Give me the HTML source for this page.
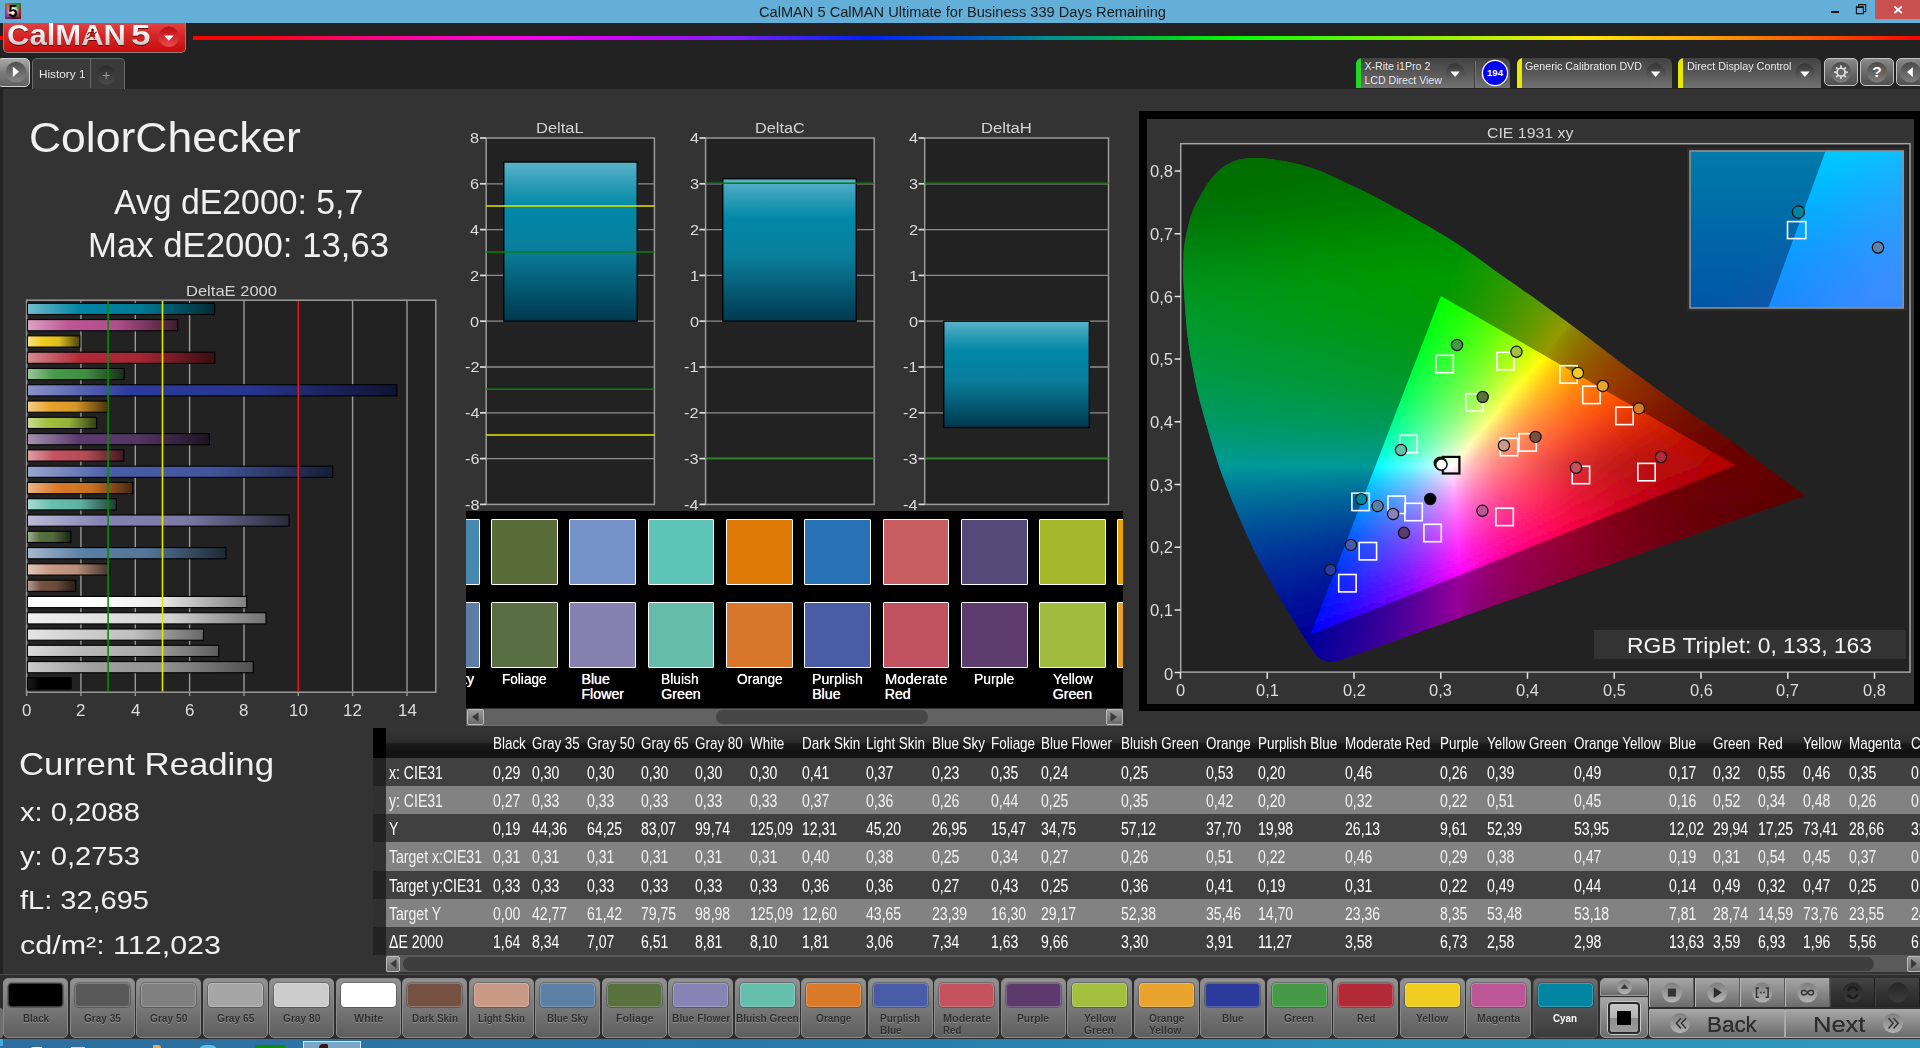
<!DOCTYPE html><html><head><meta charset="utf-8"><title>CalMAN 5</title><style>
html,body{margin:0;padding:0;background:#333;}
html{width:1920px;height:1048px;overflow:hidden;}
body{width:1920px;height:1048px;position:relative;overflow:hidden;font-family:"Liberation Sans",sans-serif;}
#app{position:absolute;left:0;top:0;width:1920px;height:1048px;overflow:hidden;contain:strict;}
.b{position:absolute;box-sizing:border-box;}
.t{position:absolute;white-space:nowrap;transform-origin:0 50%;display:block;}
svg{position:absolute;left:0;top:0;overflow:visible;}
</style></head><body><div id="app"><div class="b" style="left:0.00px;top:0.00px;width:1920.00px;height:23.00px;background:#63afd7;"></div>
<div class="b" style="left:5.00px;top:3.00px;width:16.00px;height:16.00px;background:conic-gradient(from 30deg,#2a8a2a,#a02020,#301030,#a030a0,#c06020,#2a8a2a);overflow:hidden;"><div class="b" style="left:2px;top:2px;width:12px;height:12px;background:radial-gradient(#fff 25%,rgba(255,255,255,.15) 72%);"></div></div>
<span class="t" style="left:8.20px;top:3.33px;font-size:16.50px;line-height:16.50px;color:#000;font-weight:700;">5</span>
<span class="t" style="left:759.00px;top:3.68px;font-size:15.50px;line-height:15.50px;color:#1c1c1c;transform:scaleX(0.9430);">CalMAN 5 CalMAN Ultimate for Business 339 Days Remaining</span>
<div class="b" style="left:1831.00px;top:11.00px;width:8.00px;height:2.00px;background:#1a1410;"></div>
<svg width="1920" height="24"><path d="M1856.4 7.2h7v6.4h-7zM1858.7 6.4v-1.8h7v7h-1.9" fill="none" stroke="#1a1410" stroke-width="1.1"/><rect x="1855.9" y="6.2" width="8" height="1.7" fill="#1a1410"/><rect x="1875" y="0" width="45" height="19" fill="#c8504f"/><path d="M1894.4 6.5l7.4 6.5m0-6.5l-7.4 6.5" stroke="#fff" stroke-width="1.8" fill="none"/></svg>
<div class="b" style="left:0.00px;top:23.00px;width:1920.00px;height:65.60px;background:#222;"></div>
<div class="b" style="left:0.00px;top:35.50px;width:4.00px;height:4.70px;background:#f00;"></div>
<div class="b" style="left:193.00px;top:35.50px;width:1727.00px;height:4.70px;background:linear-gradient(90deg,#ff0000 0%,#ff0010 3.9%,#ff0060 8.5%,#ff00a0 12.5%,#ff00e0 17.8%,#d000ff 24.5%,#8020ff 31.1%,#0020ff 39.1%,#0060c0 45.7%,#009090 49.7%,#00a860 53%,#00e010 58.3%,#10ff00 61%,#80f000 70.3%,#c0f000 75.6%,#ffe800 80.4%,#ffb000 86.2%,#ff7000 91.5%,#ff3000 96.9%,#ff0000 100%);"></div>
<div class="b" style="left:3.00px;top:23.00px;width:182.60px;height:29.50px;background:linear-gradient(#e24343,#d62525 45%,#c80c0c);border-radius:0 0 5px 5px;border:1px solid #8e8080;border-top:none;"></div>
<span class="t" style="left:7.40px;top:20.44px;font-size:30.20px;line-height:30.20px;color:#ececec;font-weight:700;transform:scaleX(1.0279);background:linear-gradient(#ffffff 15%,#f0f0f0 45%,#c4c4c4 85%);-webkit-background-clip:text;background-clip:text;-webkit-text-fill-color:transparent;filter:drop-shadow(0 1px .6px rgba(70,0,0,.75));">CalMAN</span>
<span class="t" style="left:130.60px;top:20.44px;font-size:30.20px;line-height:30.20px;color:#ececec;font-weight:700;transform:scaleX(1.1669);background:linear-gradient(#ffffff 15%,#f0f0f0 45%,#c4c4c4 85%);-webkit-background-clip:text;background-clip:text;-webkit-text-fill-color:transparent;filter:drop-shadow(0 1px .6px rgba(70,0,0,.75));">5</span>
<svg width="200" height="60"><defs><linearGradient id="lg1" x1="0" y1="0" x2="0" y2="1"><stop offset="0" stop-color="#bb0a14"/><stop offset="1" stop-color="#ea4c4c"/></linearGradient></defs><circle cx="168.8" cy="36.8" r="10.2" fill="url(#lg1)"/><path d="M164 35.6h9.8l-4.9 5.2z" fill="#fff"/><g fill="none" stroke="#8c0c0c" stroke-width="1.15" stroke-linecap="round" stroke-linejoin="round"><path d="M92 32L90.3 35.4M91.8 32.4L94.6 33.8L96.2 32.2M91.6 32.4L88.8 32.8L87.6 34.8M90.3 35.4L93.4 36.2L94.4 38.8M90.3 35.4L89.6 37.6L87 38.4"/></g><circle cx="92.6" cy="30" r="1.35" fill="#8c0c0c"/></svg>
<div class="b" style="left:-3.00px;top:58.00px;width:33.00px;height:28.50px;background:linear-gradient(#a8a8a8,#7c7c7c 50%,#626262);border:1px solid #d0d0d0;border-radius:5px;"></div>
<svg width="200" height="100"><defs><linearGradient id="lg2" x1="0" y1="0" x2="0" y2="1"><stop offset="0" stop-color="#4e4e4e"/><stop offset="1" stop-color="#868686"/></linearGradient><linearGradient id="lg3" x1="0" y1="0" x2="0" y2="1"><stop offset="0" stop-color="#2c2c2c"/><stop offset="1" stop-color="#4a4a4a"/></linearGradient></defs><circle cx="16" cy="72" r="10.3" fill="url(#lg2)"/><path d="M12.8 66.5v10.6l6.2-5.3z" fill="#fff"/></svg>
<div class="b" style="left:32.00px;top:58.00px;width:92.50px;height:31.00px;background:#3a3a3a;border:1px solid #6a6a6a;border-bottom:none;border-radius:5px 5px 0 0;"></div>
<div class="b" style="left:90.00px;top:59.00px;width:1.00px;height:29.00px;background:#6a6a6a;"></div>
<span class="t" style="left:38.50px;top:67.98px;font-size:11.60px;line-height:11.60px;color:#e8e8e8;transform:scaleX(1.0160);">History 1</span>
<svg width="200" height="100"><circle cx="106.3" cy="75" r="9.6" fill="url(#lg3)"/><path d="M102.8 75.5h7M106.3 72v7" stroke="#999" stroke-width="1" fill="none"/></svg>
<div class="b" style="left:1356.30px;top:58.00px;width:153.70px;height:30.00px;background:linear-gradient(#424242,#585858 50%,#727272);border-radius:6px 6px 0 0;overflow:hidden;"><div class="b" style="left:0;top:0;width:5.2px;height:30px;background:#20d820"></div></div>
<div class="b" style="left:1516.50px;top:58.00px;width:155.00px;height:30.00px;background:linear-gradient(#424242,#585858 50%,#727272);border-radius:6px 6px 0 0;overflow:hidden;"><div class="b" style="left:0;top:0;width:5.2px;height:30px;background:#eaea00"></div></div>
<div class="b" style="left:1677.90px;top:58.00px;width:143.10px;height:30.00px;background:linear-gradient(#424242,#585858 50%,#727272);border-radius:6px 6px 0 0;overflow:hidden;"><div class="b" style="left:0;top:0;width:5.2px;height:30px;background:#eaea00"></div></div>
<span class="t" style="left:1364.40px;top:60.53px;font-size:10.60px;line-height:10.60px;color:#f4f4f4;text-shadow:0 0 1px rgba(0,0,0,.5);">X-Rite i1Pro 2</span>
<span class="t" style="left:1364.40px;top:74.63px;font-size:10.60px;line-height:10.60px;color:#f4f4f4;text-shadow:0 0 1px rgba(0,0,0,.5);">LCD Direct View</span>
<span class="t" style="left:1525.00px;top:60.53px;font-size:10.60px;line-height:10.60px;color:#f4f4f4;transform:scaleX(1.0081);text-shadow:0 0 1px rgba(0,0,0,.5);">Generic Calibration DVD</span>
<span class="t" style="left:1687.10px;top:61.03px;font-size:10.60px;line-height:10.60px;color:#f4f4f4;transform:scaleX(1.0195);text-shadow:0 0 1px rgba(0,0,0,.5);">Direct Display Control</span>
<div class="b" style="left:1474.20px;top:61.00px;width:1.00px;height:27.00px;background:#3a3a3a;"></div>
<div class="b" style="left:1475.20px;top:61.00px;width:1.00px;height:27.00px;background:#777;"></div>
<svg width="1920" height="100"><defs><linearGradient id="lg4" x1="0" y1="0" x2="0" y2="1"><stop offset="0" stop-color="#353535"/><stop offset="1" stop-color="#6c6c6c"/></linearGradient><linearGradient id="lg5" x1="0" y1="0" x2="0" y2="1"><stop offset="0" stop-color="#4a4a4a"/><stop offset="1" stop-color="#7e7e7e"/></linearGradient></defs><circle cx="1455.1" cy="73" r="9.7" fill="url(#lg4)"/><path d="M1450.4 71.6h9.4l-4.7 5.4z" fill="#fff"/><circle cx="1655.6" cy="73" r="9.7" fill="url(#lg4)"/><path d="M1650.9 71.6h9.4l-4.7 5.4z" fill="#fff"/><circle cx="1804.9" cy="73" r="9.7" fill="url(#lg4)"/><path d="M1800.2 71.6h9.4l-4.7 5.4z" fill="#fff"/><circle cx="1495" cy="73" r="12.6" fill="#0000f0" stroke="#fff" stroke-width="1.3"/></svg>
<span class="t" style="left:1486.99px;top:68.17px;font-size:9.60px;line-height:9.60px;color:#fff;font-weight:700;">194</span>
<div class="b" style="left:1823.80px;top:58.00px;width:34.40px;height:28.30px;background:linear-gradient(#8a8a8a,#6a6a6a 50%,#505050);border:1px solid #c4c4c4;border-radius:5px;"></div>
<div class="b" style="left:1860.20px;top:58.00px;width:33.80px;height:28.30px;background:linear-gradient(#8a8a8a,#6a6a6a 50%,#505050);border:1px solid #c4c4c4;border-radius:5px;"></div>
<div class="b" style="left:1896.30px;top:58.00px;width:34.00px;height:28.30px;background:linear-gradient(#8a8a8a,#6a6a6a 50%,#505050);border:1px solid #c4c4c4;border-radius:5px;"></div>
<svg width="1920" height="100"><circle cx="1841.0" cy="72.2" r="10.2" fill="url(#lg5)"/><circle cx="1877.1" cy="72.2" r="10.2" fill="url(#lg5)"/><circle cx="1910.5" cy="72.2" r="10.2" fill="url(#lg5)"/><path d="M1847.84 71.31L1847.84 73.09L1845.81 73.14L1845.06 74.94L1846.47 76.41L1845.21 77.67L1843.74 76.26L1841.94 77.01L1841.89 79.04L1840.11 79.04L1840.06 77.01L1838.26 76.26L1836.79 77.67L1835.53 76.41L1836.94 74.94L1836.19 73.14L1834.16 73.09L1834.16 71.31L1836.19 71.26L1836.94 69.46L1835.53 67.99L1836.79 66.73L1838.26 68.14L1840.06 67.39L1840.11 65.36L1841.89 65.36L1841.94 67.39L1843.74 68.14L1845.21 66.73L1846.47 67.99L1845.06 69.46L1845.81 71.26Z" fill="#d8d8d8"/><circle cx="1841" cy="72.2" r="3.1" fill="#6a6a6a"/><circle cx="1841" cy="72.2" r="2.1" fill="#666"/><path d="M1912.8 67.2v9.8l-5.8-4.9z" fill="#fff"/></svg>
<span class="t" style="left:1872.37px;top:64.48px;font-size:15.50px;line-height:15.50px;color:#fff;font-weight:700;">?</span>
<div class="b" style="left:0.00px;top:88.00px;width:3.00px;height:960.00px;background:#222;"></div>
<span class="t" style="left:29.20px;top:116.08px;font-size:43.02px;line-height:43.02px;color:#f0f0f0;transform:scaleX(1.0341);">ColorChecker</span>
<span class="t" style="left:113.80px;top:184.69px;font-size:34.16px;line-height:34.16px;color:#f0f0f0;transform:scaleX(0.9890);">Avg dE2000: 5,7</span>
<span class="t" style="left:88.00px;top:228.39px;font-size:34.16px;line-height:34.16px;color:#f0f0f0;transform:scaleX(1.0161);">Max dE2000: 13,63</span>
<span class="t" style="left:185.70px;top:282.70px;font-size:15.12px;line-height:15.12px;color:#d4d4d4;transform:scaleX(1.0937);">DeltaE 2000</span>
<svg width="460" height="730"><defs><linearGradient id="bg0"><stop offset="0" stop-color="#1c1c1c"/><stop offset=".3" stop-color="#000"/><stop offset="1" stop-color="#000"/></linearGradient><linearGradient id="bg1"><stop offset="0" stop-color="#cbcbcb"/><stop offset=".28" stop-color="#a0a0a0"/><stop offset=".6" stop-color="#939393"/><stop offset="1" stop-color="#505050"/></linearGradient><linearGradient id="bg2"><stop offset="0" stop-color="#d9d9d9"/><stop offset=".28" stop-color="#bababa"/><stop offset=".6" stop-color="#ababab"/><stop offset="1" stop-color="#5d5d5d"/></linearGradient><linearGradient id="bg3"><stop offset="0" stop-color="#e5e5e5"/><stop offset=".28" stop-color="#d0d0d0"/><stop offset=".6" stop-color="#bfbfbf"/><stop offset="1" stop-color="#686868"/></linearGradient><linearGradient id="bg4"><stop offset="0" stop-color="#f0f0f0"/><stop offset=".28" stop-color="#e4e4e4"/><stop offset=".6" stop-color="#d2d2d2"/><stop offset="1" stop-color="#727272"/></linearGradient><linearGradient id="bg5"><stop offset="0" stop-color="#ffffff"/><stop offset=".28" stop-color="#ffffff"/><stop offset=".6" stop-color="#ebebeb"/><stop offset="1" stop-color="#808080"/></linearGradient><linearGradient id="bg6"><stop offset="0" stop-color="#b49f96"/><stop offset=".28" stop-color="#765040"/><stop offset=".6" stop-color="#6d4a3b"/><stop offset="1" stop-color="#261a14"/></linearGradient><linearGradient id="bg7"><stop offset="0" stop-color="#e1c7bc"/><stop offset=".28" stop-color="#c99a85"/><stop offset=".6" stop-color="#b98e7a"/><stop offset="1" stop-color="#40312b"/></linearGradient><linearGradient id="bg8"><stop offset="0" stop-color="#a5b9ce"/><stop offset=".28" stop-color="#5b7fa5"/><stop offset=".6" stop-color="#547598"/><stop offset="1" stop-color="#1d2935"/></linearGradient><linearGradient id="bg9"><stop offset="0" stop-color="#a4b195"/><stop offset=".28" stop-color="#59713f"/><stop offset=".6" stop-color="#52683a"/><stop offset="1" stop-color="#1c2414"/></linearGradient><linearGradient id="bg10"><stop offset="0" stop-color="#bdbbd6"/><stop offset=".28" stop-color="#8784b5"/><stop offset=".6" stop-color="#7c79a7"/><stop offset="1" stop-color="#2b2a3a"/></linearGradient><linearGradient id="bg11"><stop offset="0" stop-color="#abdcd2"/><stop offset=".28" stop-color="#66bfad"/><stop offset=".6" stop-color="#5eb09f"/><stop offset="1" stop-color="#213d37"/></linearGradient><linearGradient id="bg12"><stop offset="0" stop-color="#ebb689"/><stop offset=".28" stop-color="#da7a28"/><stop offset=".6" stop-color="#c97025"/><stop offset="1" stop-color="#46270d"/></linearGradient><linearGradient id="bg13"><stop offset="0" stop-color="#9aa5cf"/><stop offset=".28" stop-color="#485ca8"/><stop offset=".6" stop-color="#42559b"/><stop offset="1" stop-color="#171d36"/></linearGradient><linearGradient id="bg14"><stop offset="0" stop-color="#dfa0a7"/><stop offset=".28" stop-color="#c4525f"/><stop offset=".6" stop-color="#b44b57"/><stop offset="1" stop-color="#3f1a1e"/></linearGradient><linearGradient id="bg15"><stop offset="0" stop-color="#a593af"/><stop offset=".28" stop-color="#5c3a6e"/><stop offset=".6" stop-color="#553565"/><stop offset="1" stop-color="#1d1323"/></linearGradient><linearGradient id="bg16"><stop offset="0" stop-color="#ccdc95"/><stop offset=".28" stop-color="#a2c03e"/><stop offset=".6" stop-color="#95b139"/><stop offset="1" stop-color="#343d14"/></linearGradient><linearGradient id="bg17"><stop offset="0" stop-color="#f2cd8b"/><stop offset=".28" stop-color="#e8a42c"/><stop offset=".6" stop-color="#d59728"/><stop offset="1" stop-color="#4a340e"/></linearGradient><linearGradient id="bg18"><stop offset="0" stop-color="#8a93c9"/><stop offset=".28" stop-color="#2b3a9c"/><stop offset=".6" stop-color="#283590"/><stop offset="1" stop-color="#0e1332"/></linearGradient><linearGradient id="bg19"><stop offset="0" stop-color="#99c79a"/><stop offset=".28" stop-color="#469a47"/><stop offset=".6" stop-color="#408e41"/><stop offset="1" stop-color="#163117"/></linearGradient><linearGradient id="bg20"><stop offset="0" stop-color="#d58a92"/><stop offset=".28" stop-color="#b22a38"/><stop offset=".6" stop-color="#a42734"/><stop offset="1" stop-color="#390d12"/></linearGradient><linearGradient id="bg21"><stop offset="0" stop-color="#f7e484"/><stop offset=".28" stop-color="#f0cd20"/><stop offset=".6" stop-color="#ddbd1d"/><stop offset="1" stop-color="#4d420a"/></linearGradient><linearGradient id="bg22"><stop offset="0" stop-color="#dba2c5"/><stop offset=".28" stop-color="#bd5696"/><stop offset=".6" stop-color="#ae4f8a"/><stop offset="1" stop-color="#3c1c30"/></linearGradient><linearGradient id="bg23"><stop offset="0" stop-color="#73bccc"/><stop offset=".28" stop-color="#0085a3"/><stop offset=".6" stop-color="#007a96"/><stop offset="1" stop-color="#002b34"/></linearGradient></defs><rect x="26.6" y="300.2" width="409.2" height="392" fill="#222" stroke="#9a9a9a" stroke-width="1.5"/><path d="M80.9 301v390.5" stroke="#9a9a9a" stroke-width="1.4"/><path d="M135.3 301v390.5" stroke="#9a9a9a" stroke-width="1.4"/><path d="M189.6 301v390.5" stroke="#9a9a9a" stroke-width="1.4"/><path d="M244.0 301v390.5" stroke="#9a9a9a" stroke-width="1.4"/><path d="M352.6 301v390.5" stroke="#9a9a9a" stroke-width="1.4"/><path d="M407.0 301v390.5" stroke="#9a9a9a" stroke-width="1.4"/><rect x="27.4" y="303.30" width="187.22" height="11.2" fill="url(#bg23)" stroke="#000" stroke-width="1.1"/><rect x="27.4" y="319.59" width="150.27" height="11.2" fill="url(#bg22)" stroke="#000" stroke-width="1.1"/><rect x="27.4" y="335.87" width="52.45" height="11.2" fill="url(#bg21)" stroke="#000" stroke-width="1.1"/><rect x="27.4" y="352.16" width="187.49" height="11.2" fill="url(#bg20)" stroke="#000" stroke-width="1.1"/><rect x="27.4" y="368.44" width="96.74" height="11.2" fill="url(#bg19)" stroke="#000" stroke-width="1.1"/><rect x="27.4" y="384.73" width="369.53" height="11.2" fill="url(#bg18)" stroke="#000" stroke-width="1.1"/><rect x="27.4" y="401.01" width="80.17" height="11.2" fill="url(#bg17)" stroke="#000" stroke-width="1.1"/><rect x="27.4" y="417.30" width="69.30" height="11.2" fill="url(#bg16)" stroke="#000" stroke-width="1.1"/><rect x="27.4" y="433.58" width="182.05" height="11.2" fill="url(#bg15)" stroke="#000" stroke-width="1.1"/><rect x="27.4" y="449.87" width="96.47" height="11.2" fill="url(#bg14)" stroke="#000" stroke-width="1.1"/><rect x="27.4" y="466.15" width="305.41" height="11.2" fill="url(#bg13)" stroke="#000" stroke-width="1.1"/><rect x="27.4" y="482.44" width="105.43" height="11.2" fill="url(#bg12)" stroke="#000" stroke-width="1.1"/><rect x="27.4" y="498.72" width="88.86" height="11.2" fill="url(#bg11)" stroke="#000" stroke-width="1.1"/><rect x="27.4" y="515.00" width="261.66" height="11.2" fill="url(#bg10)" stroke="#000" stroke-width="1.1"/><rect x="27.4" y="531.29" width="43.49" height="11.2" fill="url(#bg9)" stroke="#000" stroke-width="1.1"/><rect x="27.4" y="547.58" width="198.63" height="11.2" fill="url(#bg8)" stroke="#000" stroke-width="1.1"/><rect x="27.4" y="563.86" width="82.34" height="11.2" fill="url(#bg7)" stroke="#000" stroke-width="1.1"/><rect x="27.4" y="580.14" width="48.38" height="11.2" fill="url(#bg6)" stroke="#000" stroke-width="1.1"/><rect x="27.4" y="596.43" width="219.28" height="11.2" fill="url(#bg5)" stroke="#000" stroke-width="1.1"/><rect x="27.4" y="612.72" width="238.57" height="11.2" fill="url(#bg4)" stroke="#000" stroke-width="1.1"/><rect x="27.4" y="629.00" width="176.08" height="11.2" fill="url(#bg3)" stroke="#000" stroke-width="1.1"/><rect x="27.4" y="645.29" width="191.29" height="11.2" fill="url(#bg2)" stroke="#000" stroke-width="1.1"/><rect x="27.4" y="661.57" width="225.80" height="11.2" fill="url(#bg1)" stroke="#000" stroke-width="1.1"/><rect x="27.4" y="677.86" width="43.76" height="11.2" fill="url(#bg0)" stroke="#000" stroke-width="1.1"/><path d="M108.1 301v390.5" stroke="#0a8a0a" stroke-width="1.6"/><path d="M162.5 301v390.5" stroke="#e6e600" stroke-width="1.6"/><path d="M298.3 301v390.5" stroke="#e01818" stroke-width="1.6"/><path d="M26.6 692v4" stroke="#9a9a9a" stroke-width="1.4"/><path d="M80.9 692v4" stroke="#9a9a9a" stroke-width="1.4"/><path d="M135.3 692v4" stroke="#9a9a9a" stroke-width="1.4"/><path d="M189.6 692v4" stroke="#9a9a9a" stroke-width="1.4"/><path d="M244.0 692v4" stroke="#9a9a9a" stroke-width="1.4"/><path d="M298.3 692v4" stroke="#9a9a9a" stroke-width="1.4"/><path d="M352.6 692v4" stroke="#9a9a9a" stroke-width="1.4"/><path d="M407.0 692v4" stroke="#9a9a9a" stroke-width="1.4"/></svg>
<span class="t" style="left:21.89px;top:702.51px;font-size:15.70px;line-height:15.70px;color:#dcdcdc;transform:scaleX(1.0800);">0</span>
<span class="t" style="left:76.23px;top:702.51px;font-size:15.70px;line-height:15.70px;color:#dcdcdc;transform:scaleX(1.0800);">2</span>
<span class="t" style="left:130.57px;top:702.51px;font-size:15.70px;line-height:15.70px;color:#dcdcdc;transform:scaleX(1.0800);">4</span>
<span class="t" style="left:184.91px;top:702.51px;font-size:15.70px;line-height:15.70px;color:#dcdcdc;transform:scaleX(1.0800);">6</span>
<span class="t" style="left:239.25px;top:702.51px;font-size:15.70px;line-height:15.70px;color:#dcdcdc;transform:scaleX(1.0800);">8</span>
<span class="t" style="left:288.87px;top:702.51px;font-size:15.70px;line-height:15.70px;color:#dcdcdc;transform:scaleX(1.0800);">10</span>
<span class="t" style="left:343.21px;top:702.51px;font-size:15.70px;line-height:15.70px;color:#dcdcdc;transform:scaleX(1.0800);">12</span>
<span class="t" style="left:397.55px;top:702.51px;font-size:15.70px;line-height:15.70px;color:#dcdcdc;transform:scaleX(1.0800);">14</span>
<span class="t" style="left:19.00px;top:748.85px;font-size:31.25px;line-height:31.25px;color:#f0f0f0;transform:scaleX(1.1121);">Current Reading</span>
<span class="t" style="left:19.80px;top:799.94px;font-size:25.00px;line-height:25.00px;color:#f0f0f0;transform:scaleX(1.1667);">x: 0,2088</span>
<span class="t" style="left:19.80px;top:843.74px;font-size:25.00px;line-height:25.00px;color:#f0f0f0;transform:scaleX(1.1667);">y: 0,2753</span>
<span class="t" style="left:19.80px;top:888.14px;font-size:25.00px;line-height:25.00px;color:#f0f0f0;transform:scaleX(1.1600);">fL: 32,695</span>
<span class="t" style="left:19.80px;top:933.04px;font-size:25.00px;line-height:25.00px;color:#f0f0f0;transform:scaleX(1.2189);">cd/m²: 112,023</span>
<span class="t" style="left:464.88px;top:496.83px;font-size:15.55px;line-height:15.55px;color:#dcdcdc;transform:scaleX(1.0500);">-8</span>
<span class="t" style="left:464.88px;top:451.03px;font-size:15.55px;line-height:15.55px;color:#dcdcdc;transform:scaleX(1.0500);">-6</span>
<span class="t" style="left:464.88px;top:405.23px;font-size:15.55px;line-height:15.55px;color:#dcdcdc;transform:scaleX(1.0500);">-4</span>
<span class="t" style="left:464.88px;top:359.43px;font-size:15.55px;line-height:15.55px;color:#dcdcdc;transform:scaleX(1.0500);">-2</span>
<span class="t" style="left:470.32px;top:313.63px;font-size:15.55px;line-height:15.55px;color:#dcdcdc;transform:scaleX(1.0500);">0</span>
<span class="t" style="left:470.32px;top:267.83px;font-size:15.55px;line-height:15.55px;color:#dcdcdc;transform:scaleX(1.0500);">2</span>
<span class="t" style="left:470.32px;top:222.03px;font-size:15.55px;line-height:15.55px;color:#dcdcdc;transform:scaleX(1.0500);">4</span>
<span class="t" style="left:470.32px;top:176.23px;font-size:15.55px;line-height:15.55px;color:#dcdcdc;transform:scaleX(1.0500);">6</span>
<span class="t" style="left:470.32px;top:130.43px;font-size:15.55px;line-height:15.55px;color:#dcdcdc;transform:scaleX(1.0500);">8</span>
<span class="t" style="left:536.30px;top:120.65px;font-size:14.83px;line-height:14.83px;color:#d4d4d4;transform:scaleX(1.1130);">DeltaL</span>
<span class="t" style="left:684.28px;top:496.83px;font-size:15.55px;line-height:15.55px;color:#dcdcdc;transform:scaleX(1.0500);">-4</span>
<span class="t" style="left:684.28px;top:451.03px;font-size:15.55px;line-height:15.55px;color:#dcdcdc;transform:scaleX(1.0500);">-3</span>
<span class="t" style="left:684.28px;top:405.23px;font-size:15.55px;line-height:15.55px;color:#dcdcdc;transform:scaleX(1.0500);">-2</span>
<span class="t" style="left:684.28px;top:359.43px;font-size:15.55px;line-height:15.55px;color:#dcdcdc;transform:scaleX(1.0500);">-1</span>
<span class="t" style="left:689.72px;top:313.63px;font-size:15.55px;line-height:15.55px;color:#dcdcdc;transform:scaleX(1.0500);">0</span>
<span class="t" style="left:689.72px;top:267.83px;font-size:15.55px;line-height:15.55px;color:#dcdcdc;transform:scaleX(1.0500);">1</span>
<span class="t" style="left:689.72px;top:222.03px;font-size:15.55px;line-height:15.55px;color:#dcdcdc;transform:scaleX(1.0500);">2</span>
<span class="t" style="left:689.72px;top:176.23px;font-size:15.55px;line-height:15.55px;color:#dcdcdc;transform:scaleX(1.0500);">3</span>
<span class="t" style="left:689.72px;top:130.43px;font-size:15.55px;line-height:15.55px;color:#dcdcdc;transform:scaleX(1.0500);">4</span>
<span class="t" style="left:754.50px;top:120.65px;font-size:14.83px;line-height:14.83px;color:#d4d4d4;transform:scaleX(1.0967);">DeltaC</span>
<span class="t" style="left:903.38px;top:496.83px;font-size:15.55px;line-height:15.55px;color:#dcdcdc;transform:scaleX(1.0500);">-4</span>
<span class="t" style="left:903.38px;top:451.03px;font-size:15.55px;line-height:15.55px;color:#dcdcdc;transform:scaleX(1.0500);">-3</span>
<span class="t" style="left:903.38px;top:405.23px;font-size:15.55px;line-height:15.55px;color:#dcdcdc;transform:scaleX(1.0500);">-2</span>
<span class="t" style="left:903.38px;top:359.43px;font-size:15.55px;line-height:15.55px;color:#dcdcdc;transform:scaleX(1.0500);">-1</span>
<span class="t" style="left:908.82px;top:313.63px;font-size:15.55px;line-height:15.55px;color:#dcdcdc;transform:scaleX(1.0500);">0</span>
<span class="t" style="left:908.82px;top:267.83px;font-size:15.55px;line-height:15.55px;color:#dcdcdc;transform:scaleX(1.0500);">1</span>
<span class="t" style="left:908.82px;top:222.03px;font-size:15.55px;line-height:15.55px;color:#dcdcdc;transform:scaleX(1.0500);">2</span>
<span class="t" style="left:908.82px;top:176.23px;font-size:15.55px;line-height:15.55px;color:#dcdcdc;transform:scaleX(1.0500);">3</span>
<span class="t" style="left:908.82px;top:130.43px;font-size:15.55px;line-height:15.55px;color:#dcdcdc;transform:scaleX(1.0500);">4</span>
<span class="t" style="left:980.60px;top:120.65px;font-size:14.83px;line-height:14.83px;color:#d4d4d4;transform:scaleX(1.1210);">DeltaH</span>
<svg width="1140" height="520"><defs><linearGradient id="cy" x1="0" y1="0" x2="0" y2="1"><stop offset="0" stop-color="#5cb4c9"/><stop offset=".1" stop-color="#39a2bc"/><stop offset=".28" stop-color="#0088a6"/><stop offset=".55" stop-color="#0a7e9c"/><stop offset="1" stop-color="#00384e"/></linearGradient></defs><rect x="486.2" y="138.0" width="168.2" height="366.4" fill="#222" stroke="#9a9a9a" stroke-width="1.5"/><path d="M480.0 504.40h6" stroke="#dcdcdc" stroke-width="1.7"/><path d="M486.2 458.60H654.4" stroke="#8c8c8c" stroke-width="1.3"/><path d="M480.0 458.60h6" stroke="#dcdcdc" stroke-width="1.7"/><path d="M486.2 412.80H654.4" stroke="#8c8c8c" stroke-width="1.3"/><path d="M480.0 412.80h6" stroke="#dcdcdc" stroke-width="1.7"/><path d="M486.2 367.00H654.4" stroke="#8c8c8c" stroke-width="1.3"/><path d="M480.0 367.00h6" stroke="#dcdcdc" stroke-width="1.7"/><path d="M486.2 321.20H654.4" stroke="#8c8c8c" stroke-width="1.3"/><path d="M480.0 321.20h6" stroke="#dcdcdc" stroke-width="1.7"/><path d="M486.2 275.40H654.4" stroke="#8c8c8c" stroke-width="1.3"/><path d="M480.0 275.40h6" stroke="#dcdcdc" stroke-width="1.7"/><path d="M486.2 229.60H654.4" stroke="#8c8c8c" stroke-width="1.3"/><path d="M480.0 229.60h6" stroke="#dcdcdc" stroke-width="1.7"/><path d="M486.2 183.80H654.4" stroke="#8c8c8c" stroke-width="1.3"/><path d="M480.0 183.80h6" stroke="#dcdcdc" stroke-width="1.7"/><path d="M480.0 138.00h6" stroke="#dcdcdc" stroke-width="1.7"/><rect x="503.8" y="162.04" width="133.4" height="159.16" fill="url(#cy)" stroke="#000" stroke-width="1.3"/><path d="M486.2 206.10H654.4" stroke="#e6e600" stroke-width="1.5"/><path d="M486.2 435.10H654.4" stroke="#e6e600" stroke-width="1.5"/><path d="M486.2 251.90H654.4" stroke="#0b7f0b" stroke-width="1.5"/><path d="M486.2 389.30H654.4" stroke="#0b7f0b" stroke-width="1.5"/><rect x="705.6" y="138.0" width="168.6" height="366.4" fill="#222" stroke="#9a9a9a" stroke-width="1.5"/><path d="M699.4 504.40h6" stroke="#dcdcdc" stroke-width="1.7"/><path d="M705.6 458.60H874.2" stroke="#8c8c8c" stroke-width="1.3"/><path d="M699.4 458.60h6" stroke="#dcdcdc" stroke-width="1.7"/><path d="M705.6 412.80H874.2" stroke="#8c8c8c" stroke-width="1.3"/><path d="M699.4 412.80h6" stroke="#dcdcdc" stroke-width="1.7"/><path d="M705.6 367.00H874.2" stroke="#8c8c8c" stroke-width="1.3"/><path d="M699.4 367.00h6" stroke="#dcdcdc" stroke-width="1.7"/><path d="M705.6 321.20H874.2" stroke="#8c8c8c" stroke-width="1.3"/><path d="M699.4 321.20h6" stroke="#dcdcdc" stroke-width="1.7"/><path d="M705.6 275.40H874.2" stroke="#8c8c8c" stroke-width="1.3"/><path d="M699.4 275.40h6" stroke="#dcdcdc" stroke-width="1.7"/><path d="M705.6 229.60H874.2" stroke="#8c8c8c" stroke-width="1.3"/><path d="M699.4 229.60h6" stroke="#dcdcdc" stroke-width="1.7"/><path d="M705.6 183.80H874.2" stroke="#8c8c8c" stroke-width="1.3"/><path d="M699.4 183.80h6" stroke="#dcdcdc" stroke-width="1.7"/><path d="M699.4 138.00h6" stroke="#dcdcdc" stroke-width="1.7"/><rect x="722.8" y="178.76" width="133.4" height="142.44" fill="url(#cy)" stroke="#000" stroke-width="1.3"/><path d="M705.6 183.20H874.2" stroke="#0b7f0b" stroke-width="1.5"/><path d="M705.6 458.00H874.2" stroke="#0b7f0b" stroke-width="1.5"/><rect x="924.7" y="138.0" width="183.8" height="366.4" fill="#222" stroke="#9a9a9a" stroke-width="1.5"/><path d="M918.5 504.40h6" stroke="#dcdcdc" stroke-width="1.7"/><path d="M924.7 458.60H1108.5" stroke="#8c8c8c" stroke-width="1.3"/><path d="M918.5 458.60h6" stroke="#dcdcdc" stroke-width="1.7"/><path d="M924.7 412.80H1108.5" stroke="#8c8c8c" stroke-width="1.3"/><path d="M918.5 412.80h6" stroke="#dcdcdc" stroke-width="1.7"/><path d="M924.7 367.00H1108.5" stroke="#8c8c8c" stroke-width="1.3"/><path d="M918.5 367.00h6" stroke="#dcdcdc" stroke-width="1.7"/><path d="M924.7 321.20H1108.5" stroke="#8c8c8c" stroke-width="1.3"/><path d="M918.5 321.20h6" stroke="#dcdcdc" stroke-width="1.7"/><path d="M924.7 275.40H1108.5" stroke="#8c8c8c" stroke-width="1.3"/><path d="M918.5 275.40h6" stroke="#dcdcdc" stroke-width="1.7"/><path d="M924.7 229.60H1108.5" stroke="#8c8c8c" stroke-width="1.3"/><path d="M918.5 229.60h6" stroke="#dcdcdc" stroke-width="1.7"/><path d="M924.7 183.80H1108.5" stroke="#8c8c8c" stroke-width="1.3"/><path d="M918.5 183.80h6" stroke="#dcdcdc" stroke-width="1.7"/><path d="M918.5 138.00h6" stroke="#dcdcdc" stroke-width="1.7"/><rect x="943.8" y="321.20" width="145.5" height="106.26" fill="url(#cy)" stroke="#000" stroke-width="1.3"/><path d="M924.7 183.20H1108.5" stroke="#0b7f0b" stroke-width="1.5"/><path d="M924.7 458.00H1108.5" stroke="#0b7f0b" stroke-width="1.5"/></svg>
<div class="b" style="left:466.00px;top:511.00px;width:657.00px;height:196.50px;background:#000;overflow:hidden;"><div class="b" style="left:-53.3px;top:8.1px;width:66.9px;height:66px;background:#4688b0;border:1.5px solid #fbfbfb;border-radius:1px"></div><div class="b" style="left:-53.3px;top:91.1px;width:66.9px;height:66px;background:#5c7ea6;border:1.5px solid #fbfbfb;border-radius:1px"></div><div class="b" style="left:25.0px;top:8.1px;width:66.9px;height:66px;background:#5a6b3a;border:1.5px solid #fbfbfb;border-radius:1px"></div><div class="b" style="left:25.0px;top:91.1px;width:66.9px;height:66px;background:#5a6e44;border:1.5px solid #fbfbfb;border-radius:1px"></div><div class="b" style="left:103.3px;top:8.1px;width:66.9px;height:66px;background:#7693c9;border:1.5px solid #fbfbfb;border-radius:1px"></div><div class="b" style="left:103.3px;top:91.1px;width:66.9px;height:66px;background:#8580b0;border:1.5px solid #fbfbfb;border-radius:1px"></div><div class="b" style="left:181.6px;top:8.1px;width:66.9px;height:66px;background:#5fc4b8;border:1.5px solid #fbfbfb;border-radius:1px"></div><div class="b" style="left:181.6px;top:91.1px;width:66.9px;height:66px;background:#66bcaa;border:1.5px solid #fbfbfb;border-radius:1px"></div><div class="b" style="left:259.9px;top:8.1px;width:66.9px;height:66px;background:#e07b08;border:1.5px solid #fbfbfb;border-radius:1px"></div><div class="b" style="left:259.9px;top:91.1px;width:66.9px;height:66px;background:#d9782c;border:1.5px solid #fbfbfb;border-radius:1px"></div><div class="b" style="left:338.2px;top:8.1px;width:66.9px;height:66px;background:#2a72b8;border:1.5px solid #fbfbfb;border-radius:1px"></div><div class="b" style="left:338.2px;top:91.1px;width:66.9px;height:66px;background:#4a5ca6;border:1.5px solid #fbfbfb;border-radius:1px"></div><div class="b" style="left:416.5px;top:8.1px;width:66.9px;height:66px;background:#c85e62;border:1.5px solid #fbfbfb;border-radius:1px"></div><div class="b" style="left:416.5px;top:91.1px;width:66.9px;height:66px;background:#c05260;border:1.5px solid #fbfbfb;border-radius:1px"></div><div class="b" style="left:494.8px;top:8.1px;width:66.9px;height:66px;background:#544a78;border:1.5px solid #fbfbfb;border-radius:1px"></div><div class="b" style="left:494.8px;top:91.1px;width:66.9px;height:66px;background:#5e3c6e;border:1.5px solid #fbfbfb;border-radius:1px"></div><div class="b" style="left:573.1px;top:8.1px;width:66.9px;height:66px;background:#a4b82c;border:1.5px solid #fbfbfb;border-radius:1px"></div><div class="b" style="left:573.1px;top:91.1px;width:66.9px;height:66px;background:#a0bc40;border:1.5px solid #fbfbfb;border-radius:1px"></div><div class="b" style="left:651.4px;top:8.1px;width:66.9px;height:66px;background:#e8a000;border:1.5px solid #fbfbfb;border-radius:1px"></div><div class="b" style="left:651.4px;top:91.1px;width:66.9px;height:66px;background:#e8a030;border:1.5px solid #fbfbfb;border-radius:1px"></div><span class="t" style="left:-47.87px;top:160.88px;font-size:14.20px;line-height:14.20px;color:#fff;text-shadow:0 0 .7px #fff;">Blue Sky</span><span class="t" style="left:36.15px;top:160.88px;font-size:14.20px;line-height:14.20px;color:#fff;transform:scaleX(0.9576);text-shadow:0 0 .7px #fff;">Foliage</span><span class="t" style="left:115.45px;top:160.88px;font-size:14.20px;line-height:14.20px;color:#fff;text-shadow:0 0 .7px #fff;">Blue</span><span class="t" style="left:115.45px;top:175.88px;font-size:14.20px;line-height:14.20px;color:#fff;text-shadow:0 0 .7px #fff;">Flower</span><span class="t" style="left:195.32px;top:160.88px;font-size:14.20px;line-height:14.20px;color:#fff;transform:scaleX(0.9747);text-shadow:0 0 .7px #fff;">Bluish</span><span class="t" style="left:195.32px;top:175.88px;font-size:14.20px;line-height:14.20px;color:#fff;text-shadow:0 0 .7px #fff;">Green</span><span class="t" style="left:270.50px;top:160.88px;font-size:14.20px;line-height:14.20px;color:#fff;transform:scaleX(0.9649);text-shadow:0 0 .7px #fff;">Orange</span><span class="t" style="left:346.15px;top:160.88px;font-size:14.20px;line-height:14.20px;color:#fff;transform:scaleX(0.9941);text-shadow:0 0 .7px #fff;">Purplish</span><span class="t" style="left:346.15px;top:175.88px;font-size:14.20px;line-height:14.20px;color:#fff;text-shadow:0 0 .7px #fff;">Blue</span><span class="t" style="left:418.70px;top:160.88px;font-size:14.20px;line-height:14.20px;color:#fff;transform:scaleX(1.0418);text-shadow:0 0 .7px #fff;">Moderate</span><span class="t" style="left:418.70px;top:175.88px;font-size:14.20px;line-height:14.20px;color:#fff;text-shadow:0 0 .7px #fff;">Red</span><span class="t" style="left:508.05px;top:160.88px;font-size:14.20px;line-height:14.20px;color:#fff;transform:scaleX(0.9842);text-shadow:0 0 .7px #fff;">Purple</span><span class="t" style="left:586.65px;top:160.88px;font-size:14.20px;line-height:14.20px;color:#fff;transform:scaleX(0.9820);text-shadow:0 0 .7px #fff;">Yellow</span><span class="t" style="left:586.65px;top:175.88px;font-size:14.20px;line-height:14.20px;color:#fff;text-shadow:0 0 .7px #fff;">Green</span><span class="t" style="left:662.00px;top:160.88px;font-size:14.20px;line-height:14.20px;color:#fff;transform:scaleX(0.9649);text-shadow:0 0 .7px #fff;">Orange</span><span class="t" style="left:662.00px;top:175.88px;font-size:14.20px;line-height:14.20px;color:#fff;transform:scaleX(0.9820);text-shadow:0 0 .7px #fff;">Yellow</span></div>
<div class="b" style="left:466.00px;top:708.70px;width:657.00px;height:16.50px;background:#626262;"></div>
<div class="b" style="left:466.50px;top:709.20px;width:17.00px;height:15.50px;background:linear-gradient(#9a9a9a,#6a6a6a);border:1px solid #bbb;border-radius:2px;"></div>
<div class="b" style="left:1105.50px;top:709.20px;width:17.00px;height:15.50px;background:linear-gradient(#9a9a9a,#6a6a6a);border:1px solid #bbb;border-radius:2px;"></div>
<div class="b" style="left:715.80px;top:710.20px;width:211.80px;height:13.50px;background:#464646;border-radius:7px;"></div>
<svg width="1140" height="730"><path d="M478.5 712.2v9.6l-6.5-4.8zM1110.5 712.2v9.6l6.5-4.8z" fill="#3a3a3a"/></svg>
<div class="b" style="left:1139.20px;top:111.00px;width:790.00px;height:599.80px;background:#000;"></div>
<div class="b" style="left:1147.00px;top:119.00px;width:767.00px;height:584.90px;background:#333;"></div>
<span class="t" style="left:1487.40px;top:125.46px;font-size:15.41px;line-height:15.41px;color:#d4d4d4;transform:scaleX(1.0295);">CIE 1931 xy</span>
<span class="t" style="left:1164.25px;top:666.97px;font-size:15.99px;line-height:15.99px;color:#dcdcdc;transform:scaleX(1.0400);">0</span>
<span class="t" style="left:1175.92px;top:682.59px;font-size:15.84px;line-height:15.84px;color:#dcdcdc;transform:scaleX(1.0400);">0</span>
<span class="t" style="left:1150.38px;top:603.17px;font-size:15.99px;line-height:15.99px;color:#dcdcdc;transform:scaleX(1.0400);">0,1</span>
<span class="t" style="left:1255.80px;top:682.59px;font-size:15.84px;line-height:15.84px;color:#dcdcdc;transform:scaleX(1.0400);">0,1</span>
<span class="t" style="left:1150.38px;top:540.47px;font-size:15.99px;line-height:15.99px;color:#dcdcdc;transform:scaleX(1.0400);">0,2</span>
<span class="t" style="left:1342.55px;top:682.59px;font-size:15.84px;line-height:15.84px;color:#dcdcdc;transform:scaleX(1.0400);">0,2</span>
<span class="t" style="left:1150.38px;top:477.77px;font-size:15.99px;line-height:15.99px;color:#dcdcdc;transform:scaleX(1.0400);">0,3</span>
<span class="t" style="left:1429.30px;top:682.59px;font-size:15.84px;line-height:15.84px;color:#dcdcdc;transform:scaleX(1.0400);">0,3</span>
<span class="t" style="left:1150.38px;top:415.07px;font-size:15.99px;line-height:15.99px;color:#dcdcdc;transform:scaleX(1.0400);">0,4</span>
<span class="t" style="left:1516.05px;top:682.59px;font-size:15.84px;line-height:15.84px;color:#dcdcdc;transform:scaleX(1.0400);">0,4</span>
<span class="t" style="left:1150.38px;top:352.37px;font-size:15.99px;line-height:15.99px;color:#dcdcdc;transform:scaleX(1.0400);">0,5</span>
<span class="t" style="left:1602.80px;top:682.59px;font-size:15.84px;line-height:15.84px;color:#dcdcdc;transform:scaleX(1.0400);">0,5</span>
<span class="t" style="left:1150.38px;top:289.67px;font-size:15.99px;line-height:15.99px;color:#dcdcdc;transform:scaleX(1.0400);">0,6</span>
<span class="t" style="left:1689.55px;top:682.59px;font-size:15.84px;line-height:15.84px;color:#dcdcdc;transform:scaleX(1.0400);">0,6</span>
<span class="t" style="left:1150.38px;top:226.97px;font-size:15.99px;line-height:15.99px;color:#dcdcdc;transform:scaleX(1.0400);">0,7</span>
<span class="t" style="left:1776.30px;top:682.59px;font-size:15.84px;line-height:15.84px;color:#dcdcdc;transform:scaleX(1.0400);">0,7</span>
<span class="t" style="left:1150.38px;top:164.27px;font-size:15.99px;line-height:15.99px;color:#dcdcdc;transform:scaleX(1.0400);">0,8</span>
<span class="t" style="left:1863.05px;top:682.59px;font-size:15.84px;line-height:15.84px;color:#dcdcdc;transform:scaleX(1.0400);">0,8</span>
<svg width="1920" height="720"><defs><linearGradient id="g0" gradientUnits="userSpaceOnUse" x1="1238" x2="1274"><stop offset="0" stop-color="#00ba00"/><stop offset="1" stop-color="#00ba00"/></linearGradient><linearGradient id="g1" gradientUnits="userSpaceOnUse" x1="1228" x2="1294"><stop offset="0" stop-color="#00ba00"/><stop offset="1" stop-color="#00ba00"/></linearGradient><linearGradient id="g2" gradientUnits="userSpaceOnUse" x1="1222" x2="1306"><stop offset="0" stop-color="#00ba00"/><stop offset="1" stop-color="#00ba00"/></linearGradient><linearGradient id="g3" gradientUnits="userSpaceOnUse" x1="1217" x2="1316"><stop offset="0" stop-color="#00ba00"/><stop offset="1" stop-color="#00ba00"/></linearGradient><linearGradient id="g4" gradientUnits="userSpaceOnUse" x1="1214" x2="1325"><stop offset="0" stop-color="#00ba01"/><stop offset="1" stop-color="#00bb00"/></linearGradient><linearGradient id="g5" gradientUnits="userSpaceOnUse" x1="1211" x2="1332"><stop offset="0" stop-color="#00ba01"/><stop offset="1" stop-color="#00bb00"/></linearGradient><linearGradient id="g6" gradientUnits="userSpaceOnUse" x1="1208" x2="1338"><stop offset="0" stop-color="#00ba02"/><stop offset="1" stop-color="#00bc00"/></linearGradient><linearGradient id="g7" gradientUnits="userSpaceOnUse" x1="1206" x2="1344"><stop offset="0" stop-color="#00ba03"/><stop offset="1" stop-color="#00be00"/></linearGradient><linearGradient id="g8" gradientUnits="userSpaceOnUse" x1="1204" x2="1351"><stop offset="0" stop-color="#00ba04"/><stop offset="1" stop-color="#00bf00"/></linearGradient><linearGradient id="g9" gradientUnits="userSpaceOnUse" x1="1202" x2="1357"><stop offset="0" stop-color="#00ba05"/><stop offset="1" stop-color="#00c100"/></linearGradient><linearGradient id="g10" gradientUnits="userSpaceOnUse" x1="1200" x2="1364"><stop offset="0" stop-color="#00bb06"/><stop offset="1" stop-color="#00c300"/></linearGradient><linearGradient id="g11" gradientUnits="userSpaceOnUse" x1="1198" x2="1370"><stop offset="0" stop-color="#00bb07"/><stop offset="0.343" stop-color="#00be00"/><stop offset="1" stop-color="#00c500"/></linearGradient><linearGradient id="g12" gradientUnits="userSpaceOnUse" x1="1196" x2="1376"><stop offset="0" stop-color="#00bc08"/><stop offset="0.367" stop-color="#00bf00"/><stop offset="1" stop-color="#00c700"/></linearGradient><linearGradient id="g13" gradientUnits="userSpaceOnUse" x1="1195" x2="1382"><stop offset="0" stop-color="#00bd08"/><stop offset="0.385" stop-color="#00c100"/><stop offset="1" stop-color="#00ca00"/></linearGradient><linearGradient id="g14" gradientUnits="userSpaceOnUse" x1="1193" x2="1387"><stop offset="0" stop-color="#00bd09"/><stop offset="0.412" stop-color="#00c200"/><stop offset="1" stop-color="#00cc00"/></linearGradient><linearGradient id="g15" gradientUnits="userSpaceOnUse" x1="1191" x2="1393"><stop offset="0" stop-color="#00be0a"/><stop offset="0.431" stop-color="#00c400"/><stop offset="1" stop-color="#00cf00"/></linearGradient><linearGradient id="g16" gradientUnits="userSpaceOnUse" x1="1190" x2="1398"><stop offset="0" stop-color="#00c00b"/><stop offset="0.447" stop-color="#00c700"/><stop offset="1" stop-color="#00d100"/></linearGradient><linearGradient id="g17" gradientUnits="userSpaceOnUse" x1="1189" x2="1404"><stop offset="0" stop-color="#00c10c"/><stop offset="0.46" stop-color="#00c900"/><stop offset="1" stop-color="#00d400"/></linearGradient><linearGradient id="g18" gradientUnits="userSpaceOnUse" x1="1187" x2="1409"><stop offset="0" stop-color="#00c20e"/><stop offset="0.482" stop-color="#00cb00"/><stop offset="1" stop-color="#00d700"/></linearGradient><linearGradient id="g19" gradientUnits="userSpaceOnUse" x1="1186" x2="1415"><stop offset="0" stop-color="#00c40f"/><stop offset="0.493" stop-color="#00ce00"/><stop offset="1" stop-color="#00da00"/></linearGradient><linearGradient id="g20" gradientUnits="userSpaceOnUse" x1="1186" x2="1420"><stop offset="0" stop-color="#00c510"/><stop offset="0.504" stop-color="#00d000"/><stop offset="1" stop-color="#00dd00"/></linearGradient><linearGradient id="g21" gradientUnits="userSpaceOnUse" x1="1185" x2="1425"><stop offset="0" stop-color="#00c711"/><stop offset="0.517" stop-color="#00d300"/><stop offset="1" stop-color="#00df00"/></linearGradient><linearGradient id="g22" gradientUnits="userSpaceOnUse" x1="1184" x2="1431"><stop offset="0" stop-color="#00c912"/><stop offset="0.526" stop-color="#00d600"/><stop offset="1" stop-color="#00e200"/></linearGradient><linearGradient id="g23" gradientUnits="userSpaceOnUse" x1="1183" x2="1436"><stop offset="0" stop-color="#00cb13"/><stop offset="0.542" stop-color="#00d900"/><stop offset="1" stop-color="#00e500"/></linearGradient><linearGradient id="g24" gradientUnits="userSpaceOnUse" x1="1183" x2="1441"><stop offset="0" stop-color="#00cd14"/><stop offset="0.55" stop-color="#00db00"/><stop offset="1" stop-color="#00e800"/></linearGradient><linearGradient id="g25" gradientUnits="userSpaceOnUse" x1="1182" x2="1446"><stop offset="0" stop-color="#00cf16"/><stop offset="0.561" stop-color="#00de00"/><stop offset="1" stop-color="#00ea00"/></linearGradient><linearGradient id="g26" gradientUnits="userSpaceOnUse" x1="1181" x2="1451"><stop offset="0" stop-color="#00d117"/><stop offset="0.57" stop-color="#00e100"/><stop offset="1" stop-color="#00ed00"/></linearGradient><linearGradient id="g27" gradientUnits="userSpaceOnUse" x1="1181" x2="1456"><stop offset="0" stop-color="#00d318"/><stop offset="0.578" stop-color="#00e400"/><stop offset="1" stop-color="#00ef00"/></linearGradient><linearGradient id="g28" gradientUnits="userSpaceOnUse" x1="1180" x2="1460"><stop offset="0" stop-color="#00d51a"/><stop offset="0.593" stop-color="#00e600"/><stop offset="1" stop-color="#00f200"/></linearGradient><linearGradient id="g29" gradientUnits="userSpaceOnUse" x1="1180" x2="1465"><stop offset="0" stop-color="#00d71b"/><stop offset="0.6" stop-color="#00e900"/><stop offset="1" stop-color="#03f400"/></linearGradient><linearGradient id="g30" gradientUnits="userSpaceOnUse" x1="1179" x2="1469"><stop offset="0" stop-color="#00d91d"/><stop offset="0.61" stop-color="#00ec00"/><stop offset="0.966" stop-color="#00f500"/><stop offset="1" stop-color="#08f600"/></linearGradient><linearGradient id="g31" gradientUnits="userSpaceOnUse" x1="1179" x2="1474"><stop offset="0" stop-color="#00db1e"/><stop offset="0.617" stop-color="#00ee00"/><stop offset="0.946" stop-color="#00f600"/><stop offset="1" stop-color="#0ef800"/></linearGradient><linearGradient id="g32" gradientUnits="userSpaceOnUse" x1="1179" x2="1478"><stop offset="0" stop-color="#00de20"/><stop offset="0.629" stop-color="#00f100"/><stop offset="0.93" stop-color="#00f800"/><stop offset="1" stop-color="#13f900"/></linearGradient><linearGradient id="g33" gradientUnits="userSpaceOnUse" x1="1179" x2="1482"><stop offset="0" stop-color="#00e021"/><stop offset="0.637" stop-color="#00f300"/><stop offset="0.914" stop-color="#00f900"/><stop offset="1" stop-color="#19fb00"/></linearGradient><linearGradient id="g34" gradientUnits="userSpaceOnUse" x1="1179" x2="1486"><stop offset="0" stop-color="#00e223"/><stop offset="0.645" stop-color="#00f500"/><stop offset="0.896" stop-color="#00fa00"/><stop offset="1" stop-color="#1ffc00"/></linearGradient><linearGradient id="g35" gradientUnits="userSpaceOnUse" x1="1179" x2="1490"><stop offset="0" stop-color="#00e425"/><stop offset="0.653" stop-color="#00f700"/><stop offset="0.881" stop-color="#00fb00"/><stop offset="1" stop-color="#26fd00"/></linearGradient><linearGradient id="g36" gradientUnits="userSpaceOnUse" x1="1179" x2="1494"><stop offset="0" stop-color="#00e626"/><stop offset="0.66" stop-color="#00f900"/><stop offset="0.867" stop-color="#00fc00"/><stop offset="1" stop-color="#2dfe00"/></linearGradient><linearGradient id="g37" gradientUnits="userSpaceOnUse" x1="1179" x2="1498"><stop offset="0" stop-color="#00e928"/><stop offset="0.671" stop-color="#00fa00"/><stop offset="0.853" stop-color="#00fd00"/><stop offset="1" stop-color="#34ff00"/></linearGradient><linearGradient id="g38" gradientUnits="userSpaceOnUse" x1="1179" x2="1503"><stop offset="0" stop-color="#00eb2a"/><stop offset="0.676" stop-color="#00fc00"/><stop offset="0.836" stop-color="#00fe00"/><stop offset="1" stop-color="#3dff00"/></linearGradient><linearGradient id="g39" gradientUnits="userSpaceOnUse" x1="1179" x2="1507"><stop offset="0" stop-color="#00ed2c"/><stop offset="0.683" stop-color="#00fd00"/><stop offset="0.823" stop-color="#00fe00"/><stop offset="1" stop-color="#45ff00"/></linearGradient><linearGradient id="g40" gradientUnits="userSpaceOnUse" x1="1179" x2="1511"><stop offset="0" stop-color="#00ef2d"/><stop offset="0.69" stop-color="#00fe00"/><stop offset="0.81" stop-color="#00ff00"/><stop offset="0.895" stop-color="#1eff00"/><stop offset="1" stop-color="#4dff00"/></linearGradient><linearGradient id="g41" gradientUnits="userSpaceOnUse" x1="1179" x2="1516"><stop offset="0" stop-color="#00f12f"/><stop offset="0.694" stop-color="#00ff00"/><stop offset="0.795" stop-color="#00ff00"/><stop offset="0.89" stop-color="#23ff00"/><stop offset="1" stop-color="#57ff00"/></linearGradient><linearGradient id="g42" gradientUnits="userSpaceOnUse" x1="1179" x2="1520"><stop offset="0" stop-color="#00f231"/><stop offset="0.701" stop-color="#00ff00"/><stop offset="0.78" stop-color="#00ff00"/><stop offset="0.877" stop-color="#24ff00"/><stop offset="1" stop-color="#60ff00"/></linearGradient><linearGradient id="g43" gradientUnits="userSpaceOnUse" x1="1179" x2="1524"><stop offset="0" stop-color="#00f433"/><stop offset="0.768" stop-color="#00ff00"/><stop offset="0.872" stop-color="#28ff00"/><stop offset="1" stop-color="#69ff00"/></linearGradient><linearGradient id="g44" gradientUnits="userSpaceOnUse" x1="1179" x2="1528"><stop offset="0" stop-color="#00f635"/><stop offset="0.756" stop-color="#00ff00"/><stop offset="0.868" stop-color="#2dff00"/><stop offset="1" stop-color="#73ff00"/></linearGradient><linearGradient id="g45" gradientUnits="userSpaceOnUse" x1="1180" x2="1533"><stop offset="0" stop-color="#00f737"/><stop offset="0.742" stop-color="#00ff00"/><stop offset="0.864" stop-color="#33ff00"/><stop offset="1" stop-color="#7eff00"/></linearGradient><linearGradient id="g46" gradientUnits="userSpaceOnUse" x1="1180" x2="1537"><stop offset="0" stop-color="#00f939"/><stop offset="0.731" stop-color="#00ff00"/><stop offset="0.857" stop-color="#37ff00"/><stop offset="1" stop-color="#89ff00"/></linearGradient><linearGradient id="g47" gradientUnits="userSpaceOnUse" x1="1180" x2="1541"><stop offset="0" stop-color="#00fa3b"/><stop offset="0.72" stop-color="#00ff01"/><stop offset="0.853" stop-color="#3cff00"/><stop offset="1" stop-color="#94ff00"/></linearGradient><linearGradient id="g48" gradientUnits="userSpaceOnUse" x1="1180" x2="1546"><stop offset="0" stop-color="#00fb3d"/><stop offset="0.705" stop-color="#00ff03"/><stop offset="0.844" stop-color="#40ff00"/><stop offset="1" stop-color="#a2ff00"/></linearGradient><linearGradient id="g49" gradientUnits="userSpaceOnUse" x1="1180" x2="1550"><stop offset="0" stop-color="#00fc3f"/><stop offset="0.695" stop-color="#00ff05"/><stop offset="0.757" stop-color="#19ff00"/><stop offset="0.841" stop-color="#45ff00"/><stop offset="1" stop-color="#aeff00"/></linearGradient><linearGradient id="g50" gradientUnits="userSpaceOnUse" x1="1180" x2="1554"><stop offset="0" stop-color="#00fd41"/><stop offset="0.684" stop-color="#00ff06"/><stop offset="0.751" stop-color="#1cff00"/><stop offset="0.837" stop-color="#4bff00"/><stop offset="1" stop-color="#bbff00"/></linearGradient><linearGradient id="g51" gradientUnits="userSpaceOnUse" x1="1181" x2="1558"><stop offset="0" stop-color="#00fe43"/><stop offset="0.674" stop-color="#00ff08"/><stop offset="0.756" stop-color="#25ff00"/><stop offset="0.833" stop-color="#51ff00"/><stop offset="0.918" stop-color="#89ff00"/><stop offset="1" stop-color="#c8ff00"/></linearGradient><linearGradient id="g52" gradientUnits="userSpaceOnUse" x1="1181" x2="1562"><stop offset="0" stop-color="#00fe46"/><stop offset="0.664" stop-color="#00ff0a"/><stop offset="0.751" stop-color="#29ff02"/><stop offset="0.829" stop-color="#57ff00"/><stop offset="0.916" stop-color="#93ff00"/><stop offset="1" stop-color="#d6ff00"/></linearGradient><linearGradient id="g53" gradientUnits="userSpaceOnUse" x1="1181" x2="1566"><stop offset="0" stop-color="#00ff48"/><stop offset="0.655" stop-color="#00ff0c"/><stop offset="0.745" stop-color="#2cff03"/><stop offset="0.826" stop-color="#5dff00"/><stop offset="0.914" stop-color="#9dff00"/><stop offset="1" stop-color="#e5ff00"/></linearGradient><linearGradient id="g54" gradientUnits="userSpaceOnUse" x1="1181" x2="1570"><stop offset="0" stop-color="#00ff4a"/><stop offset="0.645" stop-color="#00ff0f"/><stop offset="0.738" stop-color="#2fff06"/><stop offset="0.823" stop-color="#64ff00"/><stop offset="0.913" stop-color="#a7ff00"/><stop offset="1" stop-color="#f5ff00"/></linearGradient><linearGradient id="g55" gradientUnits="userSpaceOnUse" x1="1182" x2="1574"><stop offset="0" stop-color="#00ff4c"/><stop offset="0.633" stop-color="#00ff11"/><stop offset="0.727" stop-color="#30ff08"/><stop offset="0.811" stop-color="#65ff00"/><stop offset="0.903" stop-color="#acff00"/><stop offset="0.992" stop-color="#fdff00"/><stop offset="0.995" stop-color="#e6e600"/><stop offset="1" stop-color="#e6e000"/></linearGradient><linearGradient id="g56" gradientUnits="userSpaceOnUse" x1="1182" x2="1578"><stop offset="0" stop-color="#00ff4e"/><stop offset="0.624" stop-color="#00ff13"/><stop offset="0.72" stop-color="#32ff0a"/><stop offset="0.801" stop-color="#67ff00"/><stop offset="0.891" stop-color="#afff00"/><stop offset="0.977" stop-color="#feff00"/><stop offset="0.98" stop-color="#e8e600"/><stop offset="1" stop-color="#e6d300"/></linearGradient><linearGradient id="g57" gradientUnits="userSpaceOnUse" x1="1182" x2="1583"><stop offset="0" stop-color="#00ff50"/><stop offset="0.613" stop-color="#00ff16"/><stop offset="0.711" stop-color="#35ff0d"/><stop offset="0.788" stop-color="#68ff00"/><stop offset="0.875" stop-color="#afff00"/><stop offset="0.958" stop-color="#fdff00"/><stop offset="0.96" stop-color="#ebea00"/><stop offset="1" stop-color="#e6c400"/></linearGradient><linearGradient id="g58" gradientUnits="userSpaceOnUse" x1="1182" x2="1587"><stop offset="0" stop-color="#00ff52"/><stop offset="0.605" stop-color="#00ff18"/><stop offset="0.701" stop-color="#36ff0f"/><stop offset="0.778" stop-color="#6aff03"/><stop offset="0.862" stop-color="#afff00"/><stop offset="0.943" stop-color="#ffff00"/><stop offset="0.946" stop-color="#edeb00"/><stop offset="1" stop-color="#e6b900"/></linearGradient><linearGradient id="g59" gradientUnits="userSpaceOnUse" x1="1183" x2="1591"><stop offset="0" stop-color="#00ff54"/><stop offset="0.596" stop-color="#00ff1a"/><stop offset="0.694" stop-color="#38ff12"/><stop offset="0.765" stop-color="#6aff06"/><stop offset="0.848" stop-color="#b0ff00"/><stop offset="0.926" stop-color="#fdff00"/><stop offset="0.929" stop-color="#efee00"/><stop offset="0.931" stop-color="#efec00"/><stop offset="1" stop-color="#e7ae00"/></linearGradient><linearGradient id="g60" gradientUnits="userSpaceOnUse" x1="1183" x2="1594"><stop offset="0" stop-color="#00ff57"/><stop offset="0.589" stop-color="#00ff1d"/><stop offset="0.635" stop-color="#1dff1d"/><stop offset="0.689" stop-color="#3bff14"/><stop offset="0.757" stop-color="#6cff09"/><stop offset="0.837" stop-color="#b0ff00"/><stop offset="0.915" stop-color="#ffff00"/><stop offset="0.917" stop-color="#f1ef00"/><stop offset="0.929" stop-color="#f0e200"/><stop offset="1" stop-color="#e7a600"/></linearGradient><linearGradient id="g61" gradientUnits="userSpaceOnUse" x1="1183" x2="1598"><stop offset="0" stop-color="#00ff59"/><stop offset="0.578" stop-color="#00ff20"/><stop offset="0.629" stop-color="#1fff1f"/><stop offset="0.68" stop-color="#3cff17"/><stop offset="0.745" stop-color="#6bff0c"/><stop offset="0.81" stop-color="#a3ff00"/><stop offset="0.899" stop-color="#fdff00"/><stop offset="0.901" stop-color="#f4f300"/><stop offset="0.93" stop-color="#f0d400"/><stop offset="1" stop-color="#e89c00"/></linearGradient><linearGradient id="g62" gradientUnits="userSpaceOnUse" x1="1184" x2="1602"><stop offset="0" stop-color="#00ff5b"/><stop offset="0.569" stop-color="#00ff23"/><stop offset="0.622" stop-color="#22ff22"/><stop offset="0.67" stop-color="#3dff1a"/><stop offset="0.732" stop-color="#6bff0f"/><stop offset="0.813" stop-color="#b3ff00"/><stop offset="0.885" stop-color="#ffff00"/><stop offset="0.888" stop-color="#f6f400"/><stop offset="0.923" stop-color="#f1cd00"/><stop offset="1" stop-color="#e89300"/></linearGradient><linearGradient id="g63" gradientUnits="userSpaceOnUse" x1="1184" x2="1606"><stop offset="0" stop-color="#00ff5e"/><stop offset="0.299" stop-color="#00ff44"/><stop offset="0.562" stop-color="#00ff25"/><stop offset="0.616" stop-color="#24ff24"/><stop offset="0.664" stop-color="#40ff1d"/><stop offset="0.723" stop-color="#6dff13"/><stop offset="0.818" stop-color="#c5ff00"/><stop offset="0.87" stop-color="#fdff00"/><stop offset="0.882" stop-color="#f7ec00"/><stop offset="0.922" stop-color="#f2c300"/><stop offset="1" stop-color="#e88b00"/></linearGradient><linearGradient id="g64" gradientUnits="userSpaceOnUse" x1="1185" x2="1610"><stop offset="0" stop-color="#00ff60"/><stop offset="0.294" stop-color="#00ff46"/><stop offset="0.553" stop-color="#00ff28"/><stop offset="0.612" stop-color="#28ff27"/><stop offset="0.656" stop-color="#43ff20"/><stop offset="0.713" stop-color="#6fff16"/><stop offset="0.786" stop-color="#b2ff08"/><stop offset="0.856" stop-color="#ffff00"/><stop offset="0.875" stop-color="#f8e400"/><stop offset="0.915" stop-color="#f3bd00"/><stop offset="1" stop-color="#e98300"/></linearGradient><linearGradient id="g65" gradientUnits="userSpaceOnUse" x1="1185" x2="1614"><stop offset="0" stop-color="#00ff62"/><stop offset="0.291" stop-color="#00ff49"/><stop offset="0.545" stop-color="#00ff2b"/><stop offset="0.606" stop-color="#2aff2a"/><stop offset="0.702" stop-color="#6fff19"/><stop offset="0.772" stop-color="#b0ff0c"/><stop offset="0.841" stop-color="#fdff00"/><stop offset="0.874" stop-color="#f9d800"/><stop offset="0.911" stop-color="#f4b500"/><stop offset="1" stop-color="#e97b00"/></linearGradient><linearGradient id="g66" gradientUnits="userSpaceOnUse" x1="1186" x2="1618"><stop offset="0" stop-color="#00ff65"/><stop offset="0.287" stop-color="#00ff4c"/><stop offset="0.537" stop-color="#00ff2e"/><stop offset="0.6" stop-color="#2dff2c"/><stop offset="0.692" stop-color="#70ff1d"/><stop offset="0.762" stop-color="#b3ff0f"/><stop offset="0.829" stop-color="#ffff00"/><stop offset="0.866" stop-color="#fad400"/><stop offset="0.905" stop-color="#f6b000"/><stop offset="1" stop-color="#ea7400"/></linearGradient><linearGradient id="g67" gradientUnits="userSpaceOnUse" x1="1186" x2="1622"><stop offset="0" stop-color="#00ff68"/><stop offset="0.282" stop-color="#00ff4f"/><stop offset="0.53" stop-color="#00ff31"/><stop offset="0.594" stop-color="#30ff2f"/><stop offset="0.681" stop-color="#70ff20"/><stop offset="0.745" stop-color="#afff14"/><stop offset="0.817" stop-color="#fffe04"/><stop offset="0.86" stop-color="#fccd00"/><stop offset="0.899" stop-color="#f7aa00"/><stop offset="0.947" stop-color="#f18900"/><stop offset="1" stop-color="#ea6e00"/></linearGradient><linearGradient id="g68" gradientUnits="userSpaceOnUse" x1="1187" x2="1626"><stop offset="0" stop-color="#00ff6a"/><stop offset="0.519" stop-color="#00ff35"/><stop offset="0.588" stop-color="#32ff32"/><stop offset="0.672" stop-color="#72ff24"/><stop offset="0.738" stop-color="#b4ff17"/><stop offset="0.802" stop-color="#ffff09"/><stop offset="0.838" stop-color="#ffd700"/><stop offset="0.893" stop-color="#f8a500"/><stop offset="0.943" stop-color="#f28400"/><stop offset="1" stop-color="#ea6700"/></linearGradient><linearGradient id="g69" gradientUnits="userSpaceOnUse" x1="1187" x2="1630"><stop offset="0" stop-color="#00ff6d"/><stop offset="0.275" stop-color="#00ff54"/><stop offset="0.512" stop-color="#00ff38"/><stop offset="0.585" stop-color="#36ff35"/><stop offset="0.661" stop-color="#72ff28"/><stop offset="0.725" stop-color="#b2ff1b"/><stop offset="0.788" stop-color="#fdff0e"/><stop offset="0.842" stop-color="#ffc600"/><stop offset="0.887" stop-color="#f9a000"/><stop offset="0.939" stop-color="#f37e00"/><stop offset="1" stop-color="#eb6100"/></linearGradient><linearGradient id="g70" gradientUnits="userSpaceOnUse" x1="1188" x2="1634"><stop offset="0" stop-color="#00ff70"/><stop offset="0.504" stop-color="#00ff3b"/><stop offset="0.578" stop-color="#39ff38"/><stop offset="0.652" stop-color="#74ff2c"/><stop offset="0.715" stop-color="#b5ff1f"/><stop offset="0.776" stop-color="#ffff12"/><stop offset="0.818" stop-color="#ffcf06"/><stop offset="0.879" stop-color="#fb9c00"/><stop offset="0.935" stop-color="#f37900"/><stop offset="1" stop-color="#eb5c00"/></linearGradient><linearGradient id="g71" gradientUnits="userSpaceOnUse" x1="1189" x2="1638"><stop offset="0" stop-color="#00ff72"/><stop offset="0.497" stop-color="#00ff3f"/><stop offset="0.572" stop-color="#3cff3c"/><stop offset="0.644" stop-color="#76ff2f"/><stop offset="0.704" stop-color="#b6ff23"/><stop offset="0.762" stop-color="#fdff17"/><stop offset="0.813" stop-color="#ffc708"/><stop offset="0.873" stop-color="#fc9700"/><stop offset="0.931" stop-color="#f47400"/><stop offset="1" stop-color="#eb5600"/></linearGradient><linearGradient id="g72" gradientUnits="userSpaceOnUse" x1="1189" x2="1642"><stop offset="0" stop-color="#00ff75"/><stop offset="0.49" stop-color="#00ff42"/><stop offset="0.567" stop-color="#3fff3f"/><stop offset="0.634" stop-color="#76ff34"/><stop offset="0.693" stop-color="#b6ff28"/><stop offset="0.751" stop-color="#ffff1b"/><stop offset="0.801" stop-color="#ffc60c"/><stop offset="0.865" stop-color="#fe9400"/><stop offset="0.925" stop-color="#f67000"/><stop offset="1" stop-color="#ea5000"/></linearGradient><linearGradient id="g73" gradientUnits="userSpaceOnUse" x1="1190" x2="1646"><stop offset="0" stop-color="#00ff78"/><stop offset="0.482" stop-color="#00ff46"/><stop offset="0.561" stop-color="#43ff43"/><stop offset="0.625" stop-color="#78ff37"/><stop offset="0.682" stop-color="#b7ff2c"/><stop offset="0.737" stop-color="#fdff20"/><stop offset="0.785" stop-color="#ffc810"/><stop offset="0.84" stop-color="#ff9c03"/><stop offset="0.912" stop-color="#f87000"/><stop offset="1" stop-color="#e84b00"/></linearGradient><linearGradient id="g74" gradientUnits="userSpaceOnUse" x1="1190" x2="1650"><stop offset="0" stop-color="#00ff7b"/><stop offset="0.476" stop-color="#01ff4a"/><stop offset="0.559" stop-color="#47ff46"/><stop offset="0.617" stop-color="#7aff3c"/><stop offset="0.672" stop-color="#b7ff31"/><stop offset="0.726" stop-color="#ffff25"/><stop offset="0.774" stop-color="#ffc714"/><stop offset="0.83" stop-color="#ff9906"/><stop offset="0.907" stop-color="#f96c00"/><stop offset="1" stop-color="#e54500"/></linearGradient><linearGradient id="g75" gradientUnits="userSpaceOnUse" x1="1191" x2="1654"><stop offset="0" stop-color="#00ff7e"/><stop offset="0.467" stop-color="#00ff4e"/><stop offset="0.553" stop-color="#4bff4a"/><stop offset="0.607" stop-color="#7bff40"/><stop offset="0.661" stop-color="#b8ff36"/><stop offset="0.713" stop-color="#fdff2a"/><stop offset="0.765" stop-color="#ffc317"/><stop offset="0.823" stop-color="#ff9408"/><stop offset="0.866" stop-color="#ff7b00"/><stop offset="0.927" stop-color="#f75d00"/><stop offset="1" stop-color="#e24000"/></linearGradient><linearGradient id="g76" gradientUnits="userSpaceOnUse" x1="1191" x2="1658"><stop offset="0" stop-color="#00ff81"/><stop offset="0.46" stop-color="#00ff52"/><stop offset="0.6" stop-color="#7dff44"/><stop offset="0.651" stop-color="#b9ff3a"/><stop offset="0.702" stop-color="#ffff2f"/><stop offset="0.752" stop-color="#ffc31c"/><stop offset="0.814" stop-color="#ff910b"/><stop offset="0.869" stop-color="#ff7200"/><stop offset="0.912" stop-color="#f95d00"/><stop offset="1" stop-color="#de3b00"/></linearGradient><linearGradient id="g77" gradientUnits="userSpaceOnUse" x1="1192" x2="1662"><stop offset="0" stop-color="#00ff85"/><stop offset="0.453" stop-color="#00ff56"/><stop offset="0.589" stop-color="#7dff49"/><stop offset="0.638" stop-color="#b6ff40"/><stop offset="0.689" stop-color="#fdff35"/><stop offset="0.743" stop-color="#ffc01f"/><stop offset="0.804" stop-color="#ff8e0d"/><stop offset="0.898" stop-color="#fb5d00"/><stop offset="1" stop-color="#da3600"/></linearGradient><linearGradient id="g78" gradientUnits="userSpaceOnUse" x1="1193" x2="1667"><stop offset="0" stop-color="#00ff88"/><stop offset="0.445" stop-color="#00ff5a"/><stop offset="0.58" stop-color="#7fff4e"/><stop offset="0.629" stop-color="#baff44"/><stop offset="0.677" stop-color="#ffff3a"/><stop offset="0.73" stop-color="#ffbe23"/><stop offset="0.795" stop-color="#ff8a0f"/><stop offset="0.882" stop-color="#fe5e00"/><stop offset="1" stop-color="#d63100"/></linearGradient><linearGradient id="g79" gradientUnits="userSpaceOnUse" x1="1193" x2="1671"><stop offset="0" stop-color="#00ff8b"/><stop offset="0.439" stop-color="#00ff5f"/><stop offset="0.573" stop-color="#82ff52"/><stop offset="0.619" stop-color="#bbff4a"/><stop offset="0.665" stop-color="#fdff40"/><stop offset="0.722" stop-color="#ffba26"/><stop offset="0.789" stop-color="#ff8611"/><stop offset="0.879" stop-color="#fd5900"/><stop offset="1" stop-color="#d22d00"/></linearGradient><linearGradient id="g80" gradientUnits="userSpaceOnUse" x1="1194" x2="1675"><stop offset="0" stop-color="#00ff8f"/><stop offset="0.432" stop-color="#01ff63"/><stop offset="0.565" stop-color="#84ff57"/><stop offset="0.609" stop-color="#bbff4f"/><stop offset="0.655" stop-color="#ffff45"/><stop offset="0.709" stop-color="#ffbb2a"/><stop offset="0.78" stop-color="#ff8314"/><stop offset="0.879" stop-color="#fb5200"/><stop offset="1" stop-color="#ce2900"/></linearGradient><linearGradient id="g81" gradientUnits="userSpaceOnUse" x1="1195" x2="1679"><stop offset="0" stop-color="#00ff92"/><stop offset="0.424" stop-color="#00ff68"/><stop offset="0.556" stop-color="#84ff5d"/><stop offset="0.599" stop-color="#bcff54"/><stop offset="0.643" stop-color="#feff4b"/><stop offset="0.7" stop-color="#ffb72e"/><stop offset="0.771" stop-color="#ff8016"/><stop offset="0.837" stop-color="#ff5e08"/><stop offset="0.878" stop-color="#f84c01"/><stop offset="1" stop-color="#ca2500"/></linearGradient><linearGradient id="g82" gradientUnits="userSpaceOnUse" x1="1196" x2="1684"><stop offset="0" stop-color="#00ff96"/><stop offset="0.416" stop-color="#00ff6d"/><stop offset="0.547" stop-color="#87ff62"/><stop offset="0.588" stop-color="#bdff5a"/><stop offset="0.631" stop-color="#ffff51"/><stop offset="0.658" stop-color="#ffd841"/><stop offset="0.689" stop-color="#ffb532"/><stop offset="0.762" stop-color="#ff7c18"/><stop offset="0.822" stop-color="#ff5e0b"/><stop offset="0.863" stop-color="#f74c03"/><stop offset="1" stop-color="#c62100"/></linearGradient><linearGradient id="g83" gradientUnits="userSpaceOnUse" x1="1196" x2="1688"><stop offset="0" stop-color="#00ff9a"/><stop offset="0.411" stop-color="#00ff72"/><stop offset="0.541" stop-color="#8aff67"/><stop offset="0.579" stop-color="#beff60"/><stop offset="0.62" stop-color="#feff58"/><stop offset="0.65" stop-color="#ffd344"/><stop offset="0.679" stop-color="#ffb336"/><stop offset="0.754" stop-color="#ff791b"/><stop offset="0.848" stop-color="#f74c06"/><stop offset="0.925" stop-color="#de3000"/><stop offset="1" stop-color="#c31e00"/></linearGradient><linearGradient id="g84" gradientUnits="userSpaceOnUse" x1="1197" x2="1692"><stop offset="0" stop-color="#00ff9d"/><stop offset="0.404" stop-color="#00ff77"/><stop offset="0.533" stop-color="#8dff6c"/><stop offset="0.57" stop-color="#beff66"/><stop offset="0.61" stop-color="#ffff5e"/><stop offset="0.638" stop-color="#ffd44a"/><stop offset="0.669" stop-color="#ffb13a"/><stop offset="0.745" stop-color="#ff761d"/><stop offset="0.832" stop-color="#f84c09"/><stop offset="0.893" stop-color="#e63500"/><stop offset="1" stop-color="#bf1b00"/></linearGradient><linearGradient id="g85" gradientUnits="userSpaceOnUse" x1="1198" x2="1696"><stop offset="0" stop-color="#00ffa1"/><stop offset="0.398" stop-color="#00ff7c"/><stop offset="0.526" stop-color="#90ff72"/><stop offset="0.6" stop-color="#fffd63"/><stop offset="0.629" stop-color="#ffd24f"/><stop offset="0.661" stop-color="#ffae3d"/><stop offset="0.697" stop-color="#ff8e2d"/><stop offset="0.739" stop-color="#ff731f"/><stop offset="0.793" stop-color="#fd5711"/><stop offset="0.865" stop-color="#ea3904"/><stop offset="1" stop-color="#bc1800"/></linearGradient><linearGradient id="g86" gradientUnits="userSpaceOnUse" x1="1199" x2="1701"><stop offset="0" stop-color="#00ffa5"/><stop offset="0.39" stop-color="#00ff82"/><stop offset="0.518" stop-color="#93ff78"/><stop offset="0.552" stop-color="#c3ff72"/><stop offset="0.588" stop-color="#ffff6b"/><stop offset="0.616" stop-color="#ffd355"/><stop offset="0.647" stop-color="#ffae42"/><stop offset="0.685" stop-color="#ff8d31"/><stop offset="0.729" stop-color="#ff7022"/><stop offset="0.781" stop-color="#fc5614"/><stop offset="0.857" stop-color="#e73605"/><stop offset="1" stop-color="#b91500"/></linearGradient><linearGradient id="g87" gradientUnits="userSpaceOnUse" x1="1200" x2="1705"><stop offset="0" stop-color="#00ffa9"/><stop offset="0.384" stop-color="#01ff87"/><stop offset="0.511" stop-color="#96ff7e"/><stop offset="0.578" stop-color="#fffd71"/><stop offset="0.606" stop-color="#ffd15a"/><stop offset="0.64" stop-color="#ffaa45"/><stop offset="0.677" stop-color="#ff8934"/><stop offset="0.723" stop-color="#ff6c24"/><stop offset="0.77" stop-color="#fb5417"/><stop offset="0.851" stop-color="#e43306"/><stop offset="0.899" stop-color="#d72600"/><stop offset="1" stop-color="#b61300"/></linearGradient><linearGradient id="g88" gradientUnits="userSpaceOnUse" x1="1201" x2="1710"><stop offset="0" stop-color="#00ffae"/><stop offset="0.375" stop-color="#00ff8d"/><stop offset="0.428" stop-color="#3bff88"/><stop offset="0.503" stop-color="#99ff84"/><stop offset="0.566" stop-color="#ffff79"/><stop offset="0.595" stop-color="#ffcf5f"/><stop offset="0.629" stop-color="#ffa84a"/><stop offset="0.668" stop-color="#ff8637"/><stop offset="0.713" stop-color="#ff6a26"/><stop offset="0.758" stop-color="#fb5219"/><stop offset="0.843" stop-color="#e13108"/><stop offset="0.902" stop-color="#d12100"/><stop offset="1" stop-color="#b41100"/></linearGradient><linearGradient id="g89" gradientUnits="userSpaceOnUse" x1="1201" x2="1714"><stop offset="0" stop-color="#00ffb2"/><stop offset="0.37" stop-color="#00ff93"/><stop offset="0.425" stop-color="#3eff8e"/><stop offset="0.497" stop-color="#9cff8a"/><stop offset="0.558" stop-color="#fffd7f"/><stop offset="0.587" stop-color="#ffcd64"/><stop offset="0.62" stop-color="#ffa64e"/><stop offset="0.661" stop-color="#ff8339"/><stop offset="0.708" stop-color="#ff6628"/><stop offset="0.749" stop-color="#fa511c"/><stop offset="0.838" stop-color="#de2d08"/><stop offset="0.904" stop-color="#cd1d00"/><stop offset="1" stop-color="#b10f00"/></linearGradient><linearGradient id="g90" gradientUnits="userSpaceOnUse" x1="1202" x2="1719"><stop offset="0" stop-color="#00ffb7"/><stop offset="0.364" stop-color="#00ff99"/><stop offset="0.422" stop-color="#45ff94"/><stop offset="0.491" stop-color="#a3ff90"/><stop offset="0.545" stop-color="#fffe87"/><stop offset="0.576" stop-color="#ffcc6a"/><stop offset="0.615" stop-color="#ff9f4f"/><stop offset="0.66" stop-color="#ff7b39"/><stop offset="0.716" stop-color="#fd5a25"/><stop offset="0.776" stop-color="#ed3e14"/><stop offset="0.838" stop-color="#d92908"/><stop offset="0.905" stop-color="#c81a00"/><stop offset="1" stop-color="#af0d00"/></linearGradient><linearGradient id="g91" gradientUnits="userSpaceOnUse" x1="1203" x2="1723"><stop offset="0" stop-color="#00ffbb"/><stop offset="0.358" stop-color="#00ffa0"/><stop offset="0.417" stop-color="#49ff9a"/><stop offset="0.485" stop-color="#a6ff97"/><stop offset="0.537" stop-color="#fffc8e"/><stop offset="0.569" stop-color="#ffc76d"/><stop offset="0.608" stop-color="#ff9b52"/><stop offset="0.654" stop-color="#ff763b"/><stop offset="0.715" stop-color="#fb5324"/><stop offset="0.773" stop-color="#e93914"/><stop offset="0.837" stop-color="#d52509"/><stop offset="0.908" stop-color="#c41700"/><stop offset="1" stop-color="#ae0b00"/></linearGradient><linearGradient id="g92" gradientUnits="userSpaceOnUse" x1="1204" x2="1727"><stop offset="0" stop-color="#00ffc0"/><stop offset="0.352" stop-color="#00ffa6"/><stop offset="0.444" stop-color="#78ff9e"/><stop offset="0.489" stop-color="#bcff9d"/><stop offset="0.526" stop-color="#fffe97"/><stop offset="0.558" stop-color="#ffc875"/><stop offset="0.598" stop-color="#ff9956"/><stop offset="0.644" stop-color="#ff753e"/><stop offset="0.709" stop-color="#f95026"/><stop offset="0.769" stop-color="#e53515"/><stop offset="0.832" stop-color="#d22309"/><stop offset="0.91" stop-color="#c11400"/><stop offset="1" stop-color="#ac0900"/></linearGradient><linearGradient id="g93" gradientUnits="userSpaceOnUse" x1="1205" x2="1731"><stop offset="0" stop-color="#00ffc5"/><stop offset="0.346" stop-color="#01ffad"/><stop offset="0.433" stop-color="#75ffa6"/><stop offset="0.481" stop-color="#bdffa4"/><stop offset="0.517" stop-color="#fffc9e"/><stop offset="0.551" stop-color="#ffc378"/><stop offset="0.591" stop-color="#ff965a"/><stop offset="0.637" stop-color="#ff7241"/><stop offset="0.705" stop-color="#f64b26"/><stop offset="0.762" stop-color="#e23316"/><stop offset="0.827" stop-color="#cf200a"/><stop offset="0.914" stop-color="#bd1100"/><stop offset="1" stop-color="#ab0800"/></linearGradient><linearGradient id="g94" gradientUnits="userSpaceOnUse" x1="1206" x2="1736"><stop offset="0" stop-color="#00ffca"/><stop offset="0.338" stop-color="#00ffb4"/><stop offset="0.379" stop-color="#33ffb1"/><stop offset="0.425" stop-color="#74ffad"/><stop offset="0.474" stop-color="#c2ffac"/><stop offset="0.506" stop-color="#fffea8"/><stop offset="0.538" stop-color="#ffc682"/><stop offset="0.579" stop-color="#ff965f"/><stop offset="0.653" stop-color="#ff6039"/><stop offset="0.696" stop-color="#f44928"/><stop offset="0.755" stop-color="#df3017"/><stop offset="0.821" stop-color="#cc1e0b"/><stop offset="0.915" stop-color="#bb0e00"/><stop offset="1" stop-color="#aa0600"/></linearGradient><linearGradient id="g95" gradientUnits="userSpaceOnUse" x1="1207" x2="1740"><stop offset="0" stop-color="#00ffcf"/><stop offset="0.332" stop-color="#00ffbc"/><stop offset="0.415" stop-color="#71ffb5"/><stop offset="0.467" stop-color="#c6ffb4"/><stop offset="0.497" stop-color="#fffcaf"/><stop offset="0.531" stop-color="#ffc285"/><stop offset="0.572" stop-color="#ff9263"/><stop offset="0.642" stop-color="#fe603d"/><stop offset="0.69" stop-color="#f14529"/><stop offset="0.749" stop-color="#dc2d18"/><stop offset="0.816" stop-color="#c91c0b"/><stop offset="0.917" stop-color="#b80c00"/><stop offset="1" stop-color="#a90500"/></linearGradient><linearGradient id="g96" gradientUnits="userSpaceOnUse" x1="1208" x2="1744"><stop offset="0" stop-color="#00ffd4"/><stop offset="0.326" stop-color="#00ffc3"/><stop offset="0.41" stop-color="#76ffbd"/><stop offset="0.461" stop-color="#cbffbd"/><stop offset="0.487" stop-color="#fffeb9"/><stop offset="0.521" stop-color="#ffc28d"/><stop offset="0.562" stop-color="#ff9268"/><stop offset="0.631" stop-color="#fe6041"/><stop offset="0.681" stop-color="#f0432b"/><stop offset="0.739" stop-color="#db2c1a"/><stop offset="0.808" stop-color="#c71a0d"/><stop offset="0.92" stop-color="#b60a00"/><stop offset="1" stop-color="#a90400"/></linearGradient><linearGradient id="g97" gradientUnits="userSpaceOnUse" x1="1209" x2="1748"><stop offset="0" stop-color="#00ffda"/><stop offset="0.321" stop-color="#00ffcb"/><stop offset="0.401" stop-color="#73ffc6"/><stop offset="0.479" stop-color="#fffcc1"/><stop offset="0.512" stop-color="#ffc093"/><stop offset="0.553" stop-color="#ff916d"/><stop offset="0.62" stop-color="#fe5f45"/><stop offset="0.673" stop-color="#ee412d"/><stop offset="0.733" stop-color="#d82a1b"/><stop offset="0.803" stop-color="#c5180d"/><stop offset="0.922" stop-color="#b40800"/><stop offset="1" stop-color="#a80300"/></linearGradient><linearGradient id="g98" gradientUnits="userSpaceOnUse" x1="1209" x2="1752"><stop offset="0" stop-color="#00ffe0"/><stop offset="0.317" stop-color="#00ffd3"/><stop offset="0.396" stop-color="#75ffcf"/><stop offset="0.451" stop-color="#d8ffce"/><stop offset="0.47" stop-color="#fffecc"/><stop offset="0.503" stop-color="#ffc19b"/><stop offset="0.543" stop-color="#ff9173"/><stop offset="0.61" stop-color="#fe5f49"/><stop offset="0.665" stop-color="#ec402f"/><stop offset="0.724" stop-color="#d6291d"/><stop offset="0.796" stop-color="#c3170e"/><stop offset="0.924" stop-color="#b30600"/><stop offset="1" stop-color="#a80100"/></linearGradient><linearGradient id="g99" gradientUnits="userSpaceOnUse" x1="1210" x2="1756"><stop offset="0" stop-color="#00ffe6"/><stop offset="0.311" stop-color="#00ffdc"/><stop offset="0.386" stop-color="#72ffd8"/><stop offset="0.462" stop-color="#fffcd4"/><stop offset="0.495" stop-color="#ffbfa2"/><stop offset="0.535" stop-color="#ff8f78"/><stop offset="0.599" stop-color="#fe5e4e"/><stop offset="0.658" stop-color="#ea3d31"/><stop offset="0.718" stop-color="#d3261d"/><stop offset="0.791" stop-color="#c1160f"/><stop offset="0.929" stop-color="#b20500"/><stop offset="1" stop-color="#a80000"/></linearGradient><linearGradient id="g100" gradientUnits="userSpaceOnUse" x1="1211" x2="1760"><stop offset="0" stop-color="#00ffec"/><stop offset="0.306" stop-color="#01ffe4"/><stop offset="0.383" stop-color="#78ffe1"/><stop offset="0.452" stop-color="#fffee0"/><stop offset="0.485" stop-color="#ffc0aa"/><stop offset="0.525" stop-color="#ff8f7f"/><stop offset="0.587" stop-color="#fe5f53"/><stop offset="0.65" stop-color="#e73b32"/><stop offset="0.712" stop-color="#d1241e"/><stop offset="0.787" stop-color="#be140f"/><stop offset="0.931" stop-color="#b10300"/><stop offset="1" stop-color="#a70000"/></linearGradient><linearGradient id="g101" gradientUnits="userSpaceOnUse" x1="1212" x2="1764"><stop offset="0" stop-color="#00fff2"/><stop offset="0.299" stop-color="#00ffed"/><stop offset="0.371" stop-color="#71ffec"/><stop offset="0.444" stop-color="#fffce8"/><stop offset="0.476" stop-color="#ffbeb1"/><stop offset="0.518" stop-color="#ff8c82"/><stop offset="0.576" stop-color="#fd5f58"/><stop offset="0.643" stop-color="#e53934"/><stop offset="0.707" stop-color="#ce231f"/><stop offset="0.784" stop-color="#bc1210"/><stop offset="0.933" stop-color="#b00200"/><stop offset="1" stop-color="#a70000"/></linearGradient><linearGradient id="g102" gradientUnits="userSpaceOnUse" x1="1213" x2="1768"><stop offset="0" stop-color="#00fff9"/><stop offset="0.294" stop-color="#00fff7"/><stop offset="0.366" stop-color="#73fff6"/><stop offset="0.434" stop-color="#fffef5"/><stop offset="0.467" stop-color="#ffc0ba"/><stop offset="0.508" stop-color="#ff8d89"/><stop offset="0.566" stop-color="#fd5f5d"/><stop offset="0.634" stop-color="#e33836"/><stop offset="0.697" stop-color="#cc2220"/><stop offset="0.778" stop-color="#ba1110"/><stop offset="0.935" stop-color="#b00100"/><stop offset="1" stop-color="#a50000"/></linearGradient><linearGradient id="g103" gradientUnits="userSpaceOnUse" x1="1214" x2="1772"><stop offset="0" stop-color="#00ffff"/><stop offset="0.289" stop-color="#00fdff"/><stop offset="0.36" stop-color="#75fdff"/><stop offset="0.427" stop-color="#fffcfe"/><stop offset="0.459" stop-color="#ffbfc0"/><stop offset="0.5" stop-color="#ff8c8d"/><stop offset="0.557" stop-color="#fd5f60"/><stop offset="0.627" stop-color="#e23637"/><stop offset="0.701" stop-color="#c81e1f"/><stop offset="0.778" stop-color="#b90f10"/><stop offset="0.937" stop-color="#af0000"/><stop offset="1" stop-color="#a40000"/></linearGradient><linearGradient id="g104" gradientUnits="userSpaceOnUse" x1="1215" x2="1776"><stop offset="0" stop-color="#00f8ff"/><stop offset="0.283" stop-color="#00f4ff"/><stop offset="0.357" stop-color="#77f2ff"/><stop offset="0.39" stop-color="#b9f1ff"/><stop offset="0.422" stop-color="#fff1ff"/><stop offset="0.455" stop-color="#ffb7c1"/><stop offset="0.496" stop-color="#ff868e"/><stop offset="0.554" stop-color="#fd5a5f"/><stop offset="0.624" stop-color="#e33337"/><stop offset="0.69" stop-color="#cb1e20"/><stop offset="0.774" stop-color="#ba0e10"/><stop offset="0.909" stop-color="#b00002"/><stop offset="1" stop-color="#a30000"/></linearGradient><linearGradient id="g105" gradientUnits="userSpaceOnUse" x1="1216" x2="1780"><stop offset="0" stop-color="#00f1ff"/><stop offset="0.278" stop-color="#00eaff"/><stop offset="0.349" stop-color="#72e8ff"/><stop offset="0.42" stop-color="#ffe3fc"/><stop offset="0.452" stop-color="#ffadbe"/><stop offset="0.495" stop-color="#ff7e8b"/><stop offset="0.553" stop-color="#fd545d"/><stop offset="0.622" stop-color="#e32f36"/><stop offset="0.697" stop-color="#c9191e"/><stop offset="0.775" stop-color="#ba0c0f"/><stop offset="0.888" stop-color="#b10003"/><stop offset="1" stop-color="#a10000"/></linearGradient><linearGradient id="g106" gradientUnits="userSpaceOnUse" x1="1217" x2="1784"><stop offset="0" stop-color="#00ebff"/><stop offset="0.273" stop-color="#01e1ff"/><stop offset="0.346" stop-color="#73deff"/><stop offset="0.416" stop-color="#ffdafc"/><stop offset="0.448" stop-color="#ffa6bf"/><stop offset="0.49" stop-color="#ff788c"/><stop offset="0.55" stop-color="#fd4f5d"/><stop offset="0.621" stop-color="#e32c36"/><stop offset="0.695" stop-color="#ca171e"/><stop offset="0.774" stop-color="#ba0a0f"/><stop offset="0.869" stop-color="#b10004"/><stop offset="1" stop-color="#a00000"/></linearGradient><linearGradient id="g107" gradientUnits="userSpaceOnUse" x1="1218" x2="1788"><stop offset="0" stop-color="#00e4ff"/><stop offset="0.268" stop-color="#01d9ff"/><stop offset="0.342" stop-color="#75d4ff"/><stop offset="0.412" stop-color="#ffd1fd"/><stop offset="0.446" stop-color="#ff9dbe"/><stop offset="0.488" stop-color="#ff718b"/><stop offset="0.547" stop-color="#fd4a5d"/><stop offset="0.618" stop-color="#e42936"/><stop offset="0.686" stop-color="#cc161f"/><stop offset="0.772" stop-color="#ba080f"/><stop offset="0.849" stop-color="#b30006"/><stop offset="1" stop-color="#9e0000"/></linearGradient><linearGradient id="g108" gradientUnits="userSpaceOnUse" x1="1220" x2="1792"><stop offset="0" stop-color="#00deff"/><stop offset="0.26" stop-color="#00d0ff"/><stop offset="0.336" stop-color="#73cbff"/><stop offset="0.388" stop-color="#d5caff"/><stop offset="0.407" stop-color="#ffc7fe"/><stop offset="0.441" stop-color="#ff96bf"/><stop offset="0.483" stop-color="#ff6c8c"/><stop offset="0.545" stop-color="#fd455c"/><stop offset="0.614" stop-color="#e42636"/><stop offset="0.684" stop-color="#cc131f"/><stop offset="0.771" stop-color="#ba060f"/><stop offset="0.83" stop-color="#b40008"/><stop offset="1" stop-color="#9c0000"/></linearGradient><linearGradient id="g109" gradientUnits="userSpaceOnUse" x1="1221" x2="1796"><stop offset="0" stop-color="#00d7ff"/><stop offset="0.256" stop-color="#00c8ff"/><stop offset="0.334" stop-color="#78c2ff"/><stop offset="0.383" stop-color="#d1c1ff"/><stop offset="0.403" stop-color="#ffbfff"/><stop offset="0.437" stop-color="#ff8fc0"/><stop offset="0.48" stop-color="#ff668b"/><stop offset="0.543" stop-color="#fd405c"/><stop offset="0.612" stop-color="#e42236"/><stop offset="0.682" stop-color="#cd111f"/><stop offset="0.77" stop-color="#ba040f"/><stop offset="1" stop-color="#9b0000"/></linearGradient><linearGradient id="g110" gradientUnits="userSpaceOnUse" x1="1222" x2="1800"><stop offset="0" stop-color="#00d1ff"/><stop offset="0.251" stop-color="#00c0ff"/><stop offset="0.327" stop-color="#73baff"/><stop offset="0.374" stop-color="#c6b9ff"/><stop offset="0.401" stop-color="#ffb3fc"/><stop offset="0.436" stop-color="#ff85bc"/><stop offset="0.479" stop-color="#ff5e89"/><stop offset="0.542" stop-color="#fd3b5b"/><stop offset="0.611" stop-color="#e51f36"/><stop offset="0.682" stop-color="#cc0e1f"/><stop offset="0.77" stop-color="#ba020e"/><stop offset="1" stop-color="#990000"/></linearGradient><linearGradient id="g111" gradientUnits="userSpaceOnUse" x1="1223" x2="1805"><stop offset="0" stop-color="#00cbff"/><stop offset="0.246" stop-color="#00b9ff"/><stop offset="0.323" stop-color="#74b2ff"/><stop offset="0.368" stop-color="#c3b1ff"/><stop offset="0.397" stop-color="#ffabfd"/><stop offset="0.431" stop-color="#ff7ebd"/><stop offset="0.474" stop-color="#ff5a8a"/><stop offset="0.538" stop-color="#fd375b"/><stop offset="0.608" stop-color="#e51c36"/><stop offset="0.679" stop-color="#cd0c1f"/><stop offset="0.768" stop-color="#bb000e"/><stop offset="1" stop-color="#970000"/></linearGradient><linearGradient id="g112" gradientUnits="userSpaceOnUse" x1="1224" x2="1813"><stop offset="0" stop-color="#00c5ff"/><stop offset="0.239" stop-color="#00b2ff"/><stop offset="0.317" stop-color="#76aaff"/><stop offset="0.36" stop-color="#bfa9ff"/><stop offset="0.39" stop-color="#ffa3fd"/><stop offset="0.424" stop-color="#ff78be"/><stop offset="0.469" stop-color="#ff548a"/><stop offset="0.531" stop-color="#fe335b"/><stop offset="0.603" stop-color="#e51935"/><stop offset="0.672" stop-color="#cd0a1f"/><stop offset="0.759" stop-color="#ba000f"/><stop offset="1" stop-color="#940000"/></linearGradient><linearGradient id="g113" gradientUnits="userSpaceOnUse" x1="1225" x2="1811"><stop offset="0" stop-color="#00c0ff"/><stop offset="0.237" stop-color="#01abff"/><stop offset="0.317" stop-color="#77a2ff"/><stop offset="0.358" stop-color="#bca1ff"/><stop offset="0.391" stop-color="#ff9bfe"/><stop offset="0.425" stop-color="#ff72bf"/><stop offset="0.469" stop-color="#ff4f8b"/><stop offset="0.534" stop-color="#fe2f5c"/><stop offset="0.604" stop-color="#e61737"/><stop offset="0.674" stop-color="#ce0820"/><stop offset="0.759" stop-color="#ba0010"/><stop offset="1" stop-color="#940000"/></linearGradient><linearGradient id="g114" gradientUnits="userSpaceOnUse" x1="1227" x2="1803"><stop offset="0" stop-color="#00baff"/><stop offset="0.236" stop-color="#01a4ff"/><stop offset="0.29" stop-color="#4b9eff"/><stop offset="0.351" stop-color="#aa9bff"/><stop offset="0.394" stop-color="#ff93ff"/><stop offset="0.429" stop-color="#ff6dc1"/><stop offset="0.474" stop-color="#ff4b8c"/><stop offset="0.542" stop-color="#fe2b5c"/><stop offset="0.609" stop-color="#e81538"/><stop offset="0.679" stop-color="#d10721"/><stop offset="0.762" stop-color="#bc0011"/><stop offset="1" stop-color="#950000"/></linearGradient><linearGradient id="g115" gradientUnits="userSpaceOnUse" x1="1228" x2="1794"><stop offset="0" stop-color="#00b4ff"/><stop offset="0.235" stop-color="#009dff"/><stop offset="0.286" stop-color="#4298ff"/><stop offset="0.35" stop-color="#a294ff"/><stop offset="0.401" stop-color="#ff8afc"/><stop offset="0.436" stop-color="#ff65bf"/><stop offset="0.482" stop-color="#ff468c"/><stop offset="0.551" stop-color="#fe275c"/><stop offset="0.618" stop-color="#e9133a"/><stop offset="0.686" stop-color="#d30623"/><stop offset="0.767" stop-color="#bd0013"/><stop offset="0.86" stop-color="#a90008"/><stop offset="1" stop-color="#970000"/></linearGradient><linearGradient id="g116" gradientUnits="userSpaceOnUse" x1="1229" x2="1786"><stop offset="0" stop-color="#00afff"/><stop offset="0.235" stop-color="#0097ff"/><stop offset="0.287" stop-color="#4291ff"/><stop offset="0.352" stop-color="#9f8eff"/><stop offset="0.406" stop-color="#ff83fd"/><stop offset="0.442" stop-color="#ff60c0"/><stop offset="0.488" stop-color="#ff418d"/><stop offset="0.56" stop-color="#fe245c"/><stop offset="0.623" stop-color="#ec113c"/><stop offset="0.722" stop-color="#cd011e"/><stop offset="0.772" stop-color="#be0014"/><stop offset="0.869" stop-color="#a90009"/><stop offset="1" stop-color="#980001"/></linearGradient><linearGradient id="g117" gradientUnits="userSpaceOnUse" x1="1230" x2="1777"><stop offset="0" stop-color="#00a9ff"/><stop offset="0.236" stop-color="#0091ff"/><stop offset="0.289" stop-color="#418bff"/><stop offset="0.355" stop-color="#9c87ff"/><stop offset="0.411" stop-color="#ff7cfd"/><stop offset="0.45" stop-color="#ff59bf"/><stop offset="0.495" stop-color="#ff3d8f"/><stop offset="0.57" stop-color="#fe205d"/><stop offset="0.631" stop-color="#ee0f3e"/><stop offset="0.726" stop-color="#d00020"/><stop offset="0.777" stop-color="#c00016"/><stop offset="0.876" stop-color="#aa000a"/><stop offset="1" stop-color="#990002"/></linearGradient><linearGradient id="g118" gradientUnits="userSpaceOnUse" x1="1232" x2="1769"><stop offset="0" stop-color="#00a4ff"/><stop offset="0.235" stop-color="#008bff"/><stop offset="0.354" stop-color="#9781ff"/><stop offset="0.415" stop-color="#ff75fe"/><stop offset="0.453" stop-color="#ff55c3"/><stop offset="0.499" stop-color="#ff3a91"/><stop offset="0.577" stop-color="#fe1d5e"/><stop offset="0.635" stop-color="#f00e41"/><stop offset="0.721" stop-color="#d50025"/><stop offset="0.782" stop-color="#c10018"/><stop offset="0.881" stop-color="#aa000b"/><stop offset="1" stop-color="#9a0003"/></linearGradient><linearGradient id="g119" gradientUnits="userSpaceOnUse" x1="1233" x2="1760"><stop offset="0" stop-color="#009fff"/><stop offset="0.235" stop-color="#0185ff"/><stop offset="0.357" stop-color="#957bff"/><stop offset="0.387" stop-color="#c375ff"/><stop offset="0.421" stop-color="#ff6eff"/><stop offset="0.459" stop-color="#ff50c4"/><stop offset="0.507" stop-color="#ff3693"/><stop offset="0.588" stop-color="#ff195e"/><stop offset="0.641" stop-color="#f20d44"/><stop offset="0.719" stop-color="#da0029"/><stop offset="0.787" stop-color="#c3001a"/><stop offset="0.884" stop-color="#ac000d"/><stop offset="1" stop-color="#9b0005"/></linearGradient><linearGradient id="g120" gradientUnits="userSpaceOnUse" x1="1234" x2="1752"><stop offset="0" stop-color="#009aff"/><stop offset="0.236" stop-color="#017fff"/><stop offset="0.357" stop-color="#9075ff"/><stop offset="0.429" stop-color="#ff66fc"/><stop offset="0.467" stop-color="#ff4ac2"/><stop offset="0.514" stop-color="#ff3294"/><stop offset="0.598" stop-color="#ff165e"/><stop offset="0.649" stop-color="#f40b46"/><stop offset="0.714" stop-color="#e0002f"/><stop offset="0.793" stop-color="#c4001c"/><stop offset="0.888" stop-color="#ad000f"/><stop offset="1" stop-color="#9c0006"/></linearGradient><linearGradient id="g121" gradientUnits="userSpaceOnUse" x1="1235" x2="1743"><stop offset="0" stop-color="#0094ff"/><stop offset="0.236" stop-color="#017aff"/><stop offset="0.36" stop-color="#8e6fff"/><stop offset="0.435" stop-color="#ff60fd"/><stop offset="0.474" stop-color="#ff45c4"/><stop offset="0.522" stop-color="#ff2e95"/><stop offset="0.575" stop-color="#ff1c71"/><stop offset="0.654" stop-color="#f6094a"/><stop offset="0.713" stop-color="#e50034"/><stop offset="0.797" stop-color="#c7001e"/><stop offset="0.892" stop-color="#af0010"/><stop offset="1" stop-color="#9d0007"/></linearGradient><linearGradient id="g122" gradientUnits="userSpaceOnUse" x1="1237" x2="1735"><stop offset="0" stop-color="#008fff"/><stop offset="0.233" stop-color="#0075ff"/><stop offset="0.361" stop-color="#8b6aff"/><stop offset="0.44" stop-color="#ff59fd"/><stop offset="0.478" stop-color="#ff41c7"/><stop offset="0.526" stop-color="#ff2b98"/><stop offset="0.58" stop-color="#ff1973"/><stop offset="0.657" stop-color="#f9084e"/><stop offset="0.707" stop-color="#eb003a"/><stop offset="0.801" stop-color="#c90021"/><stop offset="0.894" stop-color="#b10012"/><stop offset="1" stop-color="#9e0009"/></linearGradient><linearGradient id="g123" gradientUnits="userSpaceOnUse" x1="1238" x2="1726"><stop offset="0" stop-color="#008aff"/><stop offset="0.234" stop-color="#0070ff"/><stop offset="0.365" stop-color="#8964ff"/><stop offset="0.404" stop-color="#bd5dff"/><stop offset="0.447" stop-color="#ff53fe"/><stop offset="0.486" stop-color="#ff3cc8"/><stop offset="0.533" stop-color="#ff289b"/><stop offset="0.588" stop-color="#ff1775"/><stop offset="0.66" stop-color="#fb0753"/><stop offset="0.705" stop-color="#f00041"/><stop offset="0.805" stop-color="#cc0023"/><stop offset="0.898" stop-color="#b30014"/><stop offset="1" stop-color="#a0000a"/></linearGradient><linearGradient id="g124" gradientUnits="userSpaceOnUse" x1="1239" x2="1718"><stop offset="0" stop-color="#0086ff"/><stop offset="0.234" stop-color="#006bff"/><stop offset="0.367" stop-color="#875fff"/><stop offset="0.409" stop-color="#bd57ff"/><stop offset="0.453" stop-color="#ff4eff"/><stop offset="0.491" stop-color="#ff38cb"/><stop offset="0.537" stop-color="#ff259f"/><stop offset="0.589" stop-color="#ff167b"/><stop offset="0.653" stop-color="#fe085b"/><stop offset="0.699" stop-color="#f50048"/><stop offset="0.804" stop-color="#d00027"/><stop offset="0.898" stop-color="#b60017"/><stop offset="1" stop-color="#a2000c"/></linearGradient><linearGradient id="g125" gradientUnits="userSpaceOnUse" x1="1241" x2="1709"><stop offset="0" stop-color="#0081ff"/><stop offset="0.233" stop-color="#0066ff"/><stop offset="0.368" stop-color="#835aff"/><stop offset="0.462" stop-color="#ff47fc"/><stop offset="0.498" stop-color="#ff33cc"/><stop offset="0.538" stop-color="#ff24a5"/><stop offset="0.588" stop-color="#ff1583"/><stop offset="0.645" stop-color="#ff0865"/><stop offset="0.697" stop-color="#f9004f"/><stop offset="0.803" stop-color="#d5002c"/><stop offset="1" stop-color="#a5000e"/></linearGradient><linearGradient id="g126" gradientUnits="userSpaceOnUse" x1="1242" x2="1701"><stop offset="0" stop-color="#007cff"/><stop offset="0.233" stop-color="#0161ff"/><stop offset="0.37" stop-color="#8155ff"/><stop offset="0.414" stop-color="#b54dff"/><stop offset="0.468" stop-color="#ff41fd"/><stop offset="0.503" stop-color="#ff30d0"/><stop offset="0.545" stop-color="#ff20a8"/><stop offset="0.593" stop-color="#ff1386"/><stop offset="0.649" stop-color="#ff0769"/><stop offset="0.695" stop-color="#fc0056"/><stop offset="0.81" stop-color="#d7002e"/><stop offset="1" stop-color="#a70010"/></linearGradient><linearGradient id="g127" gradientUnits="userSpaceOnUse" x1="1243" x2="1692"><stop offset="0" stop-color="#0077ff"/><stop offset="0.234" stop-color="#015dff"/><stop offset="0.374" stop-color="#8050ff"/><stop offset="0.421" stop-color="#b547ff"/><stop offset="0.477" stop-color="#ff3cfd"/><stop offset="0.512" stop-color="#ff2bd1"/><stop offset="0.555" stop-color="#ff1ca9"/><stop offset="0.601" stop-color="#ff1089"/><stop offset="0.657" stop-color="#ff056c"/><stop offset="0.708" stop-color="#fb0056"/><stop offset="0.817" stop-color="#d90031"/><stop offset="1" stop-color="#aa0013"/></linearGradient><linearGradient id="g128" gradientUnits="userSpaceOnUse" x1="1245" x2="1684"><stop offset="0" stop-color="#0073ff"/><stop offset="0.232" stop-color="#0158ff"/><stop offset="0.376" stop-color="#7e4bff"/><stop offset="0.426" stop-color="#b542ff"/><stop offset="0.483" stop-color="#ff36fe"/><stop offset="0.519" stop-color="#ff27d2"/><stop offset="0.56" stop-color="#ff19ac"/><stop offset="0.606" stop-color="#ff0e8d"/><stop offset="0.661" stop-color="#ff0370"/><stop offset="0.722" stop-color="#f90056"/><stop offset="0.822" stop-color="#db0034"/><stop offset="1" stop-color="#ad0015"/></linearGradient><linearGradient id="g129" gradientUnits="userSpaceOnUse" x1="1246" x2="1675"><stop offset="0" stop-color="#006eff"/><stop offset="0.231" stop-color="#0054ff"/><stop offset="0.38" stop-color="#7c47ff"/><stop offset="0.436" stop-color="#b83cff"/><stop offset="0.492" stop-color="#ff31ff"/><stop offset="0.529" stop-color="#ff22d3"/><stop offset="0.573" stop-color="#ff15ac"/><stop offset="0.625" stop-color="#ff098a"/><stop offset="0.685" stop-color="#fe006c"/><stop offset="0.744" stop-color="#f60054"/><stop offset="0.834" stop-color="#dc0036"/><stop offset="1" stop-color="#b10018"/></linearGradient><linearGradient id="g130" gradientUnits="userSpaceOnUse" x1="1248" x2="1667"><stop offset="0" stop-color="#006aff"/><stop offset="0.229" stop-color="#0050ff"/><stop offset="0.325" stop-color="#4c4bff"/><stop offset="0.382" stop-color="#7b42ff"/><stop offset="0.442" stop-color="#b937ff"/><stop offset="0.499" stop-color="#ff2cff"/><stop offset="0.537" stop-color="#ff1ed4"/><stop offset="0.58" stop-color="#ff12ae"/><stop offset="0.63" stop-color="#ff078e"/><stop offset="0.692" stop-color="#fd006f"/><stop offset="0.757" stop-color="#f50055"/><stop offset="0.842" stop-color="#de0039"/><stop offset="1" stop-color="#b5001b"/></linearGradient><linearGradient id="g131" gradientUnits="userSpaceOnUse" x1="1249" x2="1659"><stop offset="0" stop-color="#0066ff"/><stop offset="0.229" stop-color="#004cff"/><stop offset="0.322" stop-color="#4848ff"/><stop offset="0.385" stop-color="#793eff"/><stop offset="0.441" stop-color="#b134ff"/><stop offset="0.51" stop-color="#ff26fd"/><stop offset="0.546" stop-color="#ff1ad4"/><stop offset="0.59" stop-color="#ff0eaf"/><stop offset="0.663" stop-color="#ff0083"/><stop offset="0.7" stop-color="#fc0071"/><stop offset="0.768" stop-color="#f40056"/><stop offset="0.849" stop-color="#e0003c"/><stop offset="1" stop-color="#b8001e"/></linearGradient><linearGradient id="g132" gradientUnits="userSpaceOnUse" x1="1251" x2="1650"><stop offset="0" stop-color="#0061ff"/><stop offset="0.228" stop-color="#0048ff"/><stop offset="0.321" stop-color="#4544ff"/><stop offset="0.388" stop-color="#7839ff"/><stop offset="0.449" stop-color="#b12fff"/><stop offset="0.519" stop-color="#ff21fd"/><stop offset="0.556" stop-color="#ff16d5"/><stop offset="0.596" stop-color="#ff0cb4"/><stop offset="0.659" stop-color="#ff008d"/><stop offset="0.704" stop-color="#fb0076"/><stop offset="0.782" stop-color="#f30058"/><stop offset="0.852" stop-color="#e30041"/><stop offset="1" stop-color="#bd0022"/></linearGradient><linearGradient id="g133" gradientUnits="userSpaceOnUse" x1="1252" x2="1642"><stop offset="0" stop-color="#005dff"/><stop offset="0.228" stop-color="#0144ff"/><stop offset="0.318" stop-color="#4141ff"/><stop offset="0.392" stop-color="#7635ff"/><stop offset="0.456" stop-color="#b12aff"/><stop offset="0.528" stop-color="#ff1cfe"/><stop offset="0.564" stop-color="#ff12d9"/><stop offset="0.605" stop-color="#ff09b7"/><stop offset="0.651" stop-color="#ff0099"/><stop offset="0.713" stop-color="#fa0079"/><stop offset="0.795" stop-color="#f20059"/><stop offset="0.859" stop-color="#e50045"/><stop offset="1" stop-color="#c10025"/></linearGradient><linearGradient id="g134" gradientUnits="userSpaceOnUse" x1="1254" x2="1633"><stop offset="0" stop-color="#0059ff"/><stop offset="0.227" stop-color="#0140ff"/><stop offset="0.317" stop-color="#3e3dff"/><stop offset="0.398" stop-color="#7731ff"/><stop offset="0.467" stop-color="#b425ff"/><stop offset="0.538" stop-color="#ff18ff"/><stop offset="0.575" stop-color="#ff0ed9"/><stop offset="0.615" stop-color="#ff06ba"/><stop offset="0.72" stop-color="#f9007c"/><stop offset="0.836" stop-color="#ed0052"/><stop offset="1" stop-color="#c6002a"/></linearGradient><linearGradient id="g135" gradientUnits="userSpaceOnUse" x1="1255" x2="1625"><stop offset="0" stop-color="#0055ff"/><stop offset="0.227" stop-color="#013dff"/><stop offset="0.314" stop-color="#3a3aff"/><stop offset="0.403" stop-color="#752dff"/><stop offset="0.476" stop-color="#b521ff"/><stop offset="0.549" stop-color="#ff13ff"/><stop offset="0.622" stop-color="#ff03bf"/><stop offset="0.727" stop-color="#f80080"/><stop offset="0.854" stop-color="#eb0052"/><stop offset="1" stop-color="#ca002e"/></linearGradient><linearGradient id="g136" gradientUnits="userSpaceOnUse" x1="1257" x2="1616"><stop offset="0" stop-color="#0050ff"/><stop offset="0.223" stop-color="#003aff"/><stop offset="0.312" stop-color="#3737ff"/><stop offset="0.404" stop-color="#7229ff"/><stop offset="0.476" stop-color="#ad1eff"/><stop offset="0.563" stop-color="#ff0efd"/><stop offset="0.649" stop-color="#fe00b5"/><stop offset="0.735" stop-color="#f70084"/><stop offset="0.872" stop-color="#ea0054"/><stop offset="1" stop-color="#d00034"/></linearGradient><linearGradient id="g137" gradientUnits="userSpaceOnUse" x1="1258" x2="1608"><stop offset="0" stop-color="#004dff"/><stop offset="0.223" stop-color="#0036ff"/><stop offset="0.309" stop-color="#3434ff"/><stop offset="0.411" stop-color="#7325ff"/><stop offset="0.489" stop-color="#b019ff"/><stop offset="0.574" stop-color="#ff0afd"/><stop offset="0.657" stop-color="#fc00b9"/><stop offset="0.743" stop-color="#f60088"/><stop offset="0.846" stop-color="#ed0061"/><stop offset="1" stop-color="#d40039"/></linearGradient><linearGradient id="g138" gradientUnits="userSpaceOnUse" x1="1260" x2="1599"><stop offset="0" stop-color="#0049ff"/><stop offset="0.221" stop-color="#0033ff"/><stop offset="0.307" stop-color="#3130ff"/><stop offset="0.416" stop-color="#7122ff"/><stop offset="0.499" stop-color="#b015ff"/><stop offset="0.587" stop-color="#ff05fe"/><stop offset="0.667" stop-color="#fb00bc"/><stop offset="0.752" stop-color="#f5008c"/><stop offset="0.855" stop-color="#ed0065"/><stop offset="1" stop-color="#d9003f"/></linearGradient><linearGradient id="g139" gradientUnits="userSpaceOnUse" x1="1261" x2="1591"><stop offset="0" stop-color="#0045ff"/><stop offset="0.221" stop-color="#0130ff"/><stop offset="0.303" stop-color="#2e2eff"/><stop offset="0.421" stop-color="#701eff"/><stop offset="0.509" stop-color="#b111ff"/><stop offset="0.6" stop-color="#ff01ff"/><stop offset="0.673" stop-color="#fa00c2"/><stop offset="0.761" stop-color="#f30090"/><stop offset="0.864" stop-color="#ec0069"/><stop offset="1" stop-color="#dc0045"/></linearGradient><linearGradient id="g140" gradientUnits="userSpaceOnUse" x1="1263" x2="1582"><stop offset="0" stop-color="#0041ff"/><stop offset="0.219" stop-color="#012cff"/><stop offset="0.301" stop-color="#2b2bff"/><stop offset="0.426" stop-color="#6f1aff"/><stop offset="0.517" stop-color="#af0dff"/><stop offset="0.614" stop-color="#fe00fe"/><stop offset="0.687" stop-color="#f900c4"/><stop offset="0.771" stop-color="#f20095"/><stop offset="0.871" stop-color="#eb006e"/><stop offset="1" stop-color="#e0004c"/></linearGradient><linearGradient id="g141" gradientUnits="userSpaceOnUse" x1="1265" x2="1574"><stop offset="0" stop-color="#003dff"/><stop offset="0.217" stop-color="#0129ff"/><stop offset="0.294" stop-color="#2828ff"/><stop offset="0.356" stop-color="#4421ff"/><stop offset="0.434" stop-color="#7017ff"/><stop offset="0.531" stop-color="#b109ff"/><stop offset="0.628" stop-color="#fe00ff"/><stop offset="0.693" stop-color="#f800ca"/><stop offset="0.78" stop-color="#f10099"/><stop offset="0.88" stop-color="#ea0072"/><stop offset="1" stop-color="#e20052"/></linearGradient><linearGradient id="g142" gradientUnits="userSpaceOnUse" x1="1266" x2="1565"><stop offset="0" stop-color="#0039ff"/><stop offset="0.217" stop-color="#0126ff"/><stop offset="0.294" stop-color="#2625ff"/><stop offset="0.361" stop-color="#431dff"/><stop offset="0.441" stop-color="#6e13ff"/><stop offset="0.579" stop-color="#ca00ff"/><stop offset="0.645" stop-color="#fe00ff"/><stop offset="0.702" stop-color="#f700d0"/><stop offset="0.789" stop-color="#f1009f"/><stop offset="0.886" stop-color="#ea0079"/><stop offset="1" stop-color="#e20059"/></linearGradient><linearGradient id="g143" gradientUnits="userSpaceOnUse" x1="1268" x2="1557"><stop offset="0" stop-color="#0036ff"/><stop offset="0.211" stop-color="#0024ff"/><stop offset="0.287" stop-color="#2323ff"/><stop offset="0.356" stop-color="#3f1bff"/><stop offset="0.446" stop-color="#6d10ff"/><stop offset="0.564" stop-color="#b600ff"/><stop offset="0.661" stop-color="#fd00ff"/><stop offset="0.664" stop-color="#f800f7"/><stop offset="0.713" stop-color="#f500d4"/><stop offset="0.799" stop-color="#f000a3"/><stop offset="0.893" stop-color="#e9007e"/><stop offset="1" stop-color="#e20060"/></linearGradient><linearGradient id="g144" gradientUnits="userSpaceOnUse" x1="1270" x2="1549"><stop offset="0" stop-color="#0032ff"/><stop offset="0.208" stop-color="#0021ff"/><stop offset="0.283" stop-color="#2120ff"/><stop offset="0.358" stop-color="#3e18ff"/><stop offset="0.452" stop-color="#6c0dff"/><stop offset="0.552" stop-color="#a700ff"/><stop offset="0.677" stop-color="#fd00ff"/><stop offset="0.681" stop-color="#f700f6"/><stop offset="0.72" stop-color="#f400da"/><stop offset="0.806" stop-color="#ef00aa"/><stop offset="0.896" stop-color="#e90086"/><stop offset="1" stop-color="#e30067"/></linearGradient><linearGradient id="g145" gradientUnits="userSpaceOnUse" x1="1272" x2="1540"><stop offset="0" stop-color="#002eff"/><stop offset="0.205" stop-color="#001eff"/><stop offset="0.276" stop-color="#1e1dff"/><stop offset="0.358" stop-color="#3c15ff"/><stop offset="0.459" stop-color="#6b0aff"/><stop offset="0.537" stop-color="#9500ff"/><stop offset="0.698" stop-color="#fc00ff"/><stop offset="0.701" stop-color="#f500f5"/><stop offset="0.731" stop-color="#f300e0"/><stop offset="0.817" stop-color="#ee00b0"/><stop offset="0.903" stop-color="#e9008d"/><stop offset="1" stop-color="#e30070"/></linearGradient><linearGradient id="g146" gradientUnits="userSpaceOnUse" x1="1273" x2="1532"><stop offset="0" stop-color="#002bff"/><stop offset="0.205" stop-color="#011bff"/><stop offset="0.359" stop-color="#3912ff"/><stop offset="0.471" stop-color="#6c06ff"/><stop offset="0.598" stop-color="#b000ff"/><stop offset="0.722" stop-color="#fe00ff"/><stop offset="0.726" stop-color="#f300f1"/><stop offset="0.822" stop-color="#ed00b9"/><stop offset="0.903" stop-color="#e90096"/><stop offset="1" stop-color="#e30078"/></linearGradient><linearGradient id="g147" gradientUnits="userSpaceOnUse" x1="1275" x2="1523"><stop offset="0" stop-color="#0027ff"/><stop offset="0.202" stop-color="#0119ff"/><stop offset="0.359" stop-color="#3710ff"/><stop offset="0.48" stop-color="#6b03ff"/><stop offset="0.617" stop-color="#b100ff"/><stop offset="0.746" stop-color="#fe00ff"/><stop offset="0.75" stop-color="#f100f0"/><stop offset="0.831" stop-color="#ed00c2"/><stop offset="0.911" stop-color="#e8009f"/><stop offset="1" stop-color="#e30082"/></linearGradient><linearGradient id="g148" gradientUnits="userSpaceOnUse" x1="1277" x2="1515"><stop offset="0" stop-color="#0024ff"/><stop offset="0.193" stop-color="#0016ff"/><stop offset="0.319" stop-color="#2811ff"/><stop offset="0.542" stop-color="#8300ff"/><stop offset="0.769" stop-color="#fd00ff"/><stop offset="0.773" stop-color="#f000ef"/><stop offset="0.836" stop-color="#ec00cb"/><stop offset="0.912" stop-color="#e800aa"/><stop offset="1" stop-color="#e3008b"/></linearGradient><linearGradient id="g149" gradientUnits="userSpaceOnUse" x1="1278" x2="1506"><stop offset="0" stop-color="#0021ff"/><stop offset="0.193" stop-color="#0014ff"/><stop offset="0.325" stop-color="#280eff"/><stop offset="0.474" stop-color="#5e00ff"/><stop offset="0.561" stop-color="#8300ff"/><stop offset="0.798" stop-color="#fd00ff"/><stop offset="0.803" stop-color="#ee00ed"/><stop offset="0.842" stop-color="#ec00d7"/><stop offset="1" stop-color="#e40097"/></linearGradient><linearGradient id="g150" gradientUnits="userSpaceOnUse" x1="1280" x2="1498"><stop offset="0" stop-color="#001eff"/><stop offset="0.188" stop-color="#0011ff"/><stop offset="0.335" stop-color="#2a0aff"/><stop offset="0.45" stop-color="#5100ff"/><stop offset="0.583" stop-color="#8600ff"/><stop offset="0.826" stop-color="#fd00ff"/><stop offset="0.83" stop-color="#ec00ec"/><stop offset="0.849" stop-color="#eb00e2"/><stop offset="1" stop-color="#e400a2"/></linearGradient><linearGradient id="g151" gradientUnits="userSpaceOnUse" x1="1282" x2="1489"><stop offset="0" stop-color="#001aff"/><stop offset="0.184" stop-color="#000fff"/><stop offset="0.343" stop-color="#2b07ff"/><stop offset="0.43" stop-color="#4600ff"/><stop offset="0.609" stop-color="#8900ff"/><stop offset="0.865" stop-color="#ff00ff"/><stop offset="0.87" stop-color="#ea00e8"/><stop offset="1" stop-color="#e400b0"/></linearGradient><linearGradient id="g152" gradientUnits="userSpaceOnUse" x1="1284" x2="1481"><stop offset="0" stop-color="#0017ff"/><stop offset="0.178" stop-color="#000dff"/><stop offset="0.355" stop-color="#2d04ff"/><stop offset="0.635" stop-color="#8b00ff"/><stop offset="0.898" stop-color="#fe00ff"/><stop offset="0.904" stop-color="#e900e7"/><stop offset="1" stop-color="#e400be"/></linearGradient><linearGradient id="g153" gradientUnits="userSpaceOnUse" x1="1286" x2="1472"><stop offset="0" stop-color="#0014ff"/><stop offset="0.172" stop-color="#010bff"/><stop offset="0.371" stop-color="#3000ff"/><stop offset="0.661" stop-color="#8c00ff"/><stop offset="0.941" stop-color="#fe00ff"/><stop offset="0.946" stop-color="#e700e6"/><stop offset="1" stop-color="#e500cf"/></linearGradient><linearGradient id="g154" gradientUnits="userSpaceOnUse" x1="1288" x2="1464"><stop offset="0" stop-color="#0011ff"/><stop offset="0.159" stop-color="#0009ff"/><stop offset="0.307" stop-color="#1f02ff"/><stop offset="0.477" stop-color="#4b00ff"/><stop offset="0.653" stop-color="#8100ff"/><stop offset="0.824" stop-color="#bd00ff"/><stop offset="0.983" stop-color="#fd00ff"/><stop offset="0.989" stop-color="#e500e5"/><stop offset="1" stop-color="#e500e0"/></linearGradient><linearGradient id="g155" gradientUnits="userSpaceOnUse" x1="1289" x2="1455"><stop offset="0" stop-color="#000eff"/><stop offset="0.157" stop-color="#0007ff"/><stop offset="0.38" stop-color="#2d00ff"/><stop offset="0.699" stop-color="#8500ff"/><stop offset="1" stop-color="#ee00ff"/></linearGradient><linearGradient id="g156" gradientUnits="userSpaceOnUse" x1="1291" x2="1447"><stop offset="0" stop-color="#000bff"/><stop offset="0.147" stop-color="#0005ff"/><stop offset="0.372" stop-color="#2a00ff"/><stop offset="0.692" stop-color="#7b00ff"/><stop offset="1" stop-color="#dc00ff"/></linearGradient><linearGradient id="g157" gradientUnits="userSpaceOnUse" x1="1293" x2="1438"><stop offset="0" stop-color="#0008ff"/><stop offset="0.138" stop-color="#0003ff"/><stop offset="0.372" stop-color="#2900ff"/><stop offset="0.69" stop-color="#7100ff"/><stop offset="1" stop-color="#c800ff"/></linearGradient><linearGradient id="g158" gradientUnits="userSpaceOnUse" x1="1295" x2="1430"><stop offset="0" stop-color="#0006ff"/><stop offset="0.126" stop-color="#0001ff"/><stop offset="0.37" stop-color="#2700ff"/><stop offset="0.689" stop-color="#6900ff"/><stop offset="1" stop-color="#b700ff"/></linearGradient><linearGradient id="g159" gradientUnits="userSpaceOnUse" x1="1297" x2="1422"><stop offset="0" stop-color="#0003ff"/><stop offset="0.112" stop-color="#0000ff"/><stop offset="0.368" stop-color="#2600ff"/><stop offset="0.688" stop-color="#6100ff"/><stop offset="1" stop-color="#a800ff"/></linearGradient><linearGradient id="g160" gradientUnits="userSpaceOnUse" x1="1299" x2="1413"><stop offset="0" stop-color="#0001ff"/><stop offset="0.105" stop-color="#0100ff"/><stop offset="0.377" stop-color="#2500ff"/><stop offset="0.693" stop-color="#5a00ff"/><stop offset="1" stop-color="#9700ff"/></linearGradient><linearGradient id="g161" gradientUnits="userSpaceOnUse" x1="1301" x2="1405"><stop offset="0" stop-color="#0000ff"/><stop offset="0.096" stop-color="#0200ff"/><stop offset="0.385" stop-color="#2500ff"/><stop offset="1" stop-color="#8900ff"/></linearGradient><linearGradient id="g162" gradientUnits="userSpaceOnUse" x1="1303" x2="1396"><stop offset="0" stop-color="#0000ff"/><stop offset="0.108" stop-color="#0500ff"/><stop offset="0.409" stop-color="#2600ff"/><stop offset="1" stop-color="#7a00ff"/></linearGradient><linearGradient id="g163" gradientUnits="userSpaceOnUse" x1="1305" x2="1388"><stop offset="0" stop-color="#0000ff"/><stop offset="0.446" stop-color="#2900ff"/><stop offset="1" stop-color="#6d00ff"/></linearGradient><linearGradient id="g164" gradientUnits="userSpaceOnUse" x1="1307" x2="1379"><stop offset="0" stop-color="#0200ff"/><stop offset="0.472" stop-color="#2900ff"/><stop offset="1" stop-color="#5f00ff"/></linearGradient><linearGradient id="g165" gradientUnits="userSpaceOnUse" x1="1309" x2="1371"><stop offset="0" stop-color="#0500ff"/><stop offset="1" stop-color="#5400ff"/></linearGradient><linearGradient id="g166" gradientUnits="userSpaceOnUse" x1="1311" x2="1362"><stop offset="0" stop-color="#0800ff"/><stop offset="1" stop-color="#4700ff"/></linearGradient><linearGradient id="g167" gradientUnits="userSpaceOnUse" x1="1313" x2="1354"><stop offset="0" stop-color="#0b00ff"/><stop offset="1" stop-color="#3d00ff"/></linearGradient><linearGradient id="g168" gradientUnits="userSpaceOnUse" x1="1318" x2="1345"><stop offset="0" stop-color="#1100ff"/><stop offset="1" stop-color="#3200ff"/></linearGradient><clipPath id="lc"><path d="M1328.3 661.9C1325.6 661.4 1322.3 660.1 1320.0 658.5C1317.7 656.9 1317.2 656.4 1314.2 652.4C1311.2 648.4 1307.9 643.3 1302.2 634.3C1296.5 625.3 1287.9 611.6 1280.2 598.3C1272.5 584.9 1263.4 568.9 1256.1 554.2C1248.8 539.5 1241.4 522.5 1236.1 510.1C1230.8 497.7 1227.3 488.4 1224.1 480.0C1220.9 471.6 1220.1 469.3 1217.1 460.0C1214.1 450.7 1209.4 435.0 1206.3 424.1C1203.2 413.2 1200.5 403.4 1198.3 394.4C1196.1 385.4 1195.0 380.0 1193.2 370.0C1191.4 360.0 1189.0 348.8 1187.4 334.5C1185.8 320.2 1184.3 296.1 1183.6 284.0C1182.9 271.9 1183.2 268.7 1183.4 262.0C1183.6 255.3 1183.6 250.7 1184.6 244.0C1185.6 237.3 1187.7 227.7 1189.3 221.6C1190.9 215.5 1192.3 212.0 1194.3 207.3C1196.3 202.7 1199.1 197.9 1201.5 193.7C1203.9 189.5 1206.2 185.5 1208.6 182.2C1211.0 178.8 1213.4 176.1 1215.8 173.6C1218.2 171.1 1220.5 169.0 1222.9 167.2C1225.3 165.4 1227.1 164.2 1230.1 162.9C1233.1 161.6 1237.2 160.1 1240.8 159.3C1244.4 158.5 1247.4 158.1 1251.6 158.0C1255.8 157.9 1261.2 158.2 1265.9 158.6C1270.6 159.0 1275.2 159.6 1280.0 160.4C1284.8 161.2 1288.2 161.6 1294.5 163.2C1300.8 164.8 1309.9 167.2 1317.5 170.0C1325.1 172.8 1329.7 175.1 1340.0 180.0C1350.3 184.9 1361.3 189.4 1379.6 199.3C1397.9 209.2 1429.9 226.7 1450.0 239.2C1470.1 251.7 1484.5 263.4 1500.0 274.3C1515.5 285.2 1528.7 294.1 1543.0 304.4C1557.3 314.7 1571.6 325.2 1585.9 335.9C1600.2 346.6 1612.1 356.4 1628.8 368.8C1645.5 381.2 1669.9 398.6 1686.1 410.0C1702.3 421.4 1708.6 424.9 1725.9 437.3C1743.2 449.7 1777.3 475.2 1790.0 484.6C1802.7 494.0 1799.6 491.7 1802.0 493.5C1804.4 495.3 1804.9 494.9 1804.6 495.5C1804.3 496.1 1815.5 491.8 1800.0 497.3C1784.5 502.8 1779.9 504.4 1711.6 528.6C1643.3 552.8 1451.1 620.9 1390.0 642.6C1328.9 664.3 1354.0 655.5 1345.0 658.6C1336.0 661.7 1338.8 660.7 1336.0 661.2C1333.2 661.8 1331.0 662.4 1328.3 661.9Z"/></clipPath><filter id="vb" x="0" y="0" width="1" height="1" filterUnits="objectBoundingBox"><feGaussianBlur stdDeviation="0 1.3"/></filter><linearGradient id="in1" x1="0" y1="0" x2="0" y2="1"><stop offset="0" stop-color="#00c8ff"/><stop offset="1" stop-color="#0088ff"/></linearGradient><linearGradient id="in2" x1="0" y1="0" x2="1" y2="0.7"><stop offset=".5" stop-color="#5a8cff" stop-opacity="0"/><stop offset="1" stop-color="#5a8cff" stop-opacity=".62"/></linearGradient></defs><rect x="1180.7" y="143.7" width="729.3" height="528.4" fill="#222"/><g clip-path="url(#lc)"><g filter="url(#vb)"><rect x="1238" y="156" width="36" height="3.6" fill="url(#g0)"/><rect x="1228" y="159" width="66" height="3.6" fill="url(#g1)"/><rect x="1222" y="162" width="84" height="3.6" fill="url(#g2)"/><rect x="1217" y="165" width="99" height="3.6" fill="url(#g3)"/><rect x="1214" y="168" width="111" height="3.6" fill="url(#g4)"/><rect x="1211" y="171" width="121" height="3.6" fill="url(#g5)"/><rect x="1208" y="174" width="130" height="3.6" fill="url(#g6)"/><rect x="1206" y="177" width="138" height="3.6" fill="url(#g7)"/><rect x="1204" y="180" width="147" height="3.6" fill="url(#g8)"/><rect x="1202" y="183" width="155" height="3.6" fill="url(#g9)"/><rect x="1200" y="186" width="164" height="3.6" fill="url(#g10)"/><rect x="1198" y="189" width="172" height="3.6" fill="url(#g11)"/><rect x="1196" y="192" width="180" height="3.6" fill="url(#g12)"/><rect x="1195" y="195" width="187" height="3.6" fill="url(#g13)"/><rect x="1193" y="198" width="194" height="3.6" fill="url(#g14)"/><rect x="1191" y="201" width="202" height="3.6" fill="url(#g15)"/><rect x="1190" y="204" width="208" height="3.6" fill="url(#g16)"/><rect x="1189" y="207" width="215" height="3.6" fill="url(#g17)"/><rect x="1187" y="210" width="222" height="3.6" fill="url(#g18)"/><rect x="1186" y="213" width="229" height="3.6" fill="url(#g19)"/><rect x="1186" y="216" width="234" height="3.6" fill="url(#g20)"/><rect x="1185" y="219" width="240" height="3.6" fill="url(#g21)"/><rect x="1184" y="222" width="247" height="3.6" fill="url(#g22)"/><rect x="1183" y="225" width="253" height="3.6" fill="url(#g23)"/><rect x="1183" y="228" width="258" height="3.6" fill="url(#g24)"/><rect x="1182" y="231" width="264" height="3.6" fill="url(#g25)"/><rect x="1181" y="234" width="270" height="3.6" fill="url(#g26)"/><rect x="1181" y="237" width="275" height="3.6" fill="url(#g27)"/><rect x="1180" y="240" width="280" height="3.6" fill="url(#g28)"/><rect x="1180" y="243" width="285" height="3.6" fill="url(#g29)"/><rect x="1179" y="246" width="290" height="3.6" fill="url(#g30)"/><rect x="1179" y="249" width="295" height="3.6" fill="url(#g31)"/><rect x="1179" y="252" width="299" height="3.6" fill="url(#g32)"/><rect x="1179" y="255" width="303" height="3.6" fill="url(#g33)"/><rect x="1179" y="258" width="307" height="3.6" fill="url(#g34)"/><rect x="1179" y="261" width="311" height="3.6" fill="url(#g35)"/><rect x="1179" y="264" width="315" height="3.6" fill="url(#g36)"/><rect x="1179" y="267" width="319" height="3.6" fill="url(#g37)"/><rect x="1179" y="270" width="324" height="3.6" fill="url(#g38)"/><rect x="1179" y="273" width="328" height="3.6" fill="url(#g39)"/><rect x="1179" y="276" width="332" height="3.6" fill="url(#g40)"/><rect x="1179" y="279" width="337" height="3.6" fill="url(#g41)"/><rect x="1179" y="282" width="341" height="3.6" fill="url(#g42)"/><rect x="1179" y="285" width="345" height="3.6" fill="url(#g43)"/><rect x="1179" y="288" width="349" height="3.6" fill="url(#g44)"/><rect x="1180" y="291" width="353" height="3.6" fill="url(#g45)"/><rect x="1180" y="294" width="357" height="3.6" fill="url(#g46)"/><rect x="1180" y="297" width="361" height="3.6" fill="url(#g47)"/><rect x="1180" y="300" width="366" height="3.6" fill="url(#g48)"/><rect x="1180" y="303" width="370" height="3.6" fill="url(#g49)"/><rect x="1180" y="306" width="374" height="3.6" fill="url(#g50)"/><rect x="1181" y="309" width="377" height="3.6" fill="url(#g51)"/><rect x="1181" y="312" width="381" height="3.6" fill="url(#g52)"/><rect x="1181" y="315" width="385" height="3.6" fill="url(#g53)"/><rect x="1181" y="318" width="389" height="3.6" fill="url(#g54)"/><rect x="1182" y="321" width="392" height="3.6" fill="url(#g55)"/><rect x="1182" y="324" width="396" height="3.6" fill="url(#g56)"/><rect x="1182" y="327" width="401" height="3.6" fill="url(#g57)"/><rect x="1182" y="330" width="405" height="3.6" fill="url(#g58)"/><rect x="1183" y="333" width="408" height="3.6" fill="url(#g59)"/><rect x="1183" y="336" width="411" height="3.6" fill="url(#g60)"/><rect x="1183" y="339" width="415" height="3.6" fill="url(#g61)"/><rect x="1184" y="342" width="418" height="3.6" fill="url(#g62)"/><rect x="1184" y="345" width="422" height="3.6" fill="url(#g63)"/><rect x="1185" y="348" width="425" height="3.6" fill="url(#g64)"/><rect x="1185" y="351" width="429" height="3.6" fill="url(#g65)"/><rect x="1186" y="354" width="432" height="3.6" fill="url(#g66)"/><rect x="1186" y="357" width="436" height="3.6" fill="url(#g67)"/><rect x="1187" y="360" width="439" height="3.6" fill="url(#g68)"/><rect x="1187" y="363" width="443" height="3.6" fill="url(#g69)"/><rect x="1188" y="366" width="446" height="3.6" fill="url(#g70)"/><rect x="1189" y="369" width="449" height="3.6" fill="url(#g71)"/><rect x="1189" y="372" width="453" height="3.6" fill="url(#g72)"/><rect x="1190" y="375" width="456" height="3.6" fill="url(#g73)"/><rect x="1190" y="378" width="460" height="3.6" fill="url(#g74)"/><rect x="1191" y="381" width="463" height="3.6" fill="url(#g75)"/><rect x="1191" y="384" width="467" height="3.6" fill="url(#g76)"/><rect x="1192" y="387" width="470" height="3.6" fill="url(#g77)"/><rect x="1193" y="390" width="474" height="3.6" fill="url(#g78)"/><rect x="1193" y="393" width="478" height="3.6" fill="url(#g79)"/><rect x="1194" y="396" width="481" height="3.6" fill="url(#g80)"/><rect x="1195" y="399" width="484" height="3.6" fill="url(#g81)"/><rect x="1196" y="402" width="488" height="3.6" fill="url(#g82)"/><rect x="1196" y="405" width="492" height="3.6" fill="url(#g83)"/><rect x="1197" y="408" width="495" height="3.6" fill="url(#g84)"/><rect x="1198" y="411" width="498" height="3.6" fill="url(#g85)"/><rect x="1199" y="414" width="502" height="3.6" fill="url(#g86)"/><rect x="1200" y="417" width="505" height="3.6" fill="url(#g87)"/><rect x="1201" y="420" width="509" height="3.6" fill="url(#g88)"/><rect x="1201" y="423" width="513" height="3.6" fill="url(#g89)"/><rect x="1202" y="426" width="517" height="3.6" fill="url(#g90)"/><rect x="1203" y="429" width="520" height="3.6" fill="url(#g91)"/><rect x="1204" y="432" width="523" height="3.6" fill="url(#g92)"/><rect x="1205" y="435" width="526" height="3.6" fill="url(#g93)"/><rect x="1206" y="438" width="530" height="3.6" fill="url(#g94)"/><rect x="1207" y="441" width="533" height="3.6" fill="url(#g95)"/><rect x="1208" y="444" width="536" height="3.6" fill="url(#g96)"/><rect x="1209" y="447" width="539" height="3.6" fill="url(#g97)"/><rect x="1209" y="450" width="543" height="3.6" fill="url(#g98)"/><rect x="1210" y="453" width="546" height="3.6" fill="url(#g99)"/><rect x="1211" y="456" width="549" height="3.6" fill="url(#g100)"/><rect x="1212" y="459" width="552" height="3.6" fill="url(#g101)"/><rect x="1213" y="462" width="555" height="3.6" fill="url(#g102)"/><rect x="1214" y="465" width="558" height="3.6" fill="url(#g103)"/><rect x="1215" y="468" width="561" height="3.6" fill="url(#g104)"/><rect x="1216" y="471" width="564" height="3.6" fill="url(#g105)"/><rect x="1217" y="474" width="567" height="3.6" fill="url(#g106)"/><rect x="1218" y="477" width="570" height="3.6" fill="url(#g107)"/><rect x="1220" y="480" width="572" height="3.6" fill="url(#g108)"/><rect x="1221" y="483" width="575" height="3.6" fill="url(#g109)"/><rect x="1222" y="486" width="578" height="3.6" fill="url(#g110)"/><rect x="1223" y="489" width="582" height="3.6" fill="url(#g111)"/><rect x="1224" y="492" width="589" height="3.6" fill="url(#g112)"/><rect x="1225" y="495" width="586" height="3.6" fill="url(#g113)"/><rect x="1227" y="498" width="576" height="3.6" fill="url(#g114)"/><rect x="1228" y="501" width="566" height="3.6" fill="url(#g115)"/><rect x="1229" y="504" width="557" height="3.6" fill="url(#g116)"/><rect x="1230" y="507" width="547" height="3.6" fill="url(#g117)"/><rect x="1232" y="510" width="537" height="3.6" fill="url(#g118)"/><rect x="1233" y="513" width="527" height="3.6" fill="url(#g119)"/><rect x="1234" y="516" width="518" height="3.6" fill="url(#g120)"/><rect x="1235" y="519" width="508" height="3.6" fill="url(#g121)"/><rect x="1237" y="522" width="498" height="3.6" fill="url(#g122)"/><rect x="1238" y="525" width="488" height="3.6" fill="url(#g123)"/><rect x="1239" y="528" width="479" height="3.6" fill="url(#g124)"/><rect x="1241" y="531" width="468" height="3.6" fill="url(#g125)"/><rect x="1242" y="534" width="459" height="3.6" fill="url(#g126)"/><rect x="1243" y="537" width="449" height="3.6" fill="url(#g127)"/><rect x="1245" y="540" width="439" height="3.6" fill="url(#g128)"/><rect x="1246" y="543" width="429" height="3.6" fill="url(#g129)"/><rect x="1248" y="546" width="419" height="3.6" fill="url(#g130)"/><rect x="1249" y="549" width="410" height="3.6" fill="url(#g131)"/><rect x="1251" y="552" width="399" height="3.6" fill="url(#g132)"/><rect x="1252" y="555" width="390" height="3.6" fill="url(#g133)"/><rect x="1254" y="558" width="379" height="3.6" fill="url(#g134)"/><rect x="1255" y="561" width="370" height="3.6" fill="url(#g135)"/><rect x="1257" y="564" width="359" height="3.6" fill="url(#g136)"/><rect x="1258" y="567" width="350" height="3.6" fill="url(#g137)"/><rect x="1260" y="570" width="339" height="3.6" fill="url(#g138)"/><rect x="1261" y="573" width="330" height="3.6" fill="url(#g139)"/><rect x="1263" y="576" width="319" height="3.6" fill="url(#g140)"/><rect x="1265" y="579" width="309" height="3.6" fill="url(#g141)"/><rect x="1266" y="582" width="299" height="3.6" fill="url(#g142)"/><rect x="1268" y="585" width="289" height="3.6" fill="url(#g143)"/><rect x="1270" y="588" width="279" height="3.6" fill="url(#g144)"/><rect x="1272" y="591" width="268" height="3.6" fill="url(#g145)"/><rect x="1273" y="594" width="259" height="3.6" fill="url(#g146)"/><rect x="1275" y="597" width="248" height="3.6" fill="url(#g147)"/><rect x="1277" y="600" width="238" height="3.6" fill="url(#g148)"/><rect x="1278" y="603" width="228" height="3.6" fill="url(#g149)"/><rect x="1280" y="606" width="218" height="3.6" fill="url(#g150)"/><rect x="1282" y="609" width="207" height="3.6" fill="url(#g151)"/><rect x="1284" y="612" width="197" height="3.6" fill="url(#g152)"/><rect x="1286" y="615" width="186" height="3.6" fill="url(#g153)"/><rect x="1288" y="618" width="176" height="3.6" fill="url(#g154)"/><rect x="1289" y="621" width="166" height="3.6" fill="url(#g155)"/><rect x="1291" y="624" width="156" height="3.6" fill="url(#g156)"/><rect x="1293" y="627" width="145" height="3.6" fill="url(#g157)"/><rect x="1295" y="630" width="135" height="3.6" fill="url(#g158)"/><rect x="1297" y="633" width="125" height="3.6" fill="url(#g159)"/><rect x="1299" y="636" width="114" height="3.6" fill="url(#g160)"/><rect x="1301" y="639" width="104" height="3.6" fill="url(#g161)"/><rect x="1303" y="642" width="93" height="3.6" fill="url(#g162)"/><rect x="1305" y="645" width="83" height="3.6" fill="url(#g163)"/><rect x="1307" y="648" width="72" height="3.6" fill="url(#g164)"/><rect x="1309" y="651" width="62" height="3.6" fill="url(#g165)"/><rect x="1311" y="654" width="51" height="3.6" fill="url(#g166)"/><rect x="1313" y="657" width="41" height="3.6" fill="url(#g167)"/><rect x="1318" y="660" width="27" height="3.6" fill="url(#g168)"/></g><path d="M1100 100H1920V720H1100ZM1735.7 465.2L1440.8 295.9L1310.6 634.5Z" fill="#000" fill-opacity=".4" fill-rule="evenodd"/></g><rect x="1180.7" y="143.7" width="729.3" height="528.4" fill="none" stroke="#a4a4a4" stroke-width="1.5"/><path d="M1174.6 672.6h6M1180.5 672.5v6.3" stroke="#e4e4e4" stroke-width="1.5"/><path d="M1174.6 609.9h6M1267.2 672.5v6.3" stroke="#e4e4e4" stroke-width="1.5"/><path d="M1174.6 547.2h6M1354.0 672.5v6.3" stroke="#e4e4e4" stroke-width="1.5"/><path d="M1174.6 484.5h6M1440.8 672.5v6.3" stroke="#e4e4e4" stroke-width="1.5"/><path d="M1174.6 421.8h6M1527.5 672.5v6.3" stroke="#e4e4e4" stroke-width="1.5"/><path d="M1174.6 359.1h6M1614.2 672.5v6.3" stroke="#e4e4e4" stroke-width="1.5"/><path d="M1174.6 296.4h6M1701.0 672.5v6.3" stroke="#e4e4e4" stroke-width="1.5"/><path d="M1174.6 233.7h6M1787.8 672.5v6.3" stroke="#e4e4e4" stroke-width="1.5"/><path d="M1174.6 171.0h6M1874.5 672.5v6.3" stroke="#e4e4e4" stroke-width="1.5"/><rect x="1594" y="630" width="312" height="29" fill="#333"/><g fill="none" stroke="#fff" stroke-width="1.6"><rect x="1435.9" y="355.3" width="17.4" height="17.4"/><rect x="1465.8" y="393.8" width="17.4" height="17.4"/><rect x="1399.7" y="435.3" width="17.4" height="17.4"/><rect x="1496.8" y="352.3" width="17.4" height="17.4"/><rect x="1559.8" y="365.7" width="17.4" height="17.4"/><rect x="1582.7" y="386.2" width="17.4" height="17.4"/><rect x="1615.8" y="407.2" width="17.4" height="17.4"/><rect x="1518.9" y="433.7" width="17.4" height="17.4"/><rect x="1500.3" y="438.3" width="17.4" height="17.4"/><rect x="1637.8" y="463.4" width="17.4" height="17.4"/><rect x="1572.2" y="466.3" width="17.4" height="17.4"/><rect x="1495.9" y="508.2" width="17.4" height="17.4"/><rect x="1351.9" y="493.2" width="17.4" height="17.4"/><rect x="1387.9" y="496.1" width="17.4" height="17.4"/><rect x="1404.9" y="503.3" width="17.4" height="17.4"/><rect x="1423.9" y="524.3" width="17.4" height="17.4"/><rect x="1359.2" y="542.5" width="17.4" height="17.4"/><rect x="1338.7" y="574.5" width="17.4" height="17.4"/></g><rect x="1442.8" y="456.9" width="16.6" height="16.6" fill="none" stroke="#000" stroke-width="2.2"/><g stroke="#111" stroke-width="1.2"><circle cx="1457.0" cy="345.0" r="5.6" fill="#469a47"/><circle cx="1482.7" cy="397.0" r="5.6" fill="#59713f"/><circle cx="1401.0" cy="450.0" r="5.6" fill="#66bfad"/><circle cx="1516.5" cy="351.8" r="5.6" fill="#a2c03e"/><circle cx="1577.9" cy="373.0" r="5.6" fill="#f0cd20"/><circle cx="1602.8" cy="386.0" r="5.6" fill="#e8a42c"/><circle cx="1638.9" cy="408.4" r="5.6" fill="#da7a28"/><circle cx="1535.5" cy="436.9" r="5.6" fill="#765040"/><circle cx="1503.9" cy="445.5" r="5.6" fill="#c99a85"/><circle cx="1661.0" cy="457.0" r="5.6" fill="#b22a38"/><circle cx="1576.0" cy="467.8" r="5.6" fill="#c4525f"/><circle cx="1482.4" cy="510.8" r="5.6" fill="#bd5696"/><circle cx="1361.3" cy="499.1" r="5.6" fill="#0085a3"/><circle cx="1377.6" cy="506.1" r="5.6" fill="#5b7fa5"/><circle cx="1393.1" cy="514.0" r="5.6" fill="#8784b5"/><circle cx="1404.0" cy="532.8" r="5.6" fill="#5c3a6e"/><circle cx="1350.9" cy="544.9" r="5.6" fill="#485ca8"/><circle cx="1330.4" cy="569.9" r="5.6" fill="#2b3a9c"/><circle cx="1430.2" cy="499.0" r="5.6" fill="#000000"/><circle cx="1440" cy="463" r="5.7" fill="#999" stroke-width="1.5"/><circle cx="1440.5" cy="463.6" r="5.7" fill="#bbb" stroke-width="1.5"/><circle cx="1441" cy="464.1" r="5.7" fill="#ddd" stroke-width="1.5"/><circle cx="1441.4" cy="464.6" r="5.6" fill="#fff" stroke-width="1.4"/></g><rect x="1687" y="147.8" width="220" height="163.4" fill="#2c2c2c"/><rect x="1690" y="151" width="213.2" height="157" fill="url(#in1)"/><rect x="1690" y="151" width="213.2" height="157" fill="url(#in2)"/><path d="M1690 151H1825.5L1768.3 308H1690Z" fill="#001030" fill-opacity=".42"/><rect x="1690" y="151" width="213.2" height="157" fill="none" stroke="#909090" stroke-width="1.6"/><rect x="1787.5" y="221.6" width="18.3" height="17" fill="none" stroke="#fff" stroke-width="1.6"/><circle cx="1798.4" cy="212" r="6.1" fill="#00869c" stroke="#111" stroke-width="1.2"/><circle cx="1878" cy="247.5" r="5.7" fill="#6080a8" stroke="#111" stroke-width="1.2"/></svg>
<span class="t" style="left:1626.60px;top:634.77px;font-size:21.66px;line-height:21.66px;color:#f4f4f4;transform:scaleX(1.0545);">RGB Triplet: 0, 133, 163</span>
<div class="b" style="left:466.00px;top:724.60px;width:657.00px;height:1.60px;background:#6e6e6e;"></div>
<div class="b" style="left:373.30px;top:728.00px;width:1546.70px;height:30.00px;background:linear-gradient(#353535 0%,#2d2d2d 47%,#1b1b1b 53%,#111 82%,#151515 100%);"></div>
<div class="b" style="left:373.30px;top:728.00px;width:12.60px;height:30.00px;background:#000;"></div>
<div class="b" style="left:373.30px;top:758.00px;width:1546.70px;height:28.00px;background:#404040;"></div>
<div class="b" style="left:373.30px;top:758.00px;width:12.60px;height:28.00px;background:#222;"></div>
<div class="b" style="left:373.30px;top:786.00px;width:1546.70px;height:28.00px;background:#828282;"></div>
<div class="b" style="left:373.30px;top:786.00px;width:12.60px;height:28.00px;background:#303030;"></div>
<div class="b" style="left:373.30px;top:814.00px;width:1546.70px;height:28.00px;background:#404040;"></div>
<div class="b" style="left:373.30px;top:814.00px;width:12.60px;height:28.00px;background:#222;"></div>
<div class="b" style="left:373.30px;top:842.00px;width:1546.70px;height:29.00px;background:#828282;"></div>
<div class="b" style="left:373.30px;top:842.00px;width:12.60px;height:29.00px;background:#303030;"></div>
<div class="b" style="left:373.30px;top:871.00px;width:1546.70px;height:28.00px;background:#404040;"></div>
<div class="b" style="left:373.30px;top:871.00px;width:12.60px;height:28.00px;background:#222;"></div>
<div class="b" style="left:373.30px;top:899.00px;width:1546.70px;height:28.00px;background:#828282;"></div>
<div class="b" style="left:373.30px;top:899.00px;width:12.60px;height:28.00px;background:#303030;"></div>
<div class="b" style="left:373.30px;top:927.00px;width:1546.70px;height:28.00px;background:#404040;"></div>
<div class="b" style="left:373.30px;top:927.00px;width:12.60px;height:28.00px;background:#222;"></div>
<div class="b" style="left:0.00px;top:720.00px;width:1920.00px;height:240.00px;overflow:hidden;background:none;"><div class="b" style="left:0;top:-720px;width:1920px;height:1048px"><span class="t" style="left:389.30px;top:763.73px;font-size:18.75px;line-height:18.75px;color:#fff;transform:scaleX(0.7500);">x: CIE31</span><span class="t" style="left:389.30px;top:791.93px;font-size:18.75px;line-height:18.75px;color:#f2f2f2;transform:scaleX(0.7500);">y: CIE31</span><span class="t" style="left:389.30px;top:820.13px;font-size:18.75px;line-height:18.75px;color:#fff;transform:scaleX(0.7500);">Y</span><span class="t" style="left:389.30px;top:848.33px;font-size:18.75px;line-height:18.75px;color:#f2f2f2;transform:scaleX(0.7500);">Target x:CIE31</span><span class="t" style="left:389.30px;top:876.53px;font-size:18.75px;line-height:18.75px;color:#fff;transform:scaleX(0.7500);">Target y:CIE31</span><span class="t" style="left:389.30px;top:904.73px;font-size:18.75px;line-height:18.75px;color:#f2f2f2;transform:scaleX(0.7500);">Target Y</span><span class="t" style="left:389.30px;top:932.93px;font-size:18.75px;line-height:18.75px;color:#fff;transform:scaleX(0.7500);">ΔE 2000</span><span class="t" style="left:492.70px;top:736.31px;font-size:15.70px;line-height:15.70px;color:#fff;transform:scaleX(0.8560);">Black</span><span class="t" style="left:492.70px;top:763.73px;font-size:18.75px;line-height:18.75px;color:#fff;transform:scaleX(0.7500);">0,29</span><span class="t" style="left:492.70px;top:791.93px;font-size:18.75px;line-height:18.75px;color:#f2f2f2;transform:scaleX(0.7500);">0,27</span><span class="t" style="left:492.70px;top:820.13px;font-size:18.75px;line-height:18.75px;color:#fff;transform:scaleX(0.7500);">0,19</span><span class="t" style="left:492.70px;top:848.33px;font-size:18.75px;line-height:18.75px;color:#f2f2f2;transform:scaleX(0.7500);">0,31</span><span class="t" style="left:492.70px;top:876.53px;font-size:18.75px;line-height:18.75px;color:#fff;transform:scaleX(0.7500);">0,33</span><span class="t" style="left:492.70px;top:904.73px;font-size:18.75px;line-height:18.75px;color:#f2f2f2;transform:scaleX(0.7500);">0,00</span><span class="t" style="left:492.70px;top:932.93px;font-size:18.75px;line-height:18.75px;color:#fff;transform:scaleX(0.7500);">1,64</span><span class="t" style="left:532.30px;top:736.31px;font-size:15.70px;line-height:15.70px;color:#fff;transform:scaleX(0.8560);">Gray 35</span><span class="t" style="left:532.30px;top:763.73px;font-size:18.75px;line-height:18.75px;color:#fff;transform:scaleX(0.7500);">0,30</span><span class="t" style="left:532.30px;top:791.93px;font-size:18.75px;line-height:18.75px;color:#f2f2f2;transform:scaleX(0.7500);">0,33</span><span class="t" style="left:532.30px;top:820.13px;font-size:18.75px;line-height:18.75px;color:#fff;transform:scaleX(0.7500);">44,36</span><span class="t" style="left:532.30px;top:848.33px;font-size:18.75px;line-height:18.75px;color:#f2f2f2;transform:scaleX(0.7500);">0,31</span><span class="t" style="left:532.30px;top:876.53px;font-size:18.75px;line-height:18.75px;color:#fff;transform:scaleX(0.7500);">0,33</span><span class="t" style="left:532.30px;top:904.73px;font-size:18.75px;line-height:18.75px;color:#f2f2f2;transform:scaleX(0.7500);">42,77</span><span class="t" style="left:532.30px;top:932.93px;font-size:18.75px;line-height:18.75px;color:#fff;transform:scaleX(0.7500);">8,34</span><span class="t" style="left:586.70px;top:736.31px;font-size:15.70px;line-height:15.70px;color:#fff;transform:scaleX(0.8560);">Gray 50</span><span class="t" style="left:586.70px;top:763.73px;font-size:18.75px;line-height:18.75px;color:#fff;transform:scaleX(0.7500);">0,30</span><span class="t" style="left:586.70px;top:791.93px;font-size:18.75px;line-height:18.75px;color:#f2f2f2;transform:scaleX(0.7500);">0,33</span><span class="t" style="left:586.70px;top:820.13px;font-size:18.75px;line-height:18.75px;color:#fff;transform:scaleX(0.7500);">64,25</span><span class="t" style="left:586.70px;top:848.33px;font-size:18.75px;line-height:18.75px;color:#f2f2f2;transform:scaleX(0.7500);">0,31</span><span class="t" style="left:586.70px;top:876.53px;font-size:18.75px;line-height:18.75px;color:#fff;transform:scaleX(0.7500);">0,33</span><span class="t" style="left:586.70px;top:904.73px;font-size:18.75px;line-height:18.75px;color:#f2f2f2;transform:scaleX(0.7500);">61,42</span><span class="t" style="left:586.70px;top:932.93px;font-size:18.75px;line-height:18.75px;color:#fff;transform:scaleX(0.7500);">7,07</span><span class="t" style="left:640.70px;top:736.31px;font-size:15.70px;line-height:15.70px;color:#fff;transform:scaleX(0.8560);">Gray 65</span><span class="t" style="left:640.70px;top:763.73px;font-size:18.75px;line-height:18.75px;color:#fff;transform:scaleX(0.7500);">0,30</span><span class="t" style="left:640.70px;top:791.93px;font-size:18.75px;line-height:18.75px;color:#f2f2f2;transform:scaleX(0.7500);">0,33</span><span class="t" style="left:640.70px;top:820.13px;font-size:18.75px;line-height:18.75px;color:#fff;transform:scaleX(0.7500);">83,07</span><span class="t" style="left:640.70px;top:848.33px;font-size:18.75px;line-height:18.75px;color:#f2f2f2;transform:scaleX(0.7500);">0,31</span><span class="t" style="left:640.70px;top:876.53px;font-size:18.75px;line-height:18.75px;color:#fff;transform:scaleX(0.7500);">0,33</span><span class="t" style="left:640.70px;top:904.73px;font-size:18.75px;line-height:18.75px;color:#f2f2f2;transform:scaleX(0.7500);">79,75</span><span class="t" style="left:640.70px;top:932.93px;font-size:18.75px;line-height:18.75px;color:#fff;transform:scaleX(0.7500);">6,51</span><span class="t" style="left:695.00px;top:736.31px;font-size:15.70px;line-height:15.70px;color:#fff;transform:scaleX(0.8560);">Gray 80</span><span class="t" style="left:695.00px;top:763.73px;font-size:18.75px;line-height:18.75px;color:#fff;transform:scaleX(0.7500);">0,30</span><span class="t" style="left:695.00px;top:791.93px;font-size:18.75px;line-height:18.75px;color:#f2f2f2;transform:scaleX(0.7500);">0,33</span><span class="t" style="left:695.00px;top:820.13px;font-size:18.75px;line-height:18.75px;color:#fff;transform:scaleX(0.7500);">99,74</span><span class="t" style="left:695.00px;top:848.33px;font-size:18.75px;line-height:18.75px;color:#f2f2f2;transform:scaleX(0.7500);">0,31</span><span class="t" style="left:695.00px;top:876.53px;font-size:18.75px;line-height:18.75px;color:#fff;transform:scaleX(0.7500);">0,33</span><span class="t" style="left:695.00px;top:904.73px;font-size:18.75px;line-height:18.75px;color:#f2f2f2;transform:scaleX(0.7500);">98,98</span><span class="t" style="left:695.00px;top:932.93px;font-size:18.75px;line-height:18.75px;color:#fff;transform:scaleX(0.7500);">8,81</span><span class="t" style="left:749.70px;top:736.31px;font-size:15.70px;line-height:15.70px;color:#fff;transform:scaleX(0.8560);">White</span><span class="t" style="left:749.70px;top:763.73px;font-size:18.75px;line-height:18.75px;color:#fff;transform:scaleX(0.7500);">0,30</span><span class="t" style="left:749.70px;top:791.93px;font-size:18.75px;line-height:18.75px;color:#f2f2f2;transform:scaleX(0.7500);">0,33</span><span class="t" style="left:749.70px;top:820.13px;font-size:18.75px;line-height:18.75px;color:#fff;transform:scaleX(0.7500);">125,09</span><span class="t" style="left:749.70px;top:848.33px;font-size:18.75px;line-height:18.75px;color:#f2f2f2;transform:scaleX(0.7500);">0,31</span><span class="t" style="left:749.70px;top:876.53px;font-size:18.75px;line-height:18.75px;color:#fff;transform:scaleX(0.7500);">0,33</span><span class="t" style="left:749.70px;top:904.73px;font-size:18.75px;line-height:18.75px;color:#f2f2f2;transform:scaleX(0.7500);">125,09</span><span class="t" style="left:749.70px;top:932.93px;font-size:18.75px;line-height:18.75px;color:#fff;transform:scaleX(0.7500);">8,10</span><span class="t" style="left:802.00px;top:736.31px;font-size:15.70px;line-height:15.70px;color:#fff;transform:scaleX(0.8560);">Dark Skin</span><span class="t" style="left:802.00px;top:763.73px;font-size:18.75px;line-height:18.75px;color:#fff;transform:scaleX(0.7500);">0,41</span><span class="t" style="left:802.00px;top:791.93px;font-size:18.75px;line-height:18.75px;color:#f2f2f2;transform:scaleX(0.7500);">0,37</span><span class="t" style="left:802.00px;top:820.13px;font-size:18.75px;line-height:18.75px;color:#fff;transform:scaleX(0.7500);">12,31</span><span class="t" style="left:802.00px;top:848.33px;font-size:18.75px;line-height:18.75px;color:#f2f2f2;transform:scaleX(0.7500);">0,40</span><span class="t" style="left:802.00px;top:876.53px;font-size:18.75px;line-height:18.75px;color:#fff;transform:scaleX(0.7500);">0,36</span><span class="t" style="left:802.00px;top:904.73px;font-size:18.75px;line-height:18.75px;color:#f2f2f2;transform:scaleX(0.7500);">12,60</span><span class="t" style="left:802.00px;top:932.93px;font-size:18.75px;line-height:18.75px;color:#fff;transform:scaleX(0.7500);">1,81</span><span class="t" style="left:866.30px;top:736.31px;font-size:15.70px;line-height:15.70px;color:#fff;transform:scaleX(0.8560);">Light Skin</span><span class="t" style="left:866.30px;top:763.73px;font-size:18.75px;line-height:18.75px;color:#fff;transform:scaleX(0.7500);">0,37</span><span class="t" style="left:866.30px;top:791.93px;font-size:18.75px;line-height:18.75px;color:#f2f2f2;transform:scaleX(0.7500);">0,36</span><span class="t" style="left:866.30px;top:820.13px;font-size:18.75px;line-height:18.75px;color:#fff;transform:scaleX(0.7500);">45,20</span><span class="t" style="left:866.30px;top:848.33px;font-size:18.75px;line-height:18.75px;color:#f2f2f2;transform:scaleX(0.7500);">0,38</span><span class="t" style="left:866.30px;top:876.53px;font-size:18.75px;line-height:18.75px;color:#fff;transform:scaleX(0.7500);">0,36</span><span class="t" style="left:866.30px;top:904.73px;font-size:18.75px;line-height:18.75px;color:#f2f2f2;transform:scaleX(0.7500);">43,65</span><span class="t" style="left:866.30px;top:932.93px;font-size:18.75px;line-height:18.75px;color:#fff;transform:scaleX(0.7500);">3,06</span><span class="t" style="left:932.00px;top:736.31px;font-size:15.70px;line-height:15.70px;color:#fff;transform:scaleX(0.8560);">Blue Sky</span><span class="t" style="left:932.00px;top:763.73px;font-size:18.75px;line-height:18.75px;color:#fff;transform:scaleX(0.7500);">0,23</span><span class="t" style="left:932.00px;top:791.93px;font-size:18.75px;line-height:18.75px;color:#f2f2f2;transform:scaleX(0.7500);">0,26</span><span class="t" style="left:932.00px;top:820.13px;font-size:18.75px;line-height:18.75px;color:#fff;transform:scaleX(0.7500);">26,95</span><span class="t" style="left:932.00px;top:848.33px;font-size:18.75px;line-height:18.75px;color:#f2f2f2;transform:scaleX(0.7500);">0,25</span><span class="t" style="left:932.00px;top:876.53px;font-size:18.75px;line-height:18.75px;color:#fff;transform:scaleX(0.7500);">0,27</span><span class="t" style="left:932.00px;top:904.73px;font-size:18.75px;line-height:18.75px;color:#f2f2f2;transform:scaleX(0.7500);">23,39</span><span class="t" style="left:932.00px;top:932.93px;font-size:18.75px;line-height:18.75px;color:#fff;transform:scaleX(0.7500);">7,34</span><span class="t" style="left:990.70px;top:736.31px;font-size:15.70px;line-height:15.70px;color:#fff;transform:scaleX(0.8560);">Foliage</span><span class="t" style="left:990.70px;top:763.73px;font-size:18.75px;line-height:18.75px;color:#fff;transform:scaleX(0.7500);">0,35</span><span class="t" style="left:990.70px;top:791.93px;font-size:18.75px;line-height:18.75px;color:#f2f2f2;transform:scaleX(0.7500);">0,44</span><span class="t" style="left:990.70px;top:820.13px;font-size:18.75px;line-height:18.75px;color:#fff;transform:scaleX(0.7500);">15,47</span><span class="t" style="left:990.70px;top:848.33px;font-size:18.75px;line-height:18.75px;color:#f2f2f2;transform:scaleX(0.7500);">0,34</span><span class="t" style="left:990.70px;top:876.53px;font-size:18.75px;line-height:18.75px;color:#fff;transform:scaleX(0.7500);">0,43</span><span class="t" style="left:990.70px;top:904.73px;font-size:18.75px;line-height:18.75px;color:#f2f2f2;transform:scaleX(0.7500);">16,30</span><span class="t" style="left:990.70px;top:932.93px;font-size:18.75px;line-height:18.75px;color:#fff;transform:scaleX(0.7500);">1,63</span><span class="t" style="left:1041.00px;top:736.31px;font-size:15.70px;line-height:15.70px;color:#fff;transform:scaleX(0.8560);">Blue Flower</span><span class="t" style="left:1041.00px;top:763.73px;font-size:18.75px;line-height:18.75px;color:#fff;transform:scaleX(0.7500);">0,24</span><span class="t" style="left:1041.00px;top:791.93px;font-size:18.75px;line-height:18.75px;color:#f2f2f2;transform:scaleX(0.7500);">0,25</span><span class="t" style="left:1041.00px;top:820.13px;font-size:18.75px;line-height:18.75px;color:#fff;transform:scaleX(0.7500);">34,75</span><span class="t" style="left:1041.00px;top:848.33px;font-size:18.75px;line-height:18.75px;color:#f2f2f2;transform:scaleX(0.7500);">0,27</span><span class="t" style="left:1041.00px;top:876.53px;font-size:18.75px;line-height:18.75px;color:#fff;transform:scaleX(0.7500);">0,25</span><span class="t" style="left:1041.00px;top:904.73px;font-size:18.75px;line-height:18.75px;color:#f2f2f2;transform:scaleX(0.7500);">29,17</span><span class="t" style="left:1041.00px;top:932.93px;font-size:18.75px;line-height:18.75px;color:#fff;transform:scaleX(0.7500);">9,66</span><span class="t" style="left:1120.70px;top:736.31px;font-size:15.70px;line-height:15.70px;color:#fff;transform:scaleX(0.8560);">Bluish Green</span><span class="t" style="left:1120.70px;top:763.73px;font-size:18.75px;line-height:18.75px;color:#fff;transform:scaleX(0.7500);">0,25</span><span class="t" style="left:1120.70px;top:791.93px;font-size:18.75px;line-height:18.75px;color:#f2f2f2;transform:scaleX(0.7500);">0,35</span><span class="t" style="left:1120.70px;top:820.13px;font-size:18.75px;line-height:18.75px;color:#fff;transform:scaleX(0.7500);">57,12</span><span class="t" style="left:1120.70px;top:848.33px;font-size:18.75px;line-height:18.75px;color:#f2f2f2;transform:scaleX(0.7500);">0,26</span><span class="t" style="left:1120.70px;top:876.53px;font-size:18.75px;line-height:18.75px;color:#fff;transform:scaleX(0.7500);">0,36</span><span class="t" style="left:1120.70px;top:904.73px;font-size:18.75px;line-height:18.75px;color:#f2f2f2;transform:scaleX(0.7500);">52,38</span><span class="t" style="left:1120.70px;top:932.93px;font-size:18.75px;line-height:18.75px;color:#fff;transform:scaleX(0.7500);">3,30</span><span class="t" style="left:1205.70px;top:736.31px;font-size:15.70px;line-height:15.70px;color:#fff;transform:scaleX(0.8560);">Orange</span><span class="t" style="left:1205.70px;top:763.73px;font-size:18.75px;line-height:18.75px;color:#fff;transform:scaleX(0.7500);">0,53</span><span class="t" style="left:1205.70px;top:791.93px;font-size:18.75px;line-height:18.75px;color:#f2f2f2;transform:scaleX(0.7500);">0,42</span><span class="t" style="left:1205.70px;top:820.13px;font-size:18.75px;line-height:18.75px;color:#fff;transform:scaleX(0.7500);">37,70</span><span class="t" style="left:1205.70px;top:848.33px;font-size:18.75px;line-height:18.75px;color:#f2f2f2;transform:scaleX(0.7500);">0,51</span><span class="t" style="left:1205.70px;top:876.53px;font-size:18.75px;line-height:18.75px;color:#fff;transform:scaleX(0.7500);">0,41</span><span class="t" style="left:1205.70px;top:904.73px;font-size:18.75px;line-height:18.75px;color:#f2f2f2;transform:scaleX(0.7500);">35,46</span><span class="t" style="left:1205.70px;top:932.93px;font-size:18.75px;line-height:18.75px;color:#fff;transform:scaleX(0.7500);">3,91</span><span class="t" style="left:1257.70px;top:736.31px;font-size:15.70px;line-height:15.70px;color:#fff;transform:scaleX(0.8560);">Purplish Blue</span><span class="t" style="left:1257.70px;top:763.73px;font-size:18.75px;line-height:18.75px;color:#fff;transform:scaleX(0.7500);">0,20</span><span class="t" style="left:1257.70px;top:791.93px;font-size:18.75px;line-height:18.75px;color:#f2f2f2;transform:scaleX(0.7500);">0,20</span><span class="t" style="left:1257.70px;top:820.13px;font-size:18.75px;line-height:18.75px;color:#fff;transform:scaleX(0.7500);">19,98</span><span class="t" style="left:1257.70px;top:848.33px;font-size:18.75px;line-height:18.75px;color:#f2f2f2;transform:scaleX(0.7500);">0,22</span><span class="t" style="left:1257.70px;top:876.53px;font-size:18.75px;line-height:18.75px;color:#fff;transform:scaleX(0.7500);">0,19</span><span class="t" style="left:1257.70px;top:904.73px;font-size:18.75px;line-height:18.75px;color:#f2f2f2;transform:scaleX(0.7500);">14,70</span><span class="t" style="left:1257.70px;top:932.93px;font-size:18.75px;line-height:18.75px;color:#fff;transform:scaleX(0.7500);">11,27</span><span class="t" style="left:1345.00px;top:736.31px;font-size:15.70px;line-height:15.70px;color:#fff;transform:scaleX(0.8560);">Moderate Red</span><span class="t" style="left:1345.00px;top:763.73px;font-size:18.75px;line-height:18.75px;color:#fff;transform:scaleX(0.7500);">0,46</span><span class="t" style="left:1345.00px;top:791.93px;font-size:18.75px;line-height:18.75px;color:#f2f2f2;transform:scaleX(0.7500);">0,32</span><span class="t" style="left:1345.00px;top:820.13px;font-size:18.75px;line-height:18.75px;color:#fff;transform:scaleX(0.7500);">26,13</span><span class="t" style="left:1345.00px;top:848.33px;font-size:18.75px;line-height:18.75px;color:#f2f2f2;transform:scaleX(0.7500);">0,46</span><span class="t" style="left:1345.00px;top:876.53px;font-size:18.75px;line-height:18.75px;color:#fff;transform:scaleX(0.7500);">0,31</span><span class="t" style="left:1345.00px;top:904.73px;font-size:18.75px;line-height:18.75px;color:#f2f2f2;transform:scaleX(0.7500);">23,36</span><span class="t" style="left:1345.00px;top:932.93px;font-size:18.75px;line-height:18.75px;color:#fff;transform:scaleX(0.7500);">3,58</span><span class="t" style="left:1439.70px;top:736.31px;font-size:15.70px;line-height:15.70px;color:#fff;transform:scaleX(0.8560);">Purple</span><span class="t" style="left:1439.70px;top:763.73px;font-size:18.75px;line-height:18.75px;color:#fff;transform:scaleX(0.7500);">0,26</span><span class="t" style="left:1439.70px;top:791.93px;font-size:18.75px;line-height:18.75px;color:#f2f2f2;transform:scaleX(0.7500);">0,22</span><span class="t" style="left:1439.70px;top:820.13px;font-size:18.75px;line-height:18.75px;color:#fff;transform:scaleX(0.7500);">9,61</span><span class="t" style="left:1439.70px;top:848.33px;font-size:18.75px;line-height:18.75px;color:#f2f2f2;transform:scaleX(0.7500);">0,29</span><span class="t" style="left:1439.70px;top:876.53px;font-size:18.75px;line-height:18.75px;color:#fff;transform:scaleX(0.7500);">0,22</span><span class="t" style="left:1439.70px;top:904.73px;font-size:18.75px;line-height:18.75px;color:#f2f2f2;transform:scaleX(0.7500);">8,35</span><span class="t" style="left:1439.70px;top:932.93px;font-size:18.75px;line-height:18.75px;color:#fff;transform:scaleX(0.7500);">6,73</span><span class="t" style="left:1486.70px;top:736.31px;font-size:15.70px;line-height:15.70px;color:#fff;transform:scaleX(0.8560);">Yellow Green</span><span class="t" style="left:1486.70px;top:763.73px;font-size:18.75px;line-height:18.75px;color:#fff;transform:scaleX(0.7500);">0,39</span><span class="t" style="left:1486.70px;top:791.93px;font-size:18.75px;line-height:18.75px;color:#f2f2f2;transform:scaleX(0.7500);">0,51</span><span class="t" style="left:1486.70px;top:820.13px;font-size:18.75px;line-height:18.75px;color:#fff;transform:scaleX(0.7500);">52,39</span><span class="t" style="left:1486.70px;top:848.33px;font-size:18.75px;line-height:18.75px;color:#f2f2f2;transform:scaleX(0.7500);">0,38</span><span class="t" style="left:1486.70px;top:876.53px;font-size:18.75px;line-height:18.75px;color:#fff;transform:scaleX(0.7500);">0,49</span><span class="t" style="left:1486.70px;top:904.73px;font-size:18.75px;line-height:18.75px;color:#f2f2f2;transform:scaleX(0.7500);">53,48</span><span class="t" style="left:1486.70px;top:932.93px;font-size:18.75px;line-height:18.75px;color:#fff;transform:scaleX(0.7500);">2,58</span><span class="t" style="left:1574.30px;top:736.31px;font-size:15.70px;line-height:15.70px;color:#fff;transform:scaleX(0.8560);">Orange Yellow</span><span class="t" style="left:1574.30px;top:763.73px;font-size:18.75px;line-height:18.75px;color:#fff;transform:scaleX(0.7500);">0,49</span><span class="t" style="left:1574.30px;top:791.93px;font-size:18.75px;line-height:18.75px;color:#f2f2f2;transform:scaleX(0.7500);">0,45</span><span class="t" style="left:1574.30px;top:820.13px;font-size:18.75px;line-height:18.75px;color:#fff;transform:scaleX(0.7500);">53,95</span><span class="t" style="left:1574.30px;top:848.33px;font-size:18.75px;line-height:18.75px;color:#f2f2f2;transform:scaleX(0.7500);">0,47</span><span class="t" style="left:1574.30px;top:876.53px;font-size:18.75px;line-height:18.75px;color:#fff;transform:scaleX(0.7500);">0,44</span><span class="t" style="left:1574.30px;top:904.73px;font-size:18.75px;line-height:18.75px;color:#f2f2f2;transform:scaleX(0.7500);">53,18</span><span class="t" style="left:1574.30px;top:932.93px;font-size:18.75px;line-height:18.75px;color:#fff;transform:scaleX(0.7500);">2,98</span><span class="t" style="left:1669.00px;top:736.31px;font-size:15.70px;line-height:15.70px;color:#fff;transform:scaleX(0.8560);">Blue</span><span class="t" style="left:1669.00px;top:763.73px;font-size:18.75px;line-height:18.75px;color:#fff;transform:scaleX(0.7500);">0,17</span><span class="t" style="left:1669.00px;top:791.93px;font-size:18.75px;line-height:18.75px;color:#f2f2f2;transform:scaleX(0.7500);">0,16</span><span class="t" style="left:1669.00px;top:820.13px;font-size:18.75px;line-height:18.75px;color:#fff;transform:scaleX(0.7500);">12,02</span><span class="t" style="left:1669.00px;top:848.33px;font-size:18.75px;line-height:18.75px;color:#f2f2f2;transform:scaleX(0.7500);">0,19</span><span class="t" style="left:1669.00px;top:876.53px;font-size:18.75px;line-height:18.75px;color:#fff;transform:scaleX(0.7500);">0,14</span><span class="t" style="left:1669.00px;top:904.73px;font-size:18.75px;line-height:18.75px;color:#f2f2f2;transform:scaleX(0.7500);">7,81</span><span class="t" style="left:1669.00px;top:932.93px;font-size:18.75px;line-height:18.75px;color:#fff;transform:scaleX(0.7500);">13,63</span><span class="t" style="left:1713.40px;top:736.31px;font-size:15.70px;line-height:15.70px;color:#fff;transform:scaleX(0.8560);">Green</span><span class="t" style="left:1713.40px;top:763.73px;font-size:18.75px;line-height:18.75px;color:#fff;transform:scaleX(0.7500);">0,32</span><span class="t" style="left:1713.40px;top:791.93px;font-size:18.75px;line-height:18.75px;color:#f2f2f2;transform:scaleX(0.7500);">0,52</span><span class="t" style="left:1713.40px;top:820.13px;font-size:18.75px;line-height:18.75px;color:#fff;transform:scaleX(0.7500);">29,94</span><span class="t" style="left:1713.40px;top:848.33px;font-size:18.75px;line-height:18.75px;color:#f2f2f2;transform:scaleX(0.7500);">0,31</span><span class="t" style="left:1713.40px;top:876.53px;font-size:18.75px;line-height:18.75px;color:#fff;transform:scaleX(0.7500);">0,49</span><span class="t" style="left:1713.40px;top:904.73px;font-size:18.75px;line-height:18.75px;color:#f2f2f2;transform:scaleX(0.7500);">28,74</span><span class="t" style="left:1713.40px;top:932.93px;font-size:18.75px;line-height:18.75px;color:#fff;transform:scaleX(0.7500);">3,59</span><span class="t" style="left:1758.20px;top:736.31px;font-size:15.70px;line-height:15.70px;color:#fff;transform:scaleX(0.8560);">Red</span><span class="t" style="left:1758.20px;top:763.73px;font-size:18.75px;line-height:18.75px;color:#fff;transform:scaleX(0.7500);">0,55</span><span class="t" style="left:1758.20px;top:791.93px;font-size:18.75px;line-height:18.75px;color:#f2f2f2;transform:scaleX(0.7500);">0,34</span><span class="t" style="left:1758.20px;top:820.13px;font-size:18.75px;line-height:18.75px;color:#fff;transform:scaleX(0.7500);">17,25</span><span class="t" style="left:1758.20px;top:848.33px;font-size:18.75px;line-height:18.75px;color:#f2f2f2;transform:scaleX(0.7500);">0,54</span><span class="t" style="left:1758.20px;top:876.53px;font-size:18.75px;line-height:18.75px;color:#fff;transform:scaleX(0.7500);">0,32</span><span class="t" style="left:1758.20px;top:904.73px;font-size:18.75px;line-height:18.75px;color:#f2f2f2;transform:scaleX(0.7500);">14,59</span><span class="t" style="left:1758.20px;top:932.93px;font-size:18.75px;line-height:18.75px;color:#fff;transform:scaleX(0.7500);">6,93</span><span class="t" style="left:1802.60px;top:736.31px;font-size:15.70px;line-height:15.70px;color:#fff;transform:scaleX(0.8560);">Yellow</span><span class="t" style="left:1802.60px;top:763.73px;font-size:18.75px;line-height:18.75px;color:#fff;transform:scaleX(0.7500);">0,46</span><span class="t" style="left:1802.60px;top:791.93px;font-size:18.75px;line-height:18.75px;color:#f2f2f2;transform:scaleX(0.7500);">0,48</span><span class="t" style="left:1802.60px;top:820.13px;font-size:18.75px;line-height:18.75px;color:#fff;transform:scaleX(0.7500);">73,41</span><span class="t" style="left:1802.60px;top:848.33px;font-size:18.75px;line-height:18.75px;color:#f2f2f2;transform:scaleX(0.7500);">0,45</span><span class="t" style="left:1802.60px;top:876.53px;font-size:18.75px;line-height:18.75px;color:#fff;transform:scaleX(0.7500);">0,47</span><span class="t" style="left:1802.60px;top:904.73px;font-size:18.75px;line-height:18.75px;color:#f2f2f2;transform:scaleX(0.7500);">73,76</span><span class="t" style="left:1802.60px;top:932.93px;font-size:18.75px;line-height:18.75px;color:#fff;transform:scaleX(0.7500);">1,96</span><span class="t" style="left:1849.40px;top:736.31px;font-size:15.70px;line-height:15.70px;color:#fff;transform:scaleX(0.8560);">Magenta</span><span class="t" style="left:1849.40px;top:763.73px;font-size:18.75px;line-height:18.75px;color:#fff;transform:scaleX(0.7500);">0,35</span><span class="t" style="left:1849.40px;top:791.93px;font-size:18.75px;line-height:18.75px;color:#f2f2f2;transform:scaleX(0.7500);">0,26</span><span class="t" style="left:1849.40px;top:820.13px;font-size:18.75px;line-height:18.75px;color:#fff;transform:scaleX(0.7500);">28,66</span><span class="t" style="left:1849.40px;top:848.33px;font-size:18.75px;line-height:18.75px;color:#f2f2f2;transform:scaleX(0.7500);">0,37</span><span class="t" style="left:1849.40px;top:876.53px;font-size:18.75px;line-height:18.75px;color:#fff;transform:scaleX(0.7500);">0,25</span><span class="t" style="left:1849.40px;top:904.73px;font-size:18.75px;line-height:18.75px;color:#f2f2f2;transform:scaleX(0.7500);">23,55</span><span class="t" style="left:1849.40px;top:932.93px;font-size:18.75px;line-height:18.75px;color:#fff;transform:scaleX(0.7500);">5,56</span><span class="t" style="left:1911.10px;top:736.31px;font-size:15.70px;line-height:15.70px;color:#fff;transform:scaleX(0.8560);">Cyan</span><span class="t" style="left:1911.10px;top:763.73px;font-size:18.75px;line-height:18.75px;color:#fff;transform:scaleX(0.7500);">0,21</span><span class="t" style="left:1911.10px;top:791.93px;font-size:18.75px;line-height:18.75px;color:#f2f2f2;transform:scaleX(0.7500);">0,28</span><span class="t" style="left:1911.10px;top:820.13px;font-size:18.75px;line-height:18.75px;color:#fff;transform:scaleX(0.7500);">32,70</span><span class="t" style="left:1911.10px;top:848.33px;font-size:18.75px;line-height:18.75px;color:#f2f2f2;transform:scaleX(0.7500);">0,20</span><span class="t" style="left:1911.10px;top:876.53px;font-size:18.75px;line-height:18.75px;color:#fff;transform:scaleX(0.7500);">0,27</span><span class="t" style="left:1911.10px;top:904.73px;font-size:18.75px;line-height:18.75px;color:#f2f2f2;transform:scaleX(0.7500);">24,90</span><span class="t" style="left:1911.10px;top:932.93px;font-size:18.75px;line-height:18.75px;color:#fff;transform:scaleX(0.7500);">6,92</span></div></div>
<div class="b" style="left:386.00px;top:955.20px;width:1534.00px;height:17.00px;background:#5a5a5a;"></div>
<div class="b" style="left:386.30px;top:955.60px;width:14.00px;height:16.20px;background:linear-gradient(#9a9a9a,#6a6a6a);border:1px solid #bbb;border-radius:2px;"></div>
<div class="b" style="left:1907.00px;top:955.60px;width:14.00px;height:16.20px;background:linear-gradient(#9a9a9a,#6a6a6a);border:1px solid #bbb;border-radius:2px;"></div>
<div class="b" style="left:403.30px;top:956.60px;width:1471.00px;height:14.20px;background:#3e3e3e;border-radius:7px;"></div>
<svg width="1920" height="980"><path d="M396.5 959v9.6l-6-4.8zM1911 959v9.6l6-4.8z" fill="#3a3a3a"/></svg>
<div class="b" style="left:0.00px;top:973.50px;width:1920.00px;height:66.00px;background:#2e2e2e;"></div>
<div class="b" style="left:0.00px;top:973.50px;width:1920.00px;height:1.50px;background:#4c4c4c;"></div>
<div class="b" style="left:3.30px;top:978.30px;width:65.00px;height:60.00px;background:linear-gradient(#929292,#7a7a7a 45%,#5e5e5e);border-radius:5px;border:1px solid #8a8a8a;"></div>
<div class="b" style="left:8.30px;top:982.60px;width:55.00px;height:24.30px;background:#000000;border-radius:4px;border:1.5px solid rgba(255,255,255,.22);box-shadow:0 0 0 1px rgba(0,0,0,.25);"></div>
<span class="t" style="left:22.80px;top:1012.18px;font-size:11.60px;line-height:11.60px;color:#303030;font-weight:700;transform:scaleX(0.8399);text-shadow:0 1px 0 rgba(255,255,255,.25);">Black</span>
<div class="b" style="left:69.80px;top:978.30px;width:65.00px;height:60.00px;background:linear-gradient(#929292,#7a7a7a 45%,#5e5e5e);border-radius:5px;border:1px solid #8a8a8a;"></div>
<div class="b" style="left:74.80px;top:982.60px;width:55.00px;height:24.30px;background:#595959;border-radius:4px;border:1.5px solid rgba(255,255,255,.22);box-shadow:0 0 0 1px rgba(0,0,0,.25);"></div>
<span class="t" style="left:83.80px;top:1012.18px;font-size:11.60px;line-height:11.60px;color:#303030;font-weight:700;transform:scaleX(0.8692);text-shadow:0 1px 0 rgba(255,255,255,.25);">Gray 35</span>
<div class="b" style="left:136.30px;top:978.30px;width:65.00px;height:60.00px;background:linear-gradient(#929292,#7a7a7a 45%,#5e5e5e);border-radius:5px;border:1px solid #8a8a8a;"></div>
<div class="b" style="left:141.30px;top:982.60px;width:55.00px;height:24.30px;background:#808080;border-radius:4px;border:1.5px solid rgba(255,255,255,.22);box-shadow:0 0 0 1px rgba(0,0,0,.25);"></div>
<span class="t" style="left:150.15px;top:1012.18px;font-size:11.60px;line-height:11.60px;color:#303030;font-weight:700;transform:scaleX(0.8763);text-shadow:0 1px 0 rgba(255,255,255,.25);">Gray 50</span>
<div class="b" style="left:202.80px;top:978.30px;width:65.00px;height:60.00px;background:linear-gradient(#929292,#7a7a7a 45%,#5e5e5e);border-radius:5px;border:1px solid #8a8a8a;"></div>
<div class="b" style="left:207.80px;top:982.60px;width:55.00px;height:24.30px;background:#a6a6a6;border-radius:4px;border:1.5px solid rgba(255,255,255,.22);box-shadow:0 0 0 1px rgba(0,0,0,.25);"></div>
<span class="t" style="left:216.65px;top:1012.18px;font-size:11.60px;line-height:11.60px;color:#303030;font-weight:700;transform:scaleX(0.8763);text-shadow:0 1px 0 rgba(255,255,255,.25);">Gray 65</span>
<div class="b" style="left:269.30px;top:978.30px;width:65.00px;height:60.00px;background:linear-gradient(#929292,#7a7a7a 45%,#5e5e5e);border-radius:5px;border:1px solid #8a8a8a;"></div>
<div class="b" style="left:274.30px;top:982.60px;width:55.00px;height:24.30px;background:#cccccc;border-radius:4px;border:1.5px solid rgba(255,255,255,.22);box-shadow:0 0 0 1px rgba(0,0,0,.25);"></div>
<span class="t" style="left:283.15px;top:1012.18px;font-size:11.60px;line-height:11.60px;color:#303030;font-weight:700;transform:scaleX(0.8763);text-shadow:0 1px 0 rgba(255,255,255,.25);">Gray 80</span>
<div class="b" style="left:335.80px;top:978.30px;width:65.00px;height:60.00px;background:linear-gradient(#929292,#7a7a7a 45%,#5e5e5e);border-radius:5px;border:1px solid #8a8a8a;"></div>
<div class="b" style="left:340.80px;top:982.60px;width:55.00px;height:24.30px;background:#ffffff;border-radius:4px;border:1.5px solid rgba(255,255,255,.22);box-shadow:0 0 0 1px rgba(0,0,0,.25);"></div>
<span class="t" style="left:353.65px;top:1012.18px;font-size:11.60px;line-height:11.60px;color:#303030;font-weight:700;transform:scaleX(0.9280);text-shadow:0 1px 0 rgba(255,255,255,.25);">White</span>
<div class="b" style="left:402.30px;top:978.30px;width:65.00px;height:60.00px;background:linear-gradient(#929292,#7a7a7a 45%,#5e5e5e);border-radius:5px;border:1px solid #8a8a8a;"></div>
<div class="b" style="left:407.30px;top:982.60px;width:55.00px;height:24.30px;background:#765040;border-radius:4px;border:1.5px solid rgba(255,255,255,.22);box-shadow:0 0 0 1px rgba(0,0,0,.25);"></div>
<span class="t" style="left:411.80px;top:1012.18px;font-size:11.60px;line-height:11.60px;color:#303030;font-weight:700;transform:scaleX(0.8596);text-shadow:0 1px 0 rgba(255,255,255,.25);">Dark Skin</span>
<div class="b" style="left:468.80px;top:978.30px;width:65.00px;height:60.00px;background:linear-gradient(#929292,#7a7a7a 45%,#5e5e5e);border-radius:5px;border:1px solid #8a8a8a;"></div>
<div class="b" style="left:473.80px;top:982.60px;width:55.00px;height:24.30px;background:#c99a85;border-radius:4px;border:1.5px solid rgba(255,255,255,.22);box-shadow:0 0 0 1px rgba(0,0,0,.25);"></div>
<span class="t" style="left:477.80px;top:1012.18px;font-size:11.60px;line-height:11.60px;color:#303030;font-weight:700;transform:scaleX(0.8383);text-shadow:0 1px 0 rgba(255,255,255,.25);">Light Skin</span>
<div class="b" style="left:535.30px;top:978.30px;width:65.00px;height:60.00px;background:linear-gradient(#929292,#7a7a7a 45%,#5e5e5e);border-radius:5px;border:1px solid #8a8a8a;"></div>
<div class="b" style="left:540.30px;top:982.60px;width:55.00px;height:24.30px;background:#5b7fa5;border-radius:4px;border:1.5px solid rgba(255,255,255,.22);box-shadow:0 0 0 1px rgba(0,0,0,.25);"></div>
<span class="t" style="left:547.15px;top:1012.18px;font-size:11.60px;line-height:11.60px;color:#303030;font-weight:700;transform:scaleX(0.8428);text-shadow:0 1px 0 rgba(255,255,255,.25);">Blue Sky</span>
<div class="b" style="left:601.80px;top:978.30px;width:65.00px;height:60.00px;background:linear-gradient(#929292,#7a7a7a 45%,#5e5e5e);border-radius:5px;border:1px solid #8a8a8a;"></div>
<div class="b" style="left:606.80px;top:982.60px;width:55.00px;height:24.30px;background:#59713f;border-radius:4px;border:1.5px solid rgba(255,255,255,.22);box-shadow:0 0 0 1px rgba(0,0,0,.25);"></div>
<span class="t" style="left:615.55px;top:1012.18px;font-size:11.60px;line-height:11.60px;color:#303030;font-weight:700;transform:scaleX(0.9235);text-shadow:0 1px 0 rgba(255,255,255,.25);">Foliage</span>
<div class="b" style="left:668.30px;top:978.30px;width:65.00px;height:60.00px;background:linear-gradient(#929292,#7a7a7a 45%,#5e5e5e);border-radius:5px;border:1px solid #8a8a8a;"></div>
<div class="b" style="left:673.30px;top:982.60px;width:55.00px;height:24.30px;background:#8784b5;border-radius:4px;border:1.5px solid rgba(255,255,255,.22);box-shadow:0 0 0 1px rgba(0,0,0,.25);"></div>
<span class="t" style="left:671.65px;top:1012.18px;font-size:11.60px;line-height:11.60px;color:#303030;font-weight:700;transform:scaleX(0.8868);text-shadow:0 1px 0 rgba(255,255,255,.25);">Blue Flower</span>
<div class="b" style="left:734.80px;top:978.30px;width:65.00px;height:60.00px;background:linear-gradient(#929292,#7a7a7a 45%,#5e5e5e);border-radius:5px;border:1px solid #8a8a8a;"></div>
<div class="b" style="left:739.80px;top:982.60px;width:55.00px;height:24.30px;background:#66bfad;border-radius:4px;border:1.5px solid rgba(255,255,255,.22);box-shadow:0 0 0 1px rgba(0,0,0,.25);"></div>
<span class="t" style="left:735.95px;top:1012.18px;font-size:11.60px;line-height:11.60px;color:#303030;font-weight:700;transform:scaleX(0.8685);text-shadow:0 1px 0 rgba(255,255,255,.25);">Bluish Green</span>
<div class="b" style="left:801.30px;top:978.30px;width:65.00px;height:60.00px;background:linear-gradient(#929292,#7a7a7a 45%,#5e5e5e);border-radius:5px;border:1px solid #8a8a8a;"></div>
<div class="b" style="left:806.30px;top:982.60px;width:55.00px;height:24.30px;background:#da7a28;border-radius:4px;border:1.5px solid rgba(255,255,255,.22);box-shadow:0 0 0 1px rgba(0,0,0,.25);"></div>
<span class="t" style="left:816.05px;top:1012.18px;font-size:11.60px;line-height:11.60px;color:#303030;font-weight:700;transform:scaleX(0.8741);text-shadow:0 1px 0 rgba(255,255,255,.25);">Orange</span>
<div class="b" style="left:867.80px;top:978.30px;width:65.00px;height:60.00px;background:linear-gradient(#929292,#7a7a7a 45%,#5e5e5e);border-radius:5px;border:1px solid #8a8a8a;"></div>
<div class="b" style="left:872.80px;top:982.60px;width:55.00px;height:24.30px;background:#485ca8;border-radius:4px;border:1.5px solid rgba(255,255,255,.22);box-shadow:0 0 0 1px rgba(0,0,0,.25);"></div>
<span class="t" style="left:880.30px;top:1012.18px;font-size:11.60px;line-height:11.60px;color:#303030;font-weight:700;transform:scaleX(0.8620);text-shadow:0 1px 0 rgba(255,255,255,.25);">Purplish</span>
<span class="t" style="left:880.30px;top:1024.18px;font-size:11.60px;line-height:11.60px;color:#303030;font-weight:700;transform:scaleX(0.8632);text-shadow:0 1px 0 rgba(255,255,255,.25);">Blue</span>
<div class="b" style="left:934.30px;top:978.30px;width:65.00px;height:60.00px;background:linear-gradient(#929292,#7a7a7a 45%,#5e5e5e);border-radius:5px;border:1px solid #8a8a8a;"></div>
<div class="b" style="left:939.30px;top:982.60px;width:55.00px;height:24.30px;background:#c4525f;border-radius:4px;border:1.5px solid rgba(255,255,255,.22);box-shadow:0 0 0 1px rgba(0,0,0,.25);"></div>
<span class="t" style="left:942.65px;top:1012.18px;font-size:11.60px;line-height:11.60px;color:#303030;font-weight:700;transform:scaleX(0.9366);text-shadow:0 1px 0 rgba(255,255,255,.25);">Moderate</span>
<span class="t" style="left:942.65px;top:1024.18px;font-size:11.60px;line-height:11.60px;color:#303030;font-weight:700;transform:scaleX(0.8350);text-shadow:0 1px 0 rgba(255,255,255,.25);">Red</span>
<div class="b" style="left:1000.80px;top:978.30px;width:65.00px;height:60.00px;background:linear-gradient(#929292,#7a7a7a 45%,#5e5e5e);border-radius:5px;border:1px solid #8a8a8a;"></div>
<div class="b" style="left:1005.80px;top:982.60px;width:55.00px;height:24.30px;background:#5c3a6e;border-radius:4px;border:1.5px solid rgba(255,255,255,.22);box-shadow:0 0 0 1px rgba(0,0,0,.25);"></div>
<span class="t" style="left:1017.30px;top:1012.18px;font-size:11.60px;line-height:11.60px;color:#303030;font-weight:700;transform:scaleX(0.8865);text-shadow:0 1px 0 rgba(255,255,255,.25);">Purple</span>
<div class="b" style="left:1067.30px;top:978.30px;width:65.00px;height:60.00px;background:linear-gradient(#929292,#7a7a7a 45%,#5e5e5e);border-radius:5px;border:1px solid #8a8a8a;"></div>
<div class="b" style="left:1072.30px;top:982.60px;width:55.00px;height:24.30px;background:#a2c03e;border-radius:4px;border:1.5px solid rgba(255,255,255,.22);box-shadow:0 0 0 1px rgba(0,0,0,.25);"></div>
<span class="t" style="left:1083.65px;top:1012.18px;font-size:11.60px;line-height:11.60px;color:#303030;font-weight:700;transform:scaleX(0.8947);text-shadow:0 1px 0 rgba(255,255,255,.25);">Yellow</span>
<span class="t" style="left:1083.65px;top:1024.18px;font-size:11.60px;line-height:11.60px;color:#303030;font-weight:700;transform:scaleX(0.8859);text-shadow:0 1px 0 rgba(255,255,255,.25);">Green</span>
<div class="b" style="left:1133.80px;top:978.30px;width:65.00px;height:60.00px;background:linear-gradient(#929292,#7a7a7a 45%,#5e5e5e);border-radius:5px;border:1px solid #8a8a8a;"></div>
<div class="b" style="left:1138.80px;top:982.60px;width:55.00px;height:24.30px;background:#e8a42c;border-radius:4px;border:1.5px solid rgba(255,255,255,.22);box-shadow:0 0 0 1px rgba(0,0,0,.25);"></div>
<span class="t" style="left:1148.55px;top:1012.18px;font-size:11.60px;line-height:11.60px;color:#303030;font-weight:700;transform:scaleX(0.8741);text-shadow:0 1px 0 rgba(255,255,255,.25);">Orange</span>
<span class="t" style="left:1148.55px;top:1024.18px;font-size:11.60px;line-height:11.60px;color:#303030;font-weight:700;transform:scaleX(0.8947);text-shadow:0 1px 0 rgba(255,255,255,.25);">Yellow</span>
<div class="b" style="left:1200.30px;top:978.30px;width:65.00px;height:60.00px;background:linear-gradient(#929292,#7a7a7a 45%,#5e5e5e);border-radius:5px;border:1px solid #8a8a8a;"></div>
<div class="b" style="left:1205.30px;top:982.60px;width:55.00px;height:24.30px;background:#2b3a9c;border-radius:4px;border:1.5px solid rgba(255,255,255,.22);box-shadow:0 0 0 1px rgba(0,0,0,.25);"></div>
<span class="t" style="left:1221.95px;top:1012.18px;font-size:11.60px;line-height:11.60px;color:#303030;font-weight:700;transform:scaleX(0.8632);text-shadow:0 1px 0 rgba(255,255,255,.25);">Blue</span>
<div class="b" style="left:1266.80px;top:978.30px;width:65.00px;height:60.00px;background:linear-gradient(#929292,#7a7a7a 45%,#5e5e5e);border-radius:5px;border:1px solid #8a8a8a;"></div>
<div class="b" style="left:1271.80px;top:982.60px;width:55.00px;height:24.30px;background:#469a47;border-radius:4px;border:1.5px solid rgba(255,255,255,.22);box-shadow:0 0 0 1px rgba(0,0,0,.25);"></div>
<span class="t" style="left:1284.45px;top:1012.18px;font-size:11.60px;line-height:11.60px;color:#303030;font-weight:700;transform:scaleX(0.8859);text-shadow:0 1px 0 rgba(255,255,255,.25);">Green</span>
<div class="b" style="left:1333.30px;top:978.30px;width:65.00px;height:60.00px;background:linear-gradient(#929292,#7a7a7a 45%,#5e5e5e);border-radius:5px;border:1px solid #8a8a8a;"></div>
<div class="b" style="left:1338.30px;top:982.60px;width:55.00px;height:24.30px;background:#b22a38;border-radius:4px;border:1.5px solid rgba(255,255,255,.22);box-shadow:0 0 0 1px rgba(0,0,0,.25);"></div>
<span class="t" style="left:1356.65px;top:1012.18px;font-size:11.60px;line-height:11.60px;color:#303030;font-weight:700;transform:scaleX(0.8350);text-shadow:0 1px 0 rgba(255,255,255,.25);">Red</span>
<div class="b" style="left:1399.80px;top:978.30px;width:65.00px;height:60.00px;background:linear-gradient(#929292,#7a7a7a 45%,#5e5e5e);border-radius:5px;border:1px solid #8a8a8a;"></div>
<div class="b" style="left:1404.80px;top:982.60px;width:55.00px;height:24.30px;background:#f0cd20;border-radius:4px;border:1.5px solid rgba(255,255,255,.22);box-shadow:0 0 0 1px rgba(0,0,0,.25);"></div>
<span class="t" style="left:1416.15px;top:1012.18px;font-size:11.60px;line-height:11.60px;color:#303030;font-weight:700;transform:scaleX(0.8947);text-shadow:0 1px 0 rgba(255,255,255,.25);">Yellow</span>
<div class="b" style="left:1466.30px;top:978.30px;width:65.00px;height:60.00px;background:linear-gradient(#929292,#7a7a7a 45%,#5e5e5e);border-radius:5px;border:1px solid #8a8a8a;"></div>
<div class="b" style="left:1471.30px;top:982.60px;width:55.00px;height:24.30px;background:#bd5696;border-radius:4px;border:1.5px solid rgba(255,255,255,.22);box-shadow:0 0 0 1px rgba(0,0,0,.25);"></div>
<span class="t" style="left:1477.15px;top:1012.18px;font-size:11.60px;line-height:11.60px;color:#303030;font-weight:700;transform:scaleX(0.9202);text-shadow:0 1px 0 rgba(255,255,255,.25);">Magenta</span>
<div class="b" style="left:1532.80px;top:978.30px;width:65.00px;height:60.00px;background:linear-gradient(#6e6e6e,#505050 50%,#3c3c3c);border-radius:5px;border:1px solid #5a5a5a;"></div>
<div class="b" style="left:1537.80px;top:982.60px;width:55.00px;height:24.30px;background:#0085a3;border-radius:4px;border:1.5px solid rgba(255,255,255,.22);box-shadow:0 0 0 1px rgba(0,0,0,.25);"></div>
<span class="t" style="left:1553.30px;top:1012.18px;font-size:11.60px;line-height:11.60px;color:#fff;font-weight:700;transform:scaleX(0.8461);">Cyan</span>
<div class="b" style="left:0.00px;top:1008.00px;width:2.60px;height:30.30px;background:#6e6e6e;border-radius:0 3px 3px 0;"></div>
<div class="b" style="left:1600.00px;top:977.70px;width:48.00px;height:18.50px;background:linear-gradient(#a6a6a6,#8c8c8c 45%,#6c6c6c);border-radius:5px 5px 0 0;border:1px solid #999;"></div>
<div class="b" style="left:1600.00px;top:996.50px;width:48.00px;height:41.80px;background:linear-gradient(#a6a6a6,#8c8c8c 45%,#6c6c6c);border-radius:0 0 5px 5px;border:1px solid #999;"></div>
<div class="b" style="left:1607.70px;top:1001.80px;width:32.70px;height:32.40px;background:linear-gradient(#c8c8c8,#b0b0b0 49%,#8c8c8c 51%,#9c9c9c);border:2.2px solid #2a2a2a;border-radius:4px;box-shadow:0 0 0 1px #ccc;"></div>
<div class="b" style="left:1617.00px;top:1011.30px;width:14.30px;height:13.80px;background:#000;"></div>
<div class="b" style="left:1649.30px;top:977.70px;width:45.20px;height:29.80px;background:linear-gradient(#a6a6a6,#8c8c8c 45%,#6c6c6c);border-left:1px solid #b4b4b4;border-right:1px solid #5c5c5c;"></div>
<div class="b" style="left:1694.50px;top:977.70px;width:45.20px;height:29.80px;background:linear-gradient(#a6a6a6,#8c8c8c 45%,#6c6c6c);border-left:1px solid #b4b4b4;border-right:1px solid #5c5c5c;"></div>
<div class="b" style="left:1739.70px;top:977.70px;width:45.20px;height:29.80px;background:linear-gradient(#a6a6a6,#8c8c8c 45%,#6c6c6c);border-left:1px solid #b4b4b4;border-right:1px solid #5c5c5c;"></div>
<div class="b" style="left:1784.90px;top:977.70px;width:45.20px;height:29.80px;background:linear-gradient(#a6a6a6,#8c8c8c 45%,#6c6c6c);border-left:1px solid #b4b4b4;border-right:1px solid #5c5c5c;"></div>
<div class="b" style="left:1830.10px;top:977.70px;width:45.20px;height:29.80px;background:linear-gradient(#444,#333 50%,#262626);border-left:1px solid #444;border-right:1px solid #1c1c1c;"></div>
<div class="b" style="left:1875.30px;top:977.70px;width:45.20px;height:29.80px;background:linear-gradient(#444,#333 50%,#262626);border-left:1px solid #444;border-right:1px solid #1c1c1c;"></div>
<div class="b" style="left:1649.30px;top:1009.20px;width:136.10px;height:29.00px;background:linear-gradient(#a6a6a6,#8c8c8c 45%,#6c6c6c);border:1px solid #aaa;border-radius:0 0 0 4px;"></div>
<div class="b" style="left:1785.40px;top:1009.20px;width:136.00px;height:29.00px;background:linear-gradient(#a6a6a6,#8c8c8c 45%,#6c6c6c);border:1px solid #aaa;"></div>
<svg width="1920" height="1048"><defs><linearGradient id="cb" x1="0" y1="0" x2="0" y2="1"><stop offset="0" stop-color="#7e7e7e"/><stop offset="1" stop-color="#b4b4b4"/></linearGradient><linearGradient id="cd" x1="0" y1="0" x2="0" y2="1"><stop offset="0" stop-color="#262626"/><stop offset="1" stop-color="#3c3c3c"/></linearGradient></defs><circle cx="1624.5" cy="986.8" r="7.4" fill="url(#cb)"/><path d="M1620.5 988.8h8l-4-4.6z" fill="#333"/><circle cx="1671.9" cy="992.6" r="10" fill="url(#cb)"/><circle cx="1717.1" cy="992.6" r="10" fill="url(#cb)"/><circle cx="1762.3" cy="992.6" r="10" fill="url(#cb)"/><circle cx="1807.5" cy="992.6" r="10" fill="url(#cb)"/><circle cx="1852.7" cy="992.6" r="10" fill="url(#cd)"/><circle cx="1897.9" cy="992.6" r="10" fill="url(#cd)"/><rect x="1667.9" y="988.6" width="8" height="8" fill="#333"/><path d="M1713.7 987.2v10.8l8.2-5.4z" fill="#2c2c2c"/><path d="M1758.9 988h-2.4v9.2h2.4M1765.7 988h2.4v9.2h-2.4" fill="none" stroke="#333" stroke-width="1.5"/><path d="M1759.9 992.6h1.6M1763.1 992.6h1.6" stroke="#333" stroke-width="1.5"/><path d="M1807.5 992.6c-2-3.4-6-3-6 0s4 3.4 6 0c2-3.4 6-3 6 0s-4 3.4-6 0z" fill="none" stroke="#333" stroke-width="1.4"/><path d="M1847.9 991a5 5 0 0 1 9-1.6M1857.5 994.2a5 5 0 0 1-9 1.6" fill="none" stroke="#1a1a1a" stroke-width="2"/><path d="M1858.1 987.2v3.6h-3.6zM1847.3 998v-3.6h3.6z" fill="#1a1a1a"/><circle cx="1680" cy="1023.3" r="10" fill="url(#cb)"/><circle cx="1893" cy="1023.3" r="10" fill="url(#cb)"/><path d="M1681 1018.2l-4.6 5.1 4.6 5.1M1686 1018.2l-4.6 5.1 4.6 5.1M1888.5 1018.2l4.6 5.1-4.6 5.1M1893.5 1018.2l4.6 5.1-4.6 5.1" fill="none" stroke="#333" stroke-width="1.5"/></svg>
<span class="t" style="left:1706.90px;top:1012.61px;font-size:22.67px;line-height:22.67px;color:#2e2e2e;transform:scaleX(0.9879);text-shadow:0 0 .6px #2e2e2e;">Back</span>
<span class="t" style="left:1813.40px;top:1012.61px;font-size:22.67px;line-height:22.67px;color:#2e2e2e;transform:scaleX(1.1261);text-shadow:0 0 .6px #2e2e2e;">Next</span>
<div class="b" style="left:0.00px;top:1039.30px;width:1920.00px;height:9.00px;background:linear-gradient(90deg,#2e6e9e 0%,#2a78a8 40%,#2a86b2 60%,#2c90b6 75%,#3098bc 100%);"></div>
<div class="b" style="left:302.50px;top:1040.80px;width:58.50px;height:8.00px;background:#7ba7c7;border:1px solid #d4e4f0;border-bottom:none;"></div>
<div class="b" style="left:255.00px;top:1045.30px;width:30.00px;height:3.00px;background:#089008;"></div>
<div class="b" style="left:31.00px;top:1046.60px;width:11.00px;height:2.00px;background:#e8e8e8;border-radius:6px 1px 0 0;"></div>
<div class="b" style="left:71.00px;top:1047.00px;width:14.00px;height:1.50px;background:#f0d090;"></div>
<div class="b" style="left:153.00px;top:1045.00px;width:8.00px;height:3.00px;background:#e8a858;border-radius:1px 7px 0 0;"></div>
<div class="b" style="left:199.00px;top:1045.00px;width:18.00px;height:6.00px;background:#58c0f0;border-radius:9px 9px 0 0;"></div>
<div class="b" style="left:319.00px;top:1044.00px;width:9.00px;height:4.00px;background:#3a1810;border-radius:5px 2px 0 0;"></div>
<div class="b" style="left:0.00px;top:1039.00px;width:2.60px;height:7.00px;background:#40b0e0;"></div></div></body></html>
